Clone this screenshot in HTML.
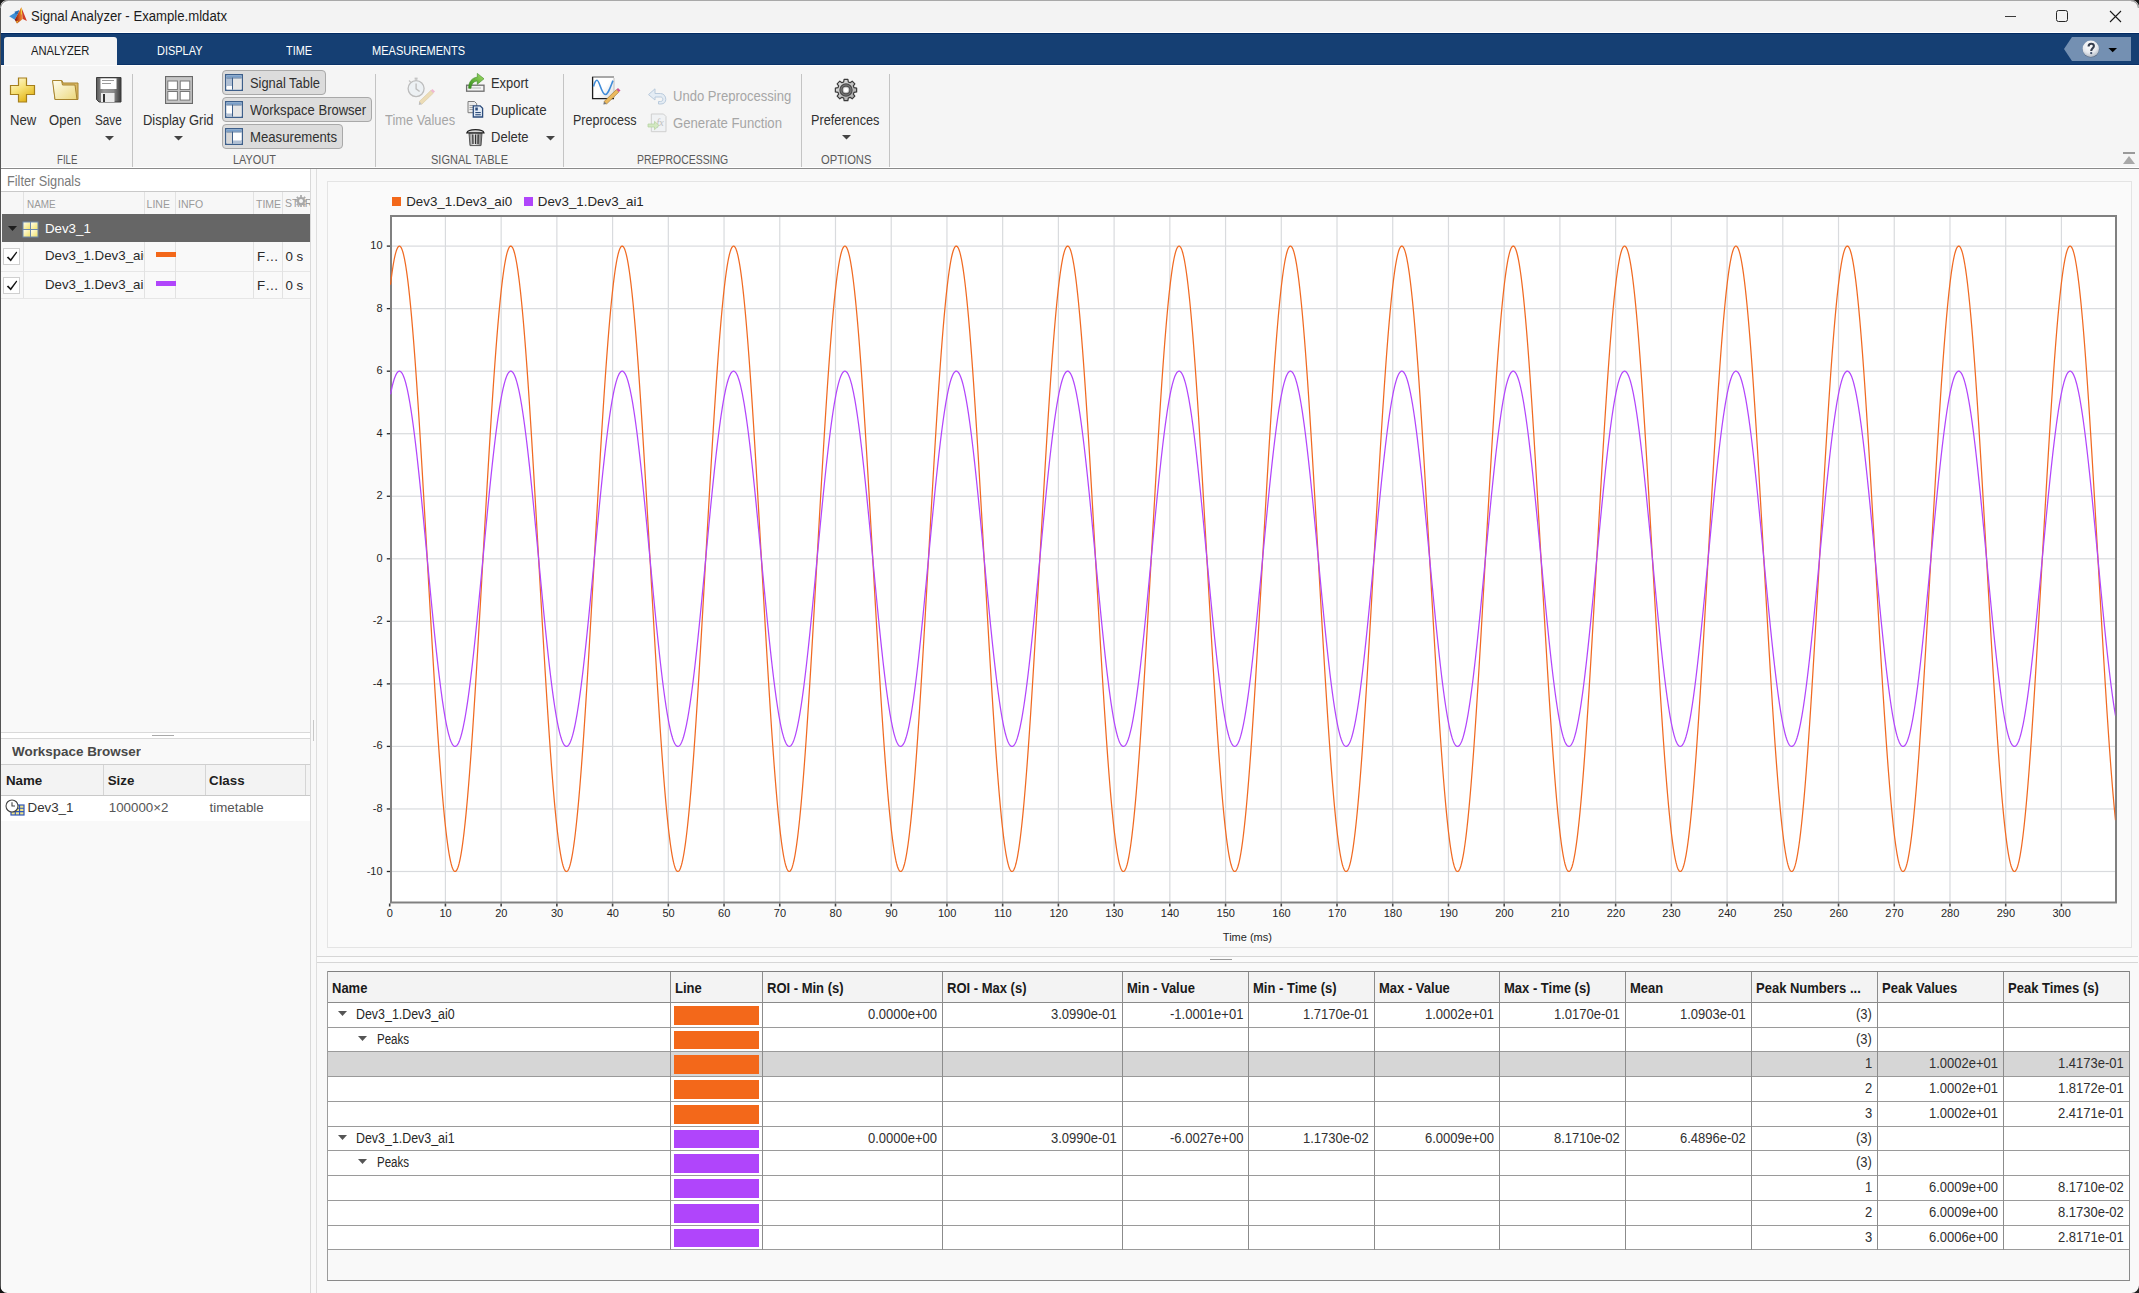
<!DOCTYPE html>
<html><head><meta charset="utf-8"><title>Signal Analyzer - Example.mldatx</title>
<style>
html,body{margin:0;padding:0;}
body{width:2139px;height:1293px;overflow:hidden;position:relative;background:#f5f5f5;font-family:"Liberation Sans",sans-serif;}
.t{position:absolute;white-space:pre;line-height:1;}
</style></head><body>
<div style="position:absolute;left:0px;top:0px;width:2139px;height:1293px;background:#202020"></div>
<div style="position:absolute;left:0px;top:0px;width:2139px;height:1293px;background:#f9f9f9"></div>
<div style="position:absolute;left:0px;top:0px;width:2139px;height:1px;background:#a8a8a8"></div>
<div style="position:absolute;left:0px;top:0px;width:1px;height:1293px;background:#555555"></div>
<div style="position:absolute;left:1px;top:1px;width:1px;height:1291px;background:#ffffff"></div>
<div style="position:absolute;left:1px;top:1px;width:2138px;height:32px;background:#f3f3f3;border-radius:8px 8px 0 0"></div>
<div style="position:absolute;left:1px;top:32px;width:2138px;height:1px;background:#ffffff"></div>
<svg style="position:absolute;left:8px;top:6px" width="21" height="20" viewBox="0 0 21 20">
<defs><linearGradient id="mll" x1="0" y1="0" x2="1" y2="0"><stop offset="0" stop-color="#7a0f0c"/><stop offset="0.55" stop-color="#d2561e"/><stop offset="1" stop-color="#f39a3a"/></linearGradient></defs>
<path d="M1.2,10.3 L11.2,4.2 L9.8,8 L6.8,13.7 Z" fill="#3d8fd6"/>
<path d="M6.5,5.8 L11.2,4.2 L9.8,8 L7.5,8.3 Z" fill="#2a6fb5"/>
<path d="M6.8,13.7 L13.3,1.2 L14.8,13.1 L9,17.6 Z" fill="url(#mll)"/>
<path d="M13.3,1.2 L18.9,15 L14.8,13.1 Z" fill="#cf3d28"/>
<path d="M12.9,2.3 L13.9,2.3 L14.2,8.5 L12.9,8.5 Z" fill="#f2d33a" opacity="0.9"/>
<path d="M8,15.5 L10.5,14.5 L9,17.6 Z" fill="#f3b62f"/>
</svg>
<div class="t" style="left:31.00px;top:9.10px;font-size:14px;color:#1b1b1b;transform:scaleX(0.9398);transform-origin:0 0;">Signal Analyzer - Example.mldatx</div>
<div style="position:absolute;left:2005px;top:16px;width:11px;height:1px;background:#3a3a3a"></div>
<div style="position:absolute;left:2056.4px;top:10.3px;width:11.4px;height:11.4px;border:1.5px solid #262626;border-radius:2.5px;box-sizing:border-box"></div>
<svg style="position:absolute;left:2109px;top:9.5px" width="13" height="13" viewBox="0 0 13 13"><path d="M1,1 L12,12 M12,1 L1,12" stroke="#1a1a1a" stroke-width="1.1"/></svg>
<div style="position:absolute;left:1px;top:33px;width:2138px;height:32px;background:#153f73"></div>
<div style="position:absolute;left:1px;top:33px;width:2138px;height:1px;background:#022a62"></div>
<div style="position:absolute;left:1px;top:64px;width:2138px;height:1px;background:#0a3268"></div>
<div style="position:absolute;left:4px;top:37px;width:113px;height:29px;background:#f5f5f5;border-radius:3px 3px 0 0"></div>
<div class="t" style="left:31.40px;top:44.02px;font-size:13.5px;color:#1a1a1a;transform:scaleX(0.8309);transform-origin:0 0;">ANALYZER</div>
<div class="t" style="left:157.00px;top:44.02px;font-size:13.5px;color:#ffffff;transform:scaleX(0.8120);transform-origin:0 0;">DISPLAY</div>
<div class="t" style="left:286.00px;top:44.02px;font-size:13.5px;color:#ffffff;transform:scaleX(0.8062);transform-origin:0 0;">TIME</div>
<div class="t" style="left:371.70px;top:44.02px;font-size:13.5px;color:#ffffff;transform:scaleX(0.8166);transform-origin:0 0;">MEASUREMENTS</div>
<svg style="position:absolute;left:2063px;top:36px" width="70" height="26" viewBox="0 0 70 26">
<path d="M1,13 L9,1 L68,1 L68,25 L9,25 Z" fill="#7490b2"/>
<defs><radialGradient id="hg" cx="0.45" cy="0.3" r="0.75"><stop offset="0" stop-color="#ffffff"/><stop offset="0.6" stop-color="#e6e9ee"/><stop offset="1" stop-color="#aab3bf"/></radialGradient></defs>
<circle cx="27.9" cy="13.2" r="8.4" fill="#4a5568" opacity="0.55"/>
<circle cx="27.8" cy="12.7" r="8.2" fill="url(#hg)"/>
<path d="M25.6,10.4 C25.6,8.5 26.8,7.7 28.2,7.7 C29.8,7.7 30.9,8.7 30.9,10.1 C30.9,12.2 28.2,12.5 28.2,14.9" stroke="#353d4d" stroke-width="2.1" fill="none"/>
<circle cx="28.2" cy="17.1" r="1.15" fill="#3a4a66"/>
<path d="M45.4,12 L54,12 L49.7,16.3 Z" fill="#000"/>
</svg>
<div style="position:absolute;left:1px;top:65px;width:2138px;height:103px;background:#f5f5f5"></div>
<div style="position:absolute;left:1px;top:65px;width:2138px;height:1px;background:#fdfdfd"></div>
<div style="position:absolute;left:1px;top:167px;width:2138px;height:1px;background:#ffffff"></div>
<div style="position:absolute;left:1px;top:168px;width:2138px;height:1px;background:#8a8a8a"></div>
<div style="position:absolute;left:132px;top:74px;width:1px;height:93px;background:#c4c4c4"></div>
<div style="position:absolute;left:375px;top:74px;width:1px;height:93px;background:#c4c4c4"></div>
<div style="position:absolute;left:563px;top:74px;width:1px;height:93px;background:#c4c4c4"></div>
<div style="position:absolute;left:801px;top:74px;width:1px;height:93px;background:#c4c4c4"></div>
<div style="position:absolute;left:889px;top:74px;width:1px;height:93px;background:#c4c4c4"></div>
<div class="t" style="left:56.60px;top:154.38px;font-size:12.5px;color:#5a5a5a;transform:scaleX(0.7725);transform-origin:0 0;">FILE</div>
<div class="t" style="left:232.70px;top:154.38px;font-size:12.5px;color:#5a5a5a;transform:scaleX(0.8738);transform-origin:0 0;">LAYOUT</div>
<div class="t" style="left:431.00px;top:154.38px;font-size:12.5px;color:#5a5a5a;transform:scaleX(0.8819);transform-origin:0 0;">SIGNAL TABLE</div>
<div class="t" style="left:636.80px;top:154.38px;font-size:12.5px;color:#5a5a5a;transform:scaleX(0.8362);transform-origin:0 0;">PREPROCESSING</div>
<div class="t" style="left:820.60px;top:154.38px;font-size:12.5px;color:#5a5a5a;transform:scaleX(0.8958);transform-origin:0 0;">OPTIONS</div>
<div class="t" style="left:9.80px;top:112.80px;font-size:14px;color:#303030;transform:scaleX(0.9352);transform-origin:0 0;">New</div>
<div class="t" style="left:49.40px;top:112.80px;font-size:14px;color:#303030;transform:scaleX(0.9314);transform-origin:0 0;">Open</div>
<div class="t" style="left:95.20px;top:112.80px;font-size:14px;color:#303030;transform:scaleX(0.8364);transform-origin:0 0;">Save</div>
<div class="t" style="left:142.50px;top:112.80px;font-size:14px;color:#303030;transform:scaleX(0.9246);transform-origin:0 0;">Display Grid</div>
<div class="t" style="left:385.30px;top:112.80px;font-size:14px;color:#a6a6a6;transform:scaleX(0.9193);transform-origin:0 0;">Time Values</div>
<div class="t" style="left:573.30px;top:112.60px;font-size:14px;color:#303030;transform:scaleX(0.8967);transform-origin:0 0;">Preprocess</div>
<div class="t" style="left:811.40px;top:112.60px;font-size:14px;color:#303030;transform:scaleX(0.9061);transform-origin:0 0;">Preferences</div>
<svg style="position:absolute;left:105px;top:136px" width="9" height="5" viewBox="0 0 9 5"><path d="M0,0 L9,0 L4.5,4.5 Z" fill="#444"/></svg>
<svg style="position:absolute;left:174px;top:136px" width="9" height="5" viewBox="0 0 9 5"><path d="M0,0 L9,0 L4.5,4.5 Z" fill="#444"/></svg>
<svg style="position:absolute;left:546px;top:136px" width="9" height="5" viewBox="0 0 9 5"><path d="M0,0 L9,0 L4.5,4.5 Z" fill="#444"/></svg>
<svg style="position:absolute;left:842px;top:134.5px" width="9" height="5" viewBox="0 0 9 5"><path d="M0,0 L9,0 L4.5,4.5 Z" fill="#444"/></svg>
<svg style="position:absolute;left:9px;top:77px" width="27" height="26" viewBox="0 0 27 26">
<defs><linearGradient id="pg" x1="0" y1="0" x2="0.6" y2="1"><stop offset="0" stop-color="#fffbe0"/><stop offset="0.5" stop-color="#f7e27a"/><stop offset="1" stop-color="#e3b518"/></linearGradient></defs>
<path d="M9.5,1 L17.5,1 L17.5,8.5 L25.5,8.5 L25.5,17.5 L17.5,17.5 L17.5,25 L9.5,25 L9.5,17.5 L1.5,17.5 L1.5,8.5 L9.5,8.5 Z" fill="url(#pg)" stroke="#a57f1c" stroke-width="1.2"/>
</svg>
<svg style="position:absolute;left:51px;top:79px" width="29" height="22" viewBox="0 0 29 22">
<defs><linearGradient id="fg" x1="0" y1="0" x2="1" y2="1"><stop offset="0" stop-color="#fffef2"/><stop offset="1" stop-color="#ecd77a"/></linearGradient></defs>
<path d="M2,1.5 L11,1.5 L12,4 L27,4 L27,20.5 L4,20.5 Z" fill="#d9b866" stroke="#a8842e" stroke-width="1"/>
<path d="M1.5,1.5 L10.5,1.5 L11.5,6 L24,6 L26,20.5 L4,20.5 Z" fill="url(#fg)" stroke="#a8842e" stroke-width="1"/>
</svg>
<svg style="position:absolute;left:96px;top:77px" width="26" height="26" viewBox="0 0 26 26">
<defs><linearGradient id="sg" x1="0" y1="0" x2="1" y2="0"><stop offset="0" stop-color="#5a5a5a"/><stop offset="0.3" stop-color="#9a9a9a"/><stop offset="0.7" stop-color="#8a8a8a"/><stop offset="1" stop-color="#3a3a3a"/></linearGradient></defs>
<path d="M0.5,0.5 L25,0.5 L25,25 L3,25 L0.5,22.5 Z" fill="url(#sg)" stroke="#3d3d3d" stroke-width="1"/>
<rect x="4.5" y="1.5" width="16" height="10.5" fill="#ffffff"/>
<rect x="6" y="3" width="12" height="1" fill="#9a9a9a"/><rect x="6" y="6" width="9" height="1" fill="#9a9a9a"/>
<rect x="5" y="16" width="13.5" height="9" fill="#ececec"/><rect x="7" y="17" width="2" height="8" fill="#333"/>
</svg>
<svg style="position:absolute;left:165px;top:76px" width="28" height="28" viewBox="0 0 28 28">
<rect x="0.5" y="0.5" width="27" height="27" fill="#c6c6c6" stroke="#6a6a6a" stroke-width="1.2"/>
<rect x="2.8" y="5" width="9.6" height="8.6" fill="#fff" stroke="#777" stroke-width="1"/>
<rect x="15.2" y="5" width="9.6" height="8.6" fill="#fff" stroke="#777" stroke-width="1"/>
<rect x="2.8" y="15.5" width="9.6" height="8.6" fill="#fff" stroke="#777" stroke-width="1"/>
<rect x="15.2" y="15.5" width="9.6" height="8.6" fill="#fff" stroke="#777" stroke-width="1"/>
</svg>
<div style="position:absolute;left:222px;top:70px;width:104px;height:25px;background:#dcdcdc;border:1px solid #a9a9a9;border-radius:4px;box-sizing:border-box"></div>
<svg style="position:absolute;left:225px;top:74px" width="18" height="17" viewBox="0 0 18 17"><rect x="0.7" y="0.7" width="16.6" height="15.6" fill="#fff" stroke="#3e5f8a" stroke-width="1.4"/><rect x="1.4" y="1.4" width="15.2" height="2.2" fill="#7aa0cb"/><rect x="8" y="4" width="8.5" height="11.3" fill="#e6e6e6"/><rect x="1.5" y="4" width="5.5" height="8" fill="#b1c0d4"/><rect x="1.5" y="12.5" width="5.5" height="2.8" fill="#fff"/><rect x="7" y="3.6" width="1" height="12" fill="#3e5f8a"/><rect x="1.4" y="3.6" width="15.2" height="0.8" fill="#3e5f8a"/></svg>
<div class="t" style="left:250.40px;top:75.80px;font-size:14px;color:#303030;transform:scaleX(0.9194);transform-origin:0 0;">Signal Table</div>
<div style="position:absolute;left:222px;top:97px;width:150px;height:25px;background:#dcdcdc;border:1px solid #a9a9a9;border-radius:4px;box-sizing:border-box"></div>
<svg style="position:absolute;left:225px;top:101px" width="18" height="17" viewBox="0 0 18 17"><rect x="0.7" y="0.7" width="16.6" height="15.6" fill="#fff" stroke="#3e5f8a" stroke-width="1.4"/><rect x="1.4" y="1.4" width="15.2" height="2.2" fill="#7aa0cb"/><rect x="8" y="4" width="8.5" height="11.3" fill="#e6e6e6"/><rect x="1.5" y="4" width="5.5" height="8" fill="#fff"/><rect x="1.5" y="12.5" width="5.5" height="2.8" fill="#b1c0d4"/><rect x="7" y="3.6" width="1" height="12" fill="#3e5f8a"/><rect x="1.4" y="3.6" width="15.2" height="0.8" fill="#3e5f8a"/></svg>
<div class="t" style="left:250.40px;top:102.80px;font-size:14px;color:#303030;transform:scaleX(0.9295);transform-origin:0 0;">Workspace Browser</div>
<div style="position:absolute;left:222px;top:124px;width:121px;height:25px;background:#dcdcdc;border:1px solid #a9a9a9;border-radius:4px;box-sizing:border-box"></div>
<svg style="position:absolute;left:225px;top:128px" width="18" height="17" viewBox="0 0 18 17"><rect x="0.7" y="0.7" width="16.6" height="15.6" fill="#fff" stroke="#3e5f8a" stroke-width="1.4"/><rect x="1.4" y="1.4" width="15.2" height="2.2" fill="#7aa0cb"/><rect x="1.5" y="4" width="5.5" height="11.3" fill="#d8d8d8"/><rect x="8" y="4" width="8.5" height="8" fill="#fff"/><rect x="8" y="12.5" width="8.5" height="2.8" fill="#b1c0d4"/><rect x="7" y="3.6" width="1" height="12" fill="#3e5f8a"/><rect x="1.4" y="3.6" width="15.2" height="0.8" fill="#3e5f8a"/></svg>
<div class="t" style="left:250.40px;top:129.80px;font-size:14px;color:#303030;transform:scaleX(0.9407);transform-origin:0 0;">Measurements</div>
<svg style="position:absolute;left:404px;top:75px" width="32" height="30" viewBox="0 0 32 30">
<circle cx="12.1" cy="13.6" r="8" fill="#edf1f4" stroke="#bdbdbd" stroke-width="1.3"/>
<rect x="10.6" y="2.6" width="3" height="2" fill="#c4c4c4"/><rect x="11.6" y="4" width="1" height="2" fill="#c4c4c4"/>
<path d="M5,5.5 L7,7.5" stroke="#c4c4c4" stroke-width="1.3"/>
<path d="M12.1,8.5 L12.1,13.8 L15.6,16.5" stroke="#bfbfbf" stroke-width="1.4" fill="none"/>
<path d="M15.2,26.6 L26.8,15.5 L29.4,18.1 L17.8,29.2 Z" fill="#ecdcb6" stroke="#d8c9a3" stroke-width="0.6"/>
<path d="M15.2,26.6 L17.8,29.2 L14.8,30 Z" fill="#bdbdbd"/>
<path d="M26.8,15.5 L28.4,13.9 L31,16.5 L29.4,18.1 Z" fill="#efb8d2"/>
</svg>
<svg style="position:absolute;left:465px;top:72px" width="21" height="21" viewBox="0 0 21 21">
<defs><linearGradient id="eg" x1="0" y1="1" x2="1" y2="0"><stop offset="0" stop-color="#2f8a18"/><stop offset="1" stop-color="#a6e06a"/></linearGradient></defs>
<rect x="1.6" y="13.2" width="17.4" height="6" fill="#f4f4f4" stroke="#6e6e6e" stroke-width="1.3"/>
<rect x="4" y="15.2" width="12" height="1.6" fill="#cfcfcf"/>
<path d="M3.6,16.3 C3.6,9.5 7.2,5.6 12.3,5.2 L12.3,1.4 L19,6.8 L12.3,12.3 L12.3,9 C8.8,9.2 6.6,11.5 6,16.3 Z" fill="url(#eg)" stroke="#3c8a22" stroke-width="0.6"/>
</svg>
<svg style="position:absolute;left:466px;top:100px" width="18" height="19" viewBox="0 0 18 19">
<path d="M2,1.5 L8.5,1.5 L10.7,3.7 L10.7,12.7 L2,12.7 Z" fill="#ebebeb" stroke="#7c7c7c" stroke-width="1"/>
<rect x="3.5" y="5" width="4" height="0.9" fill="#9a9a9a"/><rect x="3.5" y="7" width="5.5" height="0.9" fill="#9a9a9a"/><rect x="3.5" y="9" width="5.5" height="0.9" fill="#9a9a9a"/>
<path d="M7.3,5.9 L14.2,5.9 L16.6,8.3 L16.6,17 L7.3,17 Z" fill="#e3ebf5" stroke="#2c4c7c" stroke-width="1.3"/>
<rect x="9.3" y="7.5" width="2.5" height="3" fill="#2c4c7c"/>
<rect x="9.3" y="12" width="5.5" height="1.1" fill="#2c4c7c"/><rect x="9.3" y="14.2" width="5.5" height="1.1" fill="#2c4c7c"/>
</svg>
<svg style="position:absolute;left:466px;top:127px" width="19" height="20" viewBox="0 0 19 20">
<defs><linearGradient id="tg" x1="0" y1="0" x2="1" y2="0"><stop offset="0" stop-color="#8a8a8a"/><stop offset="0.4" stop-color="#f0f0f0"/><stop offset="1" stop-color="#707070"/></linearGradient></defs>
<path d="M3,6 L16,6 L15,18.6 L4,18.6 Z" fill="url(#tg)" stroke="#555" stroke-width="1"/>
<path d="M6.8,7.5 L7,17 M9.5,7.5 L9.5,17 M12.2,7.5 L12,17" stroke="#333" stroke-width="1.3"/>
<path d="M0.8,5.8 C2,1.5 17,1.5 18,5.8 Z" fill="#d8d8d8" stroke="#222" stroke-width="1.2"/>
</svg>
<div class="t" style="left:491.40px;top:75.90px;font-size:14px;color:#303030;transform:scaleX(0.9217);transform-origin:0 0;">Export</div>
<div class="t" style="left:491.40px;top:103.10px;font-size:14px;color:#303030;transform:scaleX(0.9525);transform-origin:0 0;">Duplicate</div>
<div class="t" style="left:491.40px;top:129.70px;font-size:14px;color:#303030;transform:scaleX(0.9291);transform-origin:0 0;">Delete</div>
<svg style="position:absolute;left:590px;top:74px" width="31" height="31" viewBox="0 0 31 31">
<defs><linearGradient id="ppg" x1="0" y1="0" x2="1" y2="1"><stop offset="0.5" stop-color="#ffffff"/><stop offset="1" stop-color="#d8d8d8"/></linearGradient></defs>
<rect x="2.5" y="2.8" width="21.5" height="22" fill="url(#ppg)"/>
<rect x="2" y="2" width="22" height="2" fill="#a8a8a8"/>
<path d="M2.6,3 L2.6,24.6 L24,24.6" stroke="#1e1e1e" stroke-width="1.3" fill="none"/>
<path d="M24,4 L24,24" stroke="#c0c0c0" stroke-width="1"/>
<path d="M3.5,12.5 C5,7 6,6.3 7,6.3 C9.5,6.3 11.5,20.5 15.3,20.5 C18,20.5 20,14 23,6.6" stroke="#3f8bd8" stroke-width="1.6" fill="none"/>
<path d="M14,27.6 L26.4,15.6 L28.9,18.1 L16.5,30.1 Z" fill="#ecb95e" stroke="#9a7430" stroke-width="0.6"/>
<path d="M14,27.6 L16.5,30.1 L13.3,30.6 Z" fill="#777"/>
<path d="M26.4,15.6 L28,14 L30.5,16.5 L28.9,18.1 Z" fill="#d2508c"/>
</svg>
<svg style="position:absolute;left:647px;top:87px" width="20" height="18" viewBox="0 0 20 18">
<path d="M8,1.8 L1.5,7.6 L8,13 L8,10 L13.5,10 C15.2,10 15.8,11.2 15.8,12.3 C15.8,13.6 15,14.5 13.5,14.5 L11.5,14.5 L11.5,17 L13.8,17 C17.2,17 18.8,15 18.8,12.3 C18.8,9.3 16.8,6.5 13.5,6.5 L8,6.5 Z" fill="#e4ecf4" stroke="#b9cadc" stroke-width="1"/>
</svg>
<svg style="position:absolute;left:647px;top:113px" width="20" height="20" viewBox="0 0 20 20">
<path d="M4.3,1 L16.5,1 L19,3.5 L19,18.7 L4.3,18.7 Z" fill="#f0f2f4" stroke="#cfcfcf" stroke-width="1"/>
<text x="9.5" y="13" font-family="Liberation Serif" font-style="italic" font-size="10" fill="#bdbdbd">fx</text>
<path d="M1,11 L7.5,11 L7.5,8.3 L12,12.5 L7.5,16.7 L7.5,14 L1,14 Z" fill="#d3e8c2" stroke="#b3d19d" stroke-width="0.7"/>
</svg>
<div class="t" style="left:673.30px;top:89.00px;font-size:14px;color:#a6a6a6;transform:scaleX(0.9325);transform-origin:0 0;">Undo Preprocessing</div>
<div class="t" style="left:673.30px;top:115.80px;font-size:14px;color:#a6a6a6;transform:scaleX(0.9399);transform-origin:0 0;">Generate Function</div>
<svg style="position:absolute;left:834px;top:78px" width="24" height="24" viewBox="0 0 24 24">
<defs><linearGradient id="gg" x1="0" y1="0" x2="1" y2="1"><stop offset="0" stop-color="#e8e8e8"/><stop offset="1" stop-color="#a2a2a2"/></linearGradient></defs>
<polygon points="9.68,3.93 10.12,1.36 13.88,1.36 14.32,3.93 16.07,4.65 18.19,3.15 20.85,5.81 19.35,7.93 20.07,9.68 22.64,10.12 22.64,13.88 20.07,14.32 19.35,16.07 20.85,18.19 18.19,20.85 16.07,19.35 14.32,20.07 13.88,22.64 10.12,22.64 9.68,20.07 7.93,19.35 5.81,20.85 3.15,18.19 4.65,16.07 3.93,14.32 1.36,13.88 1.36,10.12 3.93,9.68 4.65,7.93 3.15,5.81 5.81,3.15 7.93,4.65" fill="url(#gg)" stroke="#3a3a3a" stroke-width="1.2" stroke-linejoin="round"/>
<circle cx="12" cy="12" r="5" fill="none" stroke="#4d4d4d" stroke-width="3.4"/>
<circle cx="12" cy="12" r="5" fill="none" stroke="#8a8a8a" stroke-width="0.8"/>
<circle cx="12" cy="12" r="2.3" fill="#ffffff"/>
</svg>
<div style="position:absolute;left:2123px;top:152px;width:12px;height:2px;background:#9a9a9a"></div>
<svg style="position:absolute;left:2123px;top:155px" width="12" height="9" viewBox="0 0 12 9"><path d="M0,9 L6,1 L12,9 Z" fill="#a8a8a8"/></svg>
<div style="position:absolute;left:1px;top:169px;width:309px;height:1124px;background:#f9f9f9"></div>
<div style="position:absolute;left:310px;top:169px;width:1px;height:1124px;background:#d9d9d9"></div>
<div style="position:absolute;left:316px;top:169px;width:1px;height:1124px;background:#dedede"></div>
<div style="position:absolute;left:311px;top:169px;width:5px;height:1124px;background:#f9f9f9"></div>
<div style="position:absolute;left:313px;top:720px;width:1px;height:21px;background:#c8c8c8"></div>
<div style="position:absolute;left:1px;top:169px;width:309px;height:22px;background:#ffffff"></div>
<div style="position:absolute;left:1px;top:191px;width:309px;height:1px;background:#c9c9c9"></div>
<div class="t" style="left:6.60px;top:173.99px;font-size:14.6px;color:#7a7a7a;transform:scaleX(0.8713);transform-origin:0 0;">Filter Signals</div>
<div style="position:absolute;left:1px;top:192px;width:309px;height:22px;background:#f7f7f7"></div>
<div style="position:absolute;left:23px;top:192px;width:1px;height:22px;background:#e2e2e2"></div>
<div style="position:absolute;left:144px;top:192px;width:1px;height:22px;background:#e2e2e2"></div>
<div style="position:absolute;left:175px;top:192px;width:1px;height:22px;background:#e2e2e2"></div>
<div style="position:absolute;left:253px;top:192px;width:1px;height:22px;background:#e2e2e2"></div>
<div style="position:absolute;left:282px;top:192px;width:1px;height:22px;background:#e2e2e2"></div>
<div class="t" style="left:26.90px;top:198.88px;font-size:10.5px;color:#9a9a9a;transform:scaleX(0.9425);transform-origin:0 0;">NAME</div>
<div class="t" style="left:146.60px;top:198.88px;font-size:10.5px;color:#9a9a9a;">LINE</div>
<div class="t" style="left:178.00px;top:198.88px;font-size:10.5px;color:#9a9a9a;">INFO</div>
<div class="t" style="left:256.00px;top:198.88px;font-size:10.5px;color:#9a9a9a;">TIME</div>
<div style="position:absolute;left:284px;top:199px;width:26px;height:12px;overflow:hidden"><div class="t" style="left:1px;top:-0.9px;font-size:10.5px;color:#9a9a9a">START</div></div>
<svg style="position:absolute;left:295px;top:195px" width="12" height="12" viewBox="0 0 12 12"><polygon points="10.11,5.13 11.94,5.16 11.94,6.84 10.11,6.87 9.52,8.29 10.79,9.61 9.61,10.79 8.29,9.52 6.87,10.11 6.84,11.94 5.16,11.94 5.13,10.11 3.71,9.52 2.39,10.79 1.21,9.61 2.48,8.29 1.89,6.87 0.06,6.84 0.06,5.16 1.89,5.13 2.48,3.71 1.21,2.39 2.39,1.21 3.71,2.48 5.13,1.89 5.16,0.06 6.84,0.06 6.87,1.89 8.29,2.48 9.61,1.21 10.79,2.39 9.52,3.71" fill="#a9a9a9"/><circle cx="6" cy="6" r="2" fill="#f7f7f7"/></svg>
<div style="position:absolute;left:2px;top:214px;width:308px;height:28px;background:#666666"></div>
<svg style="position:absolute;left:8px;top:226px" width="9" height="6" viewBox="0 0 9 6"><path d="M0,0 L9,0 L4.5,5 Z" fill="#1e1e1e"/></svg>
<svg style="position:absolute;left:22px;top:221px" width="17" height="17" viewBox="0 0 17 17">
<defs><linearGradient id="yg" x1="0" y1="0" x2="1" y2="1"><stop offset="0" stop-color="#fffde8"/><stop offset="1" stop-color="#f3e36a"/></linearGradient></defs>
<rect x="0.5" y="0.5" width="16" height="16" fill="#6f8aab"/>
<rect x="1.5" y="1.5" width="6.5" height="6.5" fill="url(#yg)"/><rect x="9" y="1.5" width="6.5" height="6.5" fill="url(#yg)"/>
<rect x="1.5" y="9" width="6.5" height="6.5" fill="url(#yg)"/><rect x="9" y="9" width="6.5" height="6.5" fill="url(#yg)"/>
</svg>
<div class="t" style="left:44.90px;top:221.57px;font-size:13.33px;color:#ffffff;">Dev3_1</div>
<div style="position:absolute;left:1px;top:271px;width:309px;height:1px;background:#e6e6e6"></div>
<div style="position:absolute;left:23px;top:242px;width:1px;height:29px;background:#e2e2e2"></div>
<div style="position:absolute;left:144px;top:242px;width:1px;height:29px;background:#e2e2e2"></div>
<div style="position:absolute;left:175px;top:242px;width:1px;height:29px;background:#e2e2e2"></div>
<div style="position:absolute;left:253px;top:242px;width:1px;height:29px;background:#e2e2e2"></div>
<div style="position:absolute;left:282px;top:242px;width:1px;height:29px;background:#e2e2e2"></div>
<div style="position:absolute;left:3px;top:248px;width:17px;height:17px;background:#fff;border:1px solid #cfcfcf;box-sizing:border-box"></div>
<svg style="position:absolute;left:5px;top:250px" width="13" height="13" viewBox="0 0 13 13"><path d="M1.8,7.6 L3.2,6.4 L5.6,8.9 L11.4,1.6 L12.2,2.4 L5.8,11.6 Z" fill="#151515"/></svg>
<div style="position:absolute;left:24px;top:242px;width:120px;height:29px;overflow:hidden"><div class="t" style="left:20.9px;top:7.47px;font-size:13.33px;color:#2a2a2a">Dev3_1.Dev3_ai0</div></div>
<div style="position:absolute;left:156px;top:252px;width:20px;height:5px;background:#f3681a"></div>
<div class="t" style="left:257.00px;top:249.87px;font-size:13.33px;color:#2a2a2a;">F…</div>
<div class="t" style="left:285.50px;top:249.87px;font-size:13.33px;color:#2a2a2a;">0 s</div>
<div style="position:absolute;left:1px;top:298px;width:309px;height:1px;background:#e6e6e6"></div>
<div style="position:absolute;left:23px;top:271px;width:1px;height:27px;background:#e2e2e2"></div>
<div style="position:absolute;left:144px;top:271px;width:1px;height:27px;background:#e2e2e2"></div>
<div style="position:absolute;left:175px;top:271px;width:1px;height:27px;background:#e2e2e2"></div>
<div style="position:absolute;left:253px;top:271px;width:1px;height:27px;background:#e2e2e2"></div>
<div style="position:absolute;left:282px;top:271px;width:1px;height:27px;background:#e2e2e2"></div>
<div style="position:absolute;left:3px;top:277px;width:17px;height:17px;background:#fff;border:1px solid #cfcfcf;box-sizing:border-box"></div>
<svg style="position:absolute;left:5px;top:279px" width="13" height="13" viewBox="0 0 13 13"><path d="M1.8,7.6 L3.2,6.4 L5.6,8.9 L11.4,1.6 L12.2,2.4 L5.8,11.6 Z" fill="#151515"/></svg>
<div style="position:absolute;left:24px;top:271px;width:120px;height:27px;overflow:hidden"><div class="t" style="left:20.9px;top:7.47px;font-size:13.33px;color:#2a2a2a">Dev3_1.Dev3_ai1</div></div>
<div style="position:absolute;left:156px;top:281px;width:20px;height:5px;background:#b045fb"></div>
<div class="t" style="left:257.00px;top:278.87px;font-size:13.33px;color:#2a2a2a;">F…</div>
<div class="t" style="left:285.50px;top:278.87px;font-size:13.33px;color:#2a2a2a;">0 s</div>
<div style="position:absolute;left:1px;top:732px;width:309px;height:1px;background:#d9d9d9"></div>
<div style="position:absolute;left:1px;top:733px;width:309px;height:5px;background:#ffffff"></div>
<div style="position:absolute;left:1px;top:738px;width:309px;height:1px;background:#d9d9d9"></div>
<div style="position:absolute;left:152px;top:735px;width:22px;height:1px;background:#a9a9a9"></div>
<div class="t" style="left:12.30px;top:744.57px;font-size:13.33px;color:#484848;font-weight:bold;transform:scaleX(1.0078);transform-origin:0 0;">Workspace Browser</div>
<div style="position:absolute;left:1px;top:764px;width:309px;height:1px;background:#cfcfcf"></div>
<div style="position:absolute;left:1px;top:765px;width:309px;height:30px;background:#f3f3f3"></div>
<div style="position:absolute;left:1px;top:795px;width:309px;height:1px;background:#c9c9c9"></div>
<div style="position:absolute;left:103px;top:765px;width:1px;height:30px;background:#d5d5d5"></div>
<div style="position:absolute;left:205px;top:765px;width:1px;height:30px;background:#d5d5d5"></div>
<div style="position:absolute;left:305px;top:765px;width:1px;height:30px;background:#d5d5d5"></div>
<div class="t" style="left:5.90px;top:773.57px;font-size:13.33px;color:#1e1e1e;font-weight:bold;">Name</div>
<div class="t" style="left:107.70px;top:773.57px;font-size:13.33px;color:#1e1e1e;font-weight:bold;">Size</div>
<div class="t" style="left:209.00px;top:773.57px;font-size:13.33px;color:#1e1e1e;font-weight:bold;">Class</div>
<div style="position:absolute;left:1px;top:796px;width:309px;height:25px;background:#ffffff"></div>
<svg style="position:absolute;left:5px;top:799px" width="20" height="17" viewBox="0 0 20 17">
<rect x="6" y="6" width="13" height="10" fill="#f0e48a" stroke="#2f55b8" stroke-width="1.2"/>
<path d="M10.3,6 L10.3,16 M14.6,6 L14.6,16 M6,9.3 L19,9.3 M6,12.6 L19,12.6" stroke="#2f55b8" stroke-width="1.1"/>
<circle cx="7" cy="7" r="6" fill="#fff" stroke="#444" stroke-width="1.1"/>
<path d="M7,3.3 L7,7 L10,7" stroke="#444" stroke-width="1.1" fill="none"/>
</svg>
<div class="t" style="left:27.50px;top:800.57px;font-size:13.33px;color:#333333;">Dev3_1</div>
<div class="t" style="left:108.80px;top:800.57px;font-size:13.33px;color:#555555;">100000×2</div>
<div class="t" style="left:209.60px;top:800.57px;font-size:13.33px;color:#555555;">timetable</div>
<div style="position:absolute;left:317px;top:169px;width:1821px;height:787px;background:#f9f9f9"></div>
<div style="position:absolute;left:327px;top:181px;width:1805px;height:767px;background:#fafafa;border:1px solid #e4e4e4;box-sizing:border-box"></div>
<div style="position:absolute;left:392px;top:197px;width:9px;height:9px;background:#f3681a"></div>
<div class="t" style="left:406.20px;top:194.57px;font-size:13.33px;color:#262626;">Dev3_1.Dev3_ai0</div>
<div style="position:absolute;left:524px;top:197px;width:9px;height:9px;background:#b045fb"></div>
<div class="t" style="left:537.80px;top:194.57px;font-size:13.33px;color:#262626;">Dev3_1.Dev3_ai1</div>
<svg style="position:absolute;left:317px;top:169px" width="1821" height="787" viewBox="317 169 1821 787"><rect x="390" y="215" width="1727" height="689" fill="#ffffff"/><rect x="392" y="870.90" width="1723" height="1.2" fill="#d9dbde"/><rect x="392" y="808.36" width="1723" height="1.2" fill="#d9dbde"/><rect x="392" y="745.82" width="1723" height="1.2" fill="#d9dbde"/><rect x="392" y="683.28" width="1723" height="1.2" fill="#d9dbde"/><rect x="392" y="620.74" width="1723" height="1.2" fill="#d9dbde"/><rect x="392" y="558.20" width="1723" height="1.2" fill="#d9dbde"/><rect x="392" y="495.66" width="1723" height="1.2" fill="#d9dbde"/><rect x="392" y="433.12" width="1723" height="1.2" fill="#d9dbde"/><rect x="392" y="370.58" width="1723" height="1.2" fill="#d9dbde"/><rect x="392" y="308.04" width="1723" height="1.2" fill="#d9dbde"/><rect x="392" y="245.50" width="1723" height="1.2" fill="#d9dbde"/><rect x="444.82" y="217" width="1.2" height="685" fill="#d9dbde"/><rect x="500.55" y="217" width="1.2" height="685" fill="#d9dbde"/><rect x="556.27" y="217" width="1.2" height="685" fill="#d9dbde"/><rect x="612.00" y="217" width="1.2" height="685" fill="#d9dbde"/><rect x="667.72" y="217" width="1.2" height="685" fill="#d9dbde"/><rect x="723.44" y="217" width="1.2" height="685" fill="#d9dbde"/><rect x="779.17" y="217" width="1.2" height="685" fill="#d9dbde"/><rect x="834.89" y="217" width="1.2" height="685" fill="#d9dbde"/><rect x="890.62" y="217" width="1.2" height="685" fill="#d9dbde"/><rect x="946.34" y="217" width="1.2" height="685" fill="#d9dbde"/><rect x="1002.06" y="217" width="1.2" height="685" fill="#d9dbde"/><rect x="1057.79" y="217" width="1.2" height="685" fill="#d9dbde"/><rect x="1113.51" y="217" width="1.2" height="685" fill="#d9dbde"/><rect x="1169.24" y="217" width="1.2" height="685" fill="#d9dbde"/><rect x="1224.96" y="217" width="1.2" height="685" fill="#d9dbde"/><rect x="1280.68" y="217" width="1.2" height="685" fill="#d9dbde"/><rect x="1336.41" y="217" width="1.2" height="685" fill="#d9dbde"/><rect x="1392.13" y="217" width="1.2" height="685" fill="#d9dbde"/><rect x="1447.86" y="217" width="1.2" height="685" fill="#d9dbde"/><rect x="1503.58" y="217" width="1.2" height="685" fill="#d9dbde"/><rect x="1559.30" y="217" width="1.2" height="685" fill="#d9dbde"/><rect x="1615.03" y="217" width="1.2" height="685" fill="#d9dbde"/><rect x="1670.75" y="217" width="1.2" height="685" fill="#d9dbde"/><rect x="1726.48" y="217" width="1.2" height="685" fill="#d9dbde"/><rect x="1782.20" y="217" width="1.2" height="685" fill="#d9dbde"/><rect x="1837.92" y="217" width="1.2" height="685" fill="#d9dbde"/><rect x="1893.65" y="217" width="1.2" height="685" fill="#d9dbde"/><rect x="1949.37" y="217" width="1.2" height="685" fill="#d9dbde"/><rect x="2005.10" y="217" width="1.2" height="685" fill="#d9dbde"/><rect x="2060.82" y="217" width="1.2" height="685" fill="#d9dbde"/><rect x="391" y="216" width="1725" height="686.5" fill="none" stroke="#808080" stroke-width="2"/><clipPath id="axclip"><rect x="390" y="216" width="1725.5" height="686"/></clipPath><g clip-path="url(#axclip)"><polyline points="390.5,284.69 391.0,280.56 391.5,276.64 392.0,272.95 392.5,269.49 393.0,266.26 393.5,263.26 394.0,260.50 394.5,257.97 395.0,255.68 395.5,253.64 396.0,251.83 396.5,250.28 397.0,248.96 397.5,247.89 398.0,247.07 398.5,246.50 399.0,246.18 399.5,246.10 400.0,246.28 400.5,246.70 401.0,247.37 401.5,248.29 402.0,249.46 402.5,250.87 403.0,252.53 403.5,254.43 404.0,256.57 404.5,258.95 405.0,261.57 405.5,264.43 406.0,267.52 406.5,270.85 407.0,274.40 407.5,278.18 408.0,282.18 408.5,286.41 409.0,290.85 409.5,295.50 410.0,300.36 410.5,305.43 411.0,310.70 411.5,316.16 412.0,321.82 412.5,327.67 413.0,333.70 413.5,339.91 414.0,346.30 414.5,352.85 415.0,359.57 415.5,366.45 416.0,373.48 416.5,380.65 417.0,387.97 417.5,395.43 418.0,403.01 418.5,410.72 419.0,418.55 419.5,426.48 420.0,434.53 420.5,442.67 421.0,450.90 421.5,459.22 422.0,467.62 422.5,476.09 423.0,484.63 423.5,493.23 424.0,501.88 424.5,510.57 425.0,519.30 425.5,528.07 426.0,536.86 426.5,545.66 427.0,554.48 427.5,563.30 428.0,572.11 428.5,580.92 429.0,589.71 429.5,598.47 430.0,607.20 430.5,615.90 431.0,624.54 431.5,633.14 432.0,641.68 432.5,650.15 433.0,658.54 433.5,666.86 434.0,675.10 434.5,683.24 435.0,691.28 435.5,699.21 436.0,707.04 436.5,714.74 437.0,722.32 437.5,729.78 438.0,737.09 438.5,744.27 439.0,751.29 439.5,758.17 440.0,764.88 440.5,771.43 441.0,777.81 441.5,784.02 442.0,790.05 442.5,795.89 443.0,801.55 443.5,807.01 444.0,812.28 444.5,817.34 445.0,822.20 445.5,826.85 446.0,831.28 446.5,835.50 447.0,839.50 447.5,843.27 448.0,846.82 448.5,850.14 449.0,853.23 449.5,856.08 450.0,858.70 450.5,861.08 451.0,863.21 451.5,865.11 452.0,866.76 452.5,868.17 453.0,869.33 453.5,870.24 454.0,870.91 454.5,871.33 455.0,871.50 455.5,871.42 456.0,871.09 456.5,870.51 457.0,869.69 457.5,868.61 458.0,867.30 458.5,865.73 459.0,863.92 459.5,861.87 460.0,859.58 460.5,857.05 461.0,854.28 461.5,851.28 462.0,848.04 462.5,844.58 463.0,840.88 463.5,836.96 464.0,832.82 464.5,828.47 465.0,823.90 465.5,819.11 466.0,814.12 466.5,808.93 467.0,803.54 467.5,797.95 468.0,792.17 468.5,786.21 469.0,780.07 469.5,773.75 470.0,767.26 470.5,760.60 471.0,753.78 471.5,746.81 472.0,739.69 472.5,732.43 473.0,725.02 473.5,717.49 474.0,709.82 474.5,702.04 475.0,694.15 475.5,686.14 476.0,678.04 476.5,669.84 477.0,661.55 477.5,653.18 478.0,644.73 478.5,636.22 479.0,627.65 479.5,619.02 480.0,610.34 480.5,601.62 481.0,592.87 481.5,584.09 482.0,575.29 482.5,566.47 483.0,557.65 483.5,548.84 484.0,540.02 484.5,531.23 485.0,522.46 485.5,513.71 486.0,505.00 486.5,496.34 487.0,487.72 487.5,479.16 488.0,470.66 488.5,462.24 489.0,453.89 489.5,445.62 490.0,437.45 490.5,429.37 491.0,421.39 491.5,413.52 492.0,405.77 492.5,398.14 493.0,390.64 493.5,383.27 494.0,376.04 494.5,368.96 495.0,362.03 495.5,355.25 496.0,348.64 496.5,342.19 497.0,335.92 497.5,329.82 498.0,323.91 498.5,318.18 499.0,312.64 499.5,307.30 500.0,302.16 500.5,297.22 501.0,292.50 501.5,287.98 502.0,283.68 502.5,279.60 503.0,275.74 503.5,272.10 504.0,268.69 504.5,265.52 505.0,262.58 505.5,259.87 506.0,257.40 506.5,255.17 507.0,253.18 507.5,251.44 508.0,249.94 508.5,248.68 509.0,247.68 509.5,246.91 510.0,246.40 510.5,246.14 511.0,246.12 511.5,246.36 512.0,246.84 512.5,247.57 513.0,248.55 513.5,249.77 514.0,251.24 514.5,252.96 515.0,254.92 515.5,257.12 516.0,259.56 516.5,262.24 517.0,265.15 517.5,268.30 518.0,271.68 518.5,275.29 519.0,279.12 519.5,283.18 520.0,287.45 520.5,291.94 521.0,296.65 521.5,301.56 522.0,306.67 522.5,311.99 523.0,317.50 523.5,323.21 524.0,329.10 524.5,335.18 525.0,341.43 525.5,347.86 526.0,354.45 526.5,361.21 527.0,368.12 527.5,375.19 528.0,382.40 528.5,389.75 529.0,397.23 529.5,404.85 530.0,412.59 530.5,420.44 531.0,428.40 531.5,436.47 532.0,444.64 532.5,452.89 533.0,461.23 533.5,469.65 534.0,478.14 534.5,486.69 535.0,495.30 535.5,503.96 536.0,512.66 536.5,521.40 537.0,530.18 537.5,538.97 538.0,547.78 538.5,556.60 539.0,565.41 539.5,574.23 540.0,583.03 540.5,591.81 541.0,600.57 541.5,609.29 542.0,617.98 542.5,626.61 543.0,635.19 543.5,643.72 544.0,652.17 544.5,660.55 545.0,668.85 545.5,677.06 546.0,685.17 546.5,693.19 547.0,701.10 547.5,708.90 548.0,716.57 548.5,724.12 549.0,731.54 549.5,738.83 550.0,745.97 550.5,752.96 551.0,759.79 551.5,766.47 552.0,772.98 552.5,779.32 553.0,785.48 553.5,791.47 554.0,797.27 554.5,802.88 555.0,808.29 555.5,813.51 556.0,818.52 556.5,823.33 557.0,827.93 557.5,832.31 558.0,836.48 558.5,840.42 559.0,844.14 559.5,847.64 560.0,850.90 560.5,853.93 561.0,856.73 561.5,859.29 562.0,861.61 562.5,863.69 563.0,865.53 563.5,867.12 564.0,868.47 564.5,869.57 565.0,870.43 565.5,871.03 566.0,871.39 566.5,871.50 567.0,871.36 567.5,870.97 568.0,870.34 568.5,869.45 569.0,868.32 569.5,866.94 570.0,865.32 570.5,863.45 571.0,861.35 571.5,859.00 572.0,856.41 572.5,853.58 573.0,850.52 573.5,847.23 574.0,843.71 574.5,839.96 575.0,835.99 575.5,831.80 576.0,827.39 576.5,822.77 577.0,817.93 577.5,812.89 578.0,807.65 578.5,802.21 579.0,796.58 579.5,790.76 580.0,784.75 580.5,778.57 581.0,772.21 581.5,765.68 582.0,758.98 582.5,752.13 583.0,745.12 583.5,737.96 584.0,730.66 584.5,723.23 585.0,715.66 585.5,707.97 586.0,700.16 586.5,692.23 587.0,684.21 587.5,676.08 588.0,667.86 588.5,659.55 589.0,651.16 589.5,642.70 590.0,634.17 590.5,625.58 591.0,616.94 591.5,608.25 592.0,599.52 592.5,590.76 593.0,581.98 593.5,573.17 594.0,564.36 594.5,555.54 595.0,546.72 595.5,537.91 596.0,529.12 596.5,520.35 597.0,511.62 597.5,502.92 598.0,494.26 598.5,485.66 599.0,477.11 599.5,468.63 600.0,460.23 600.5,451.90 601.0,443.65 601.5,435.50 602.0,427.44 602.5,419.49 603.0,411.65 603.5,403.93 604.0,396.33 604.5,388.86 605.0,381.52 605.5,374.33 606.0,367.28 606.5,360.39 607.0,353.65 607.5,347.08 608.0,340.67 608.5,334.44 609.0,328.38 609.5,322.51 610.0,316.83 610.5,311.34 611.0,306.05 611.5,300.96 612.0,296.07 612.5,291.39 613.0,286.93 613.5,282.68 614.0,278.65 614.5,274.84 615.0,271.26 615.5,267.91 616.0,264.79 616.5,261.90 617.0,259.25 617.5,256.84 618.0,254.67 618.5,252.74 619.0,251.06 619.5,249.61 620.0,248.42 620.5,247.47 621.0,246.77 621.5,246.32 622.0,246.11 622.5,246.16 623.0,246.45 623.5,246.99 624.0,247.78 624.5,248.82 625.0,250.10 625.5,251.63 626.0,253.41 626.5,255.43 627.0,257.68 627.5,260.18 628.0,262.92 628.5,265.89 629.0,269.09 629.5,272.53 630.0,276.19 630.5,280.07 631.0,284.18 631.5,288.51 632.0,293.05 632.5,297.81 633.0,302.77 633.5,307.93 634.0,313.30 634.5,318.86 635.0,324.61 635.5,330.54 636.0,336.66 636.5,342.96 637.0,349.42 637.5,356.06 638.0,362.85 638.5,369.80 639.0,376.90 639.5,384.15 640.0,391.53 640.5,399.05 641.0,406.70 641.5,414.46 642.0,422.34 642.5,430.33 643.0,438.42 643.5,446.61 644.0,454.89 644.5,463.24 645.0,471.68 645.5,480.18 646.0,488.75 646.5,497.37 647.0,506.05 647.5,514.76 648.0,523.51 648.5,532.28 649.0,541.08 649.5,549.89 650.0,558.71 650.5,567.53 651.0,576.34 651.5,585.14 652.0,593.92 652.5,602.67 653.0,611.38 653.5,620.05 654.0,628.68 654.5,637.25 655.0,645.75 655.5,654.19 656.0,662.55 656.5,670.83 657.0,679.01 657.5,687.11 658.0,695.10 658.5,702.98 659.0,710.75 659.5,718.40 660.0,725.92 660.5,733.31 661.0,740.55 661.5,747.66 662.0,754.61 662.5,761.41 663.0,768.05 663.5,774.52 664.0,780.81 664.5,786.94 665.0,792.88 665.5,798.63 666.0,804.20 666.5,809.56 667.0,814.73 667.5,819.70 668.0,824.46 668.5,829.00 669.0,833.33 669.5,837.45 670.0,841.34 670.5,845.00 671.0,848.44 671.5,851.65 672.0,854.63 672.5,857.37 673.0,859.87 673.5,862.13 674.0,864.15 674.5,865.93 675.0,867.47 675.5,868.76 676.0,869.80 676.5,870.59 677.0,871.14 677.5,871.44 678.0,871.49 678.5,871.29 679.0,870.84 679.5,870.15 680.0,869.20 680.5,868.01 681.0,866.58 681.5,864.89 682.0,862.97 682.5,860.80 683.0,858.40 683.5,855.75 684.0,852.87 684.5,849.75 685.0,846.41 685.5,842.83 686.0,839.03 686.5,835.00 687.0,830.76 687.5,826.30 688.0,821.63 688.5,816.74 689.0,811.66 689.5,806.37 690.0,800.88 690.5,795.20 691.0,789.34 691.5,783.29 692.0,777.06 692.5,770.65 693.0,764.08 693.5,757.35 694.0,750.46 694.5,743.41 695.0,736.22 695.5,728.89 696.0,721.42 696.5,713.82 697.0,706.10 697.5,698.27 698.0,690.32 698.5,682.26 699.0,674.11 699.5,665.87 700.0,657.54 700.5,649.13 701.0,640.66 701.5,632.11 702.0,623.51 702.5,614.86 703.0,606.16 703.5,597.42 704.0,588.65 704.5,579.86 705.0,571.06 705.5,562.24 706.0,553.42 706.5,544.60 707.0,535.80 707.5,527.01 708.0,518.25 708.5,509.53 709.0,500.84 709.5,492.19 710.0,483.60 710.5,475.07 711.0,466.61 711.5,458.22 712.0,449.91 712.5,441.69 713.0,433.56 713.5,425.52 714.0,417.60 714.5,409.79 715.0,402.09 715.5,394.52 716.0,387.09 716.5,379.78 717.0,372.62 717.5,365.61 718.0,358.76 718.5,352.06 719.0,345.52 719.5,339.16 720.0,332.97 720.5,326.96 721.0,321.13 721.5,315.50 722.0,310.05 722.5,304.81 723.0,299.77 723.5,294.93 724.0,290.30 724.5,285.89 725.0,281.69 725.5,277.72 726.0,273.96 726.5,270.44 727.0,267.14 727.5,264.08 728.0,261.25 728.5,258.65 729.0,256.30 729.5,254.19 730.0,252.31 730.5,250.69 731.0,249.30 731.5,248.17 732.0,247.28 732.5,246.64 733.0,246.25 733.5,246.10 734.0,246.21 734.5,246.56 735.0,247.16 735.5,248.01 736.0,249.11 736.5,250.45 737.0,252.04 737.5,253.87 738.0,255.95 738.5,258.26 739.0,260.82 739.5,263.61 740.0,266.64 740.5,269.89 741.0,273.38 741.5,277.10 742.0,281.04 742.5,285.20 743.0,289.58 743.5,294.17 744.0,298.98 744.5,303.99 745.0,309.20 745.5,314.61 746.0,320.22 746.5,326.01 747.0,331.99 747.5,338.16 748.0,344.49 748.5,351.00 749.0,357.67 749.5,364.51 750.0,371.49 750.5,378.63 751.0,385.91 751.5,393.33 752.0,400.87 752.5,408.55 753.0,416.34 753.5,424.25 754.0,432.26 754.5,440.38 755.0,448.59 755.5,456.88 756.0,465.26 756.5,473.71 757.0,482.23 757.5,490.82 758.0,499.45 758.5,508.13 759.0,516.86 759.5,525.61 760.0,534.39 760.5,543.20 761.0,552.01 761.5,560.83 762.0,569.65 762.5,578.46 763.0,587.25 763.5,596.02 764.0,604.76 764.5,613.47 765.0,622.13 765.5,630.74 766.0,639.29 766.5,647.78 767.0,656.20 767.5,664.54 768.0,672.80 768.5,680.97 769.0,689.04 769.5,697.00 770.0,704.86 770.5,712.60 771.0,720.21 771.5,727.70 772.0,735.06 772.5,742.27 773.0,749.34 773.5,756.26 774.0,763.02 774.5,769.61 775.0,776.04 775.5,782.30 776.0,788.38 776.5,794.28 777.0,799.98 777.5,805.50 778.0,810.82 778.5,815.94 779.0,820.86 779.5,825.57 780.0,830.06 780.5,834.34 781.0,838.40 781.5,842.24 782.0,845.85 782.5,849.23 783.0,852.39 783.5,855.31 784.0,857.99 784.5,860.43 785.0,862.64 785.5,864.60 786.0,866.32 786.5,867.80 787.0,869.03 787.5,870.01 788.0,870.75 788.5,871.23 789.0,871.47 789.5,871.46 790.0,871.21 790.5,870.70 791.0,869.94 791.5,868.94 792.0,867.69 792.5,866.19 793.0,864.45 793.5,862.47 794.0,860.25 794.5,857.78 795.0,855.08 795.5,852.14 796.0,848.97 796.5,845.57 797.0,841.94 797.5,838.08 798.0,834.01 798.5,829.71 799.0,825.20 799.5,820.47 800.0,815.54 800.5,810.40 801.0,805.07 801.5,799.53 802.0,793.81 802.5,787.90 803.0,781.81 803.5,775.54 804.0,769.09 804.5,762.48 805.0,755.71 805.5,748.78 806.0,741.70 806.5,734.47 807.0,727.11 807.5,719.61 808.0,711.98 808.5,704.23 809.0,696.37 809.5,688.39 810.0,680.32 810.5,672.14 811.0,663.88 811.5,655.53 812.0,647.11 812.5,638.61 813.0,630.05 813.5,621.44 814.0,612.77 814.5,604.06 815.0,595.32 815.5,586.55 816.0,577.75 816.5,568.94 817.0,560.12 817.5,551.30 818.0,542.49 818.5,533.69 819.0,524.91 819.5,516.16 820.0,507.44 820.5,498.76 821.0,490.13 821.5,481.55 822.0,473.04 822.5,464.59 823.0,456.22 823.5,447.93 824.0,439.73 824.5,431.62 825.0,423.61 825.5,415.71 826.0,407.93 826.5,400.27 827.0,392.73 827.5,385.32 828.0,378.05 828.5,370.93 829.0,363.95 829.5,357.13 830.0,350.47 830.5,343.98 831.0,337.66 831.5,331.51 832.0,325.54 832.5,319.76 833.0,314.17 833.5,308.78 834.0,303.58 834.5,298.59 835.0,293.80 835.5,289.22 836.0,284.86 836.5,280.72 837.0,276.79 837.5,273.10 838.0,269.63 838.5,266.38 839.0,263.38 839.5,260.60 840.0,258.07 840.5,255.77 841.0,253.71 841.5,251.90 842.0,250.33 842.5,249.01 843.0,247.93 843.5,247.10 844.0,246.52 844.5,246.19 845.0,246.10 845.5,246.27 846.0,246.68 846.5,247.34 847.0,248.25 847.5,249.41 848.0,250.81 848.5,252.46 849.0,254.35 849.5,256.48 850.0,258.85 850.5,261.46 851.0,264.31 851.5,267.40 852.0,270.71 852.5,274.25 853.0,278.03 853.5,282.02 854.0,286.23 854.5,290.66 855.0,295.31 855.5,300.16 856.0,305.22 856.5,310.48 857.0,315.94 857.5,321.59 858.0,327.43 858.5,333.46 859.0,339.66 859.5,346.04 860.0,352.59 860.5,359.30 861.0,366.17 861.5,373.19 862.0,380.36 862.5,387.68 863.0,395.13 863.5,402.70 864.0,410.41 864.5,418.23 865.0,426.16 865.5,434.20 866.0,442.34 866.5,450.57 867.0,458.89 867.5,467.28 868.0,475.75 868.5,484.29 869.0,492.88 869.5,501.53 870.0,510.22 870.5,518.95 871.0,527.72 871.5,536.50 872.0,545.31 872.5,554.13 873.0,562.95 873.5,571.76 874.0,580.57 874.5,589.36 875.0,598.12 875.5,606.85 876.0,615.55 876.5,624.20 877.0,632.80 877.5,641.34 878.0,649.81 878.5,658.21 879.0,666.53 879.5,674.77 880.0,682.91 880.5,690.96 881.0,698.90 881.5,706.73 882.0,714.44 882.5,722.02 883.0,729.48 883.5,736.80 884.0,743.98 884.5,751.01 885.0,757.89 885.5,764.62 886.0,771.17 886.5,777.56 887.0,783.78 887.5,789.81 888.0,795.66 888.5,801.33 889.0,806.80 889.5,812.07 890.0,817.14 890.5,822.01 891.0,826.66 891.5,831.11 892.0,835.33 892.5,839.34 893.0,843.13 893.5,846.68 894.0,850.01 894.5,853.11 895.0,855.97 895.5,858.60 896.0,860.99 896.5,863.13 897.0,865.04 897.5,866.70 898.0,868.12 898.5,869.29 899.0,870.21 899.5,870.89 900.0,871.31 900.5,871.49 901.0,871.42 901.5,871.11 902.0,870.54 902.5,869.72 903.0,868.66 903.5,867.35 904.0,865.80 904.5,864.00 905.0,861.96 905.5,859.68 906.0,857.16 906.5,854.40 907.0,851.40 907.5,848.18 908.0,844.72 908.5,841.03 909.0,837.12 909.5,832.99 910.0,828.65 910.5,824.08 911.0,819.31 911.5,814.33 912.0,809.14 912.5,803.76 913.0,798.18 913.5,792.41 914.0,786.45 914.5,780.32 915.0,774.00 915.5,767.52 916.0,760.87 916.5,754.06 917.0,747.09 917.5,739.98 918.0,732.72 918.5,725.32 919.0,717.79 919.5,710.13 920.0,702.36 920.5,694.46 921.0,686.46 921.5,678.36 922.0,670.17 922.5,661.88 923.0,653.52 923.5,645.07 924.0,636.56 924.5,627.99 925.0,619.36 925.5,610.69 926.0,601.97 926.5,593.22 927.0,584.44 927.5,575.64 928.0,566.83 928.5,558.01 929.0,549.19 929.5,540.38 930.0,531.58 930.5,522.81 931.0,514.06 931.5,505.35 932.0,496.68 932.5,488.06 933.0,479.50 933.5,471.00 934.0,462.57 934.5,454.22 935.0,445.95 935.5,437.77 936.0,429.69 936.5,421.71 937.0,413.84 937.5,406.08 938.0,398.44 938.5,390.94 939.0,383.56 939.5,376.33 940.0,369.24 940.5,362.30 941.0,355.52 941.5,348.90 942.0,342.45 942.5,336.17 943.0,330.06 943.5,324.14 944.0,318.40 944.5,312.86 945.0,307.51 945.5,302.36 946.0,297.42 946.5,292.68 947.0,288.16 947.5,283.85 948.0,279.76 948.5,275.89 949.0,272.24 949.5,268.83 950.0,265.64 950.5,262.69 951.0,259.97 951.5,257.49 952.0,255.25 952.5,253.26 953.0,251.50 953.5,249.99 954.0,248.73 954.5,247.71 955.0,246.94 955.5,246.42 956.0,246.14 956.5,246.12 957.0,246.34 957.5,246.82 958.0,247.54 958.5,248.51 959.0,249.72 959.5,251.18 960.0,252.89 960.5,254.84 961.0,257.03 961.5,259.46 962.0,262.13 962.5,265.03 963.0,268.17 963.5,271.54 964.0,275.14 964.5,278.96 965.0,283.01 965.5,287.28 966.0,291.76 966.5,296.45 967.0,301.36 967.5,306.46 968.0,311.77 968.5,317.28 969.0,322.98 969.5,328.86 970.0,334.93 970.5,341.18 971.0,347.60 971.5,354.18 972.0,360.93 972.5,367.84 973.0,374.90 973.5,382.11 974.0,389.45 974.5,396.93 975.0,404.54 975.5,412.27 976.0,420.12 976.5,428.08 977.0,436.15 977.5,444.31 978.0,452.56 978.5,460.90 979.0,469.31 979.5,477.80 980.0,486.35 980.5,494.95 981.0,503.61 981.5,512.31 982.0,521.05 982.5,529.82 983.0,538.62 983.5,547.42 984.0,556.24 984.5,565.06 985.0,573.88 985.5,582.68 986.0,591.46 986.5,600.22 987.0,608.94 987.5,617.63 988.0,626.27 988.5,634.85 989.0,643.38 989.5,651.83 990.0,660.21 990.5,668.52 991.0,676.73 991.5,684.85 992.0,692.87 992.5,700.79 993.0,708.59 993.5,716.27 994.0,723.83 994.5,731.25 995.0,738.54 995.5,745.68 996.0,752.68 996.5,759.52 997.0,766.20 997.5,772.72 998.0,779.07 998.5,785.24 999.0,791.23 999.5,797.04 1000.0,802.66 1000.5,808.08 1001.0,813.31 1001.5,818.33 1002.0,823.14 1002.5,827.75 1003.0,832.14 1003.5,836.32 1004.0,840.27 1004.5,844.00 1005.0,847.50 1005.5,850.78 1006.0,853.82 1006.5,856.62 1007.0,859.19 1007.5,861.52 1008.0,863.61 1008.5,865.46 1009.0,867.06 1009.5,868.42 1010.0,869.53 1010.5,870.40 1011.0,871.01 1011.5,871.38 1012.0,871.50 1012.5,871.37 1013.0,870.99 1013.5,870.37 1014.0,869.49 1014.5,868.37 1015.0,867.00 1015.5,865.39 1016.0,863.53 1016.5,861.43 1017.0,859.09 1017.5,856.52 1018.0,853.70 1018.5,850.65 1019.0,847.37 1019.5,843.85 1020.0,840.12 1020.5,836.15 1021.0,831.97 1021.5,827.57 1022.0,822.96 1022.5,818.13 1023.0,813.10 1023.5,807.87 1024.0,802.44 1024.5,796.81 1025.0,791.00 1025.5,785.00 1026.0,778.82 1026.5,772.46 1027.0,765.94 1027.5,759.25 1028.0,752.40 1028.5,745.40 1029.0,738.25 1029.5,730.96 1030.0,723.53 1030.5,715.96 1031.0,708.28 1031.5,700.47 1032.0,692.55 1032.5,684.53 1033.0,676.40 1033.5,668.19 1034.0,659.88 1034.5,651.50 1035.0,643.04 1035.5,634.51 1036.0,625.92 1036.5,617.28 1037.0,608.60 1037.5,599.87 1038.0,591.11 1038.5,582.33 1039.0,573.52 1039.5,564.71 1040.0,555.89 1040.5,547.07 1041.0,538.26 1041.5,529.47 1042.0,520.70 1042.5,511.97 1043.0,503.27 1043.5,494.61 1044.0,486.00 1044.5,477.46 1045.0,468.97 1045.5,460.56 1046.0,452.23 1046.5,443.98 1047.0,435.82 1047.5,427.76 1048.0,419.81 1048.5,411.96 1049.0,404.24 1049.5,396.63 1050.0,389.16 1050.5,381.81 1051.0,374.61 1051.5,367.56 1052.0,360.66 1052.5,353.92 1053.0,347.34 1053.5,340.92 1054.0,334.68 1054.5,328.62 1055.0,322.75 1055.5,317.06 1056.0,311.56 1056.5,306.26 1057.0,301.16 1057.5,296.26 1058.0,291.58 1058.5,287.10 1059.0,282.84 1059.5,278.81 1060.0,274.99 1060.5,271.40 1061.0,268.04 1061.5,264.91 1062.0,262.02 1062.5,259.36 1063.0,256.93 1063.5,254.75 1064.0,252.81 1064.5,251.12 1065.0,249.67 1065.5,248.46 1066.0,247.50 1066.5,246.79 1067.0,246.33 1067.5,246.12 1068.0,246.15 1068.5,246.43 1069.0,246.97 1069.5,247.75 1070.0,248.77 1070.5,250.05 1071.0,251.57 1071.5,253.33 1072.0,255.34 1072.5,257.59 1073.0,260.08 1073.5,262.80 1074.0,265.76 1074.5,268.96 1075.0,272.38 1075.5,276.04 1076.0,279.91 1076.5,284.01 1077.0,288.33 1077.5,292.87 1078.0,297.61 1078.5,302.56 1079.0,307.72 1079.5,313.08 1080.0,318.63 1080.5,324.37 1081.0,330.30 1081.5,336.41 1082.0,342.70 1082.5,349.16 1083.0,355.79 1083.5,362.58 1084.0,369.52 1084.5,376.62 1085.0,383.86 1085.5,391.24 1086.0,398.75 1086.5,406.39 1087.0,414.15 1087.5,422.02 1088.0,430.01 1088.5,438.10 1089.0,446.28 1089.5,454.55 1090.0,462.91 1090.5,471.34 1091.0,479.84 1091.5,488.41 1092.0,497.03 1092.5,505.70 1093.0,514.41 1093.5,523.16 1094.0,531.93 1094.5,540.73 1095.0,549.54 1095.5,558.36 1096.0,567.18 1096.5,575.99 1097.0,584.79 1097.5,593.57 1098.0,602.32 1098.5,611.03 1099.0,619.71 1099.5,628.33 1100.0,636.90 1100.5,645.41 1101.0,653.85 1101.5,662.22 1102.0,670.50 1102.5,678.69 1103.0,686.79 1103.5,694.78 1104.0,702.67 1104.5,710.44 1105.0,718.09 1105.5,725.62 1106.0,733.01 1106.5,740.27 1107.0,747.38 1107.5,754.34 1108.0,761.14 1108.5,767.78 1109.0,774.26 1109.5,780.57 1110.0,786.70 1110.5,792.64 1111.0,798.41 1111.5,803.98 1112.0,809.35 1112.5,814.53 1113.0,819.50 1113.5,824.27 1114.0,828.82 1114.5,833.16 1115.0,837.29 1115.5,841.19 1116.0,844.86 1116.5,848.31 1117.0,851.53 1117.5,854.51 1118.0,857.26 1118.5,859.77 1119.0,862.05 1119.5,864.08 1120.0,865.87 1120.5,867.41 1121.0,868.71 1121.5,869.76 1122.0,870.57 1122.5,871.12 1123.0,871.43 1123.5,871.49 1124.0,871.30 1124.5,870.86 1125.0,870.18 1125.5,869.25 1126.0,868.06 1126.5,866.64 1127.0,864.97 1127.5,863.05 1128.0,860.89 1128.5,858.50 1129.0,855.86 1129.5,852.99 1130.0,849.88 1130.5,846.54 1131.0,842.98 1131.5,839.19 1132.0,835.17 1132.5,830.93 1133.0,826.48 1133.5,821.82 1134.0,816.94 1134.5,811.86 1135.0,806.58 1135.5,801.10 1136.0,795.43 1136.5,789.57 1137.0,783.53 1137.5,777.31 1138.0,770.91 1138.5,764.35 1139.0,757.62 1139.5,750.74 1140.0,743.70 1140.5,736.51 1141.0,729.19 1141.5,721.72 1142.0,714.13 1142.5,706.41 1143.0,698.58 1143.5,690.64 1144.0,682.59 1144.5,674.44 1145.0,666.20 1145.5,657.88 1146.0,649.47 1146.5,641.00 1147.0,632.45 1147.5,623.85 1148.0,615.20 1148.5,606.51 1149.0,597.77 1149.5,589.01 1150.0,580.22 1150.5,571.41 1151.0,562.59 1151.5,553.77 1152.0,544.96 1152.5,536.15 1153.0,527.37 1153.5,518.60 1154.0,509.87 1154.5,501.18 1155.0,492.54 1155.5,483.95 1156.0,475.41 1156.5,466.95 1157.0,458.55 1157.5,450.24 1158.0,442.01 1158.5,433.88 1159.0,425.84 1159.5,417.91 1160.0,410.10 1160.5,402.40 1161.0,394.82 1161.5,387.38 1162.0,380.07 1162.5,372.91 1163.0,365.89 1163.5,359.03 1164.0,352.32 1164.5,345.78 1165.0,339.41 1165.5,333.21 1166.0,327.20 1166.5,321.36 1167.0,315.72 1167.5,310.27 1168.0,305.01 1168.5,299.96 1169.0,295.12 1169.5,290.48 1170.0,286.06 1170.5,281.85 1171.0,277.87 1171.5,274.11 1172.0,270.57 1172.5,267.27 1173.0,264.19 1173.5,261.36 1174.0,258.75 1174.5,256.39 1175.0,254.27 1175.5,252.38 1176.0,250.75 1176.5,249.36 1177.0,248.21 1177.5,247.31 1178.0,246.66 1178.5,246.26 1179.0,246.10 1179.5,246.20 1180.0,246.54 1180.5,247.13 1181.0,247.97 1181.5,249.06 1182.0,250.39 1182.5,251.97 1183.0,253.79 1183.5,255.86 1184.0,258.16 1184.5,260.71 1185.0,263.49 1185.5,266.51 1186.0,269.76 1186.5,273.24 1187.0,276.95 1187.5,280.88 1188.0,285.03 1188.5,289.40 1189.0,293.99 1189.5,298.78 1190.0,303.78 1190.5,308.99 1191.0,314.39 1191.5,319.99 1192.0,325.78 1192.5,331.75 1193.0,337.91 1193.5,344.24 1194.0,350.74 1194.5,357.40 1195.0,364.23 1195.5,371.21 1196.0,378.34 1196.5,385.61 1197.0,393.03 1197.5,400.57 1198.0,408.24 1198.5,416.03 1199.0,423.93 1199.5,431.94 1200.0,440.05 1200.5,448.26 1201.0,456.55 1201.5,464.93 1202.0,473.38 1202.5,481.89 1203.0,490.47 1203.5,499.10 1204.0,507.78 1204.5,516.51 1205.0,525.26 1205.5,534.04 1206.0,542.84 1206.5,551.66 1207.0,560.48 1207.5,569.29 1208.0,578.10 1208.5,586.90 1209.0,595.67 1209.5,604.41 1210.0,613.12 1210.5,621.78 1211.0,630.40 1211.5,638.95 1212.0,647.44 1212.5,655.87 1213.0,664.21 1213.5,672.47 1214.0,680.64 1214.5,688.71 1215.0,696.68 1215.5,704.55 1216.0,712.29 1216.5,719.91 1217.0,727.41 1217.5,734.77 1218.0,741.99 1218.5,749.06 1219.0,755.98 1219.5,762.75 1220.0,769.35 1220.5,775.79 1221.0,782.05 1221.5,788.14 1222.0,794.04 1222.5,799.76 1223.0,805.28 1223.5,810.61 1224.0,815.74 1224.5,820.67 1225.0,825.38 1225.5,829.89 1226.0,834.17 1226.5,838.24 1227.0,842.09 1227.5,845.71 1228.0,849.10 1228.5,852.26 1229.0,855.19 1229.5,857.89 1230.0,860.34 1230.5,862.56 1231.0,864.53 1231.5,866.26 1232.0,867.74 1232.5,868.98 1233.0,869.98 1233.5,870.72 1234.0,871.22 1234.5,871.47 1235.0,871.47 1235.5,871.22 1236.0,870.72 1236.5,869.98 1237.0,868.98 1237.5,867.74 1238.0,866.26 1238.5,864.53 1239.0,862.56 1239.5,860.34 1240.0,857.89 1240.5,855.19 1241.0,852.26 1241.5,849.10 1242.0,845.71 1242.5,842.09 1243.0,838.24 1243.5,834.17 1244.0,829.89 1244.5,825.38 1245.0,820.67 1245.5,815.74 1246.0,810.61 1246.5,805.28 1247.0,799.76 1247.5,794.04 1248.0,788.14 1248.5,782.05 1249.0,775.79 1249.5,769.35 1250.0,762.75 1250.5,755.98 1251.0,749.06 1251.5,741.99 1252.0,734.77 1252.5,727.41 1253.0,719.91 1253.5,712.29 1254.0,704.55 1254.5,696.68 1255.0,688.71 1255.5,680.64 1256.0,672.47 1256.5,664.21 1257.0,655.87 1257.5,647.44 1258.0,638.95 1258.5,630.40 1259.0,621.78 1259.5,613.12 1260.0,604.41 1260.5,595.67 1261.0,586.90 1261.5,578.10 1262.0,569.29 1262.5,560.48 1263.0,551.66 1263.5,542.84 1264.0,534.04 1264.5,525.26 1265.0,516.51 1265.5,507.78 1266.0,499.10 1266.5,490.47 1267.0,481.89 1267.5,473.38 1268.0,464.93 1268.5,456.55 1269.0,448.26 1269.5,440.05 1270.0,431.94 1270.5,423.93 1271.0,416.03 1271.5,408.24 1272.0,400.57 1272.5,393.03 1273.0,385.61 1273.5,378.34 1274.0,371.21 1274.5,364.23 1275.0,357.40 1275.5,350.74 1276.0,344.24 1276.5,337.91 1277.0,331.75 1277.5,325.78 1278.0,319.99 1278.5,314.39 1279.0,308.99 1279.5,303.78 1280.0,298.78 1280.5,293.99 1281.0,289.40 1281.5,285.03 1282.0,280.88 1282.5,276.95 1283.0,273.24 1283.5,269.76 1284.0,266.51 1284.5,263.49 1285.0,260.71 1285.5,258.16 1286.0,255.86 1286.5,253.79 1287.0,251.97 1287.5,250.39 1288.0,249.06 1288.5,247.97 1289.0,247.13 1289.5,246.54 1290.0,246.20 1290.5,246.10 1291.0,246.26 1291.5,246.66 1292.0,247.31 1292.5,248.21 1293.0,249.36 1293.5,250.75 1294.0,252.38 1294.5,254.27 1295.0,256.39 1295.5,258.75 1296.0,261.36 1296.5,264.19 1297.0,267.27 1297.5,270.57 1298.0,274.11 1298.5,277.87 1299.0,281.85 1299.5,286.06 1300.0,290.48 1300.5,295.12 1301.0,299.96 1301.5,305.01 1302.0,310.27 1302.5,315.72 1303.0,321.36 1303.5,327.20 1304.0,333.21 1304.5,339.41 1305.0,345.78 1305.5,352.32 1306.0,359.03 1306.5,365.89 1307.0,372.91 1307.5,380.07 1308.0,387.38 1308.5,394.82 1309.0,402.40 1309.5,410.10 1310.0,417.91 1310.5,425.84 1311.0,433.88 1311.5,442.01 1312.0,450.24 1312.5,458.55 1313.0,466.95 1313.5,475.41 1314.0,483.95 1314.5,492.54 1315.0,501.18 1315.5,509.87 1316.0,518.60 1316.5,527.37 1317.0,536.15 1317.5,544.96 1318.0,553.77 1318.5,562.59 1319.0,571.41 1319.5,580.22 1320.0,589.01 1320.5,597.77 1321.0,606.51 1321.5,615.20 1322.0,623.85 1322.5,632.45 1323.0,641.00 1323.5,649.47 1324.0,657.88 1324.5,666.20 1325.0,674.44 1325.5,682.59 1326.0,690.64 1326.5,698.58 1327.0,706.41 1327.5,714.13 1328.0,721.72 1328.5,729.19 1329.0,736.51 1329.5,743.70 1330.0,750.74 1330.5,757.62 1331.0,764.35 1331.5,770.91 1332.0,777.31 1332.5,783.53 1333.0,789.57 1333.5,795.43 1334.0,801.10 1334.5,806.58 1335.0,811.86 1335.5,816.94 1336.0,821.82 1336.5,826.48 1337.0,830.93 1337.5,835.17 1338.0,839.19 1338.5,842.98 1339.0,846.54 1339.5,849.88 1340.0,852.99 1340.5,855.86 1341.0,858.50 1341.5,860.89 1342.0,863.05 1342.5,864.97 1343.0,866.64 1343.5,868.06 1344.0,869.25 1344.5,870.18 1345.0,870.86 1345.5,871.30 1346.0,871.49 1346.5,871.43 1347.0,871.12 1347.5,870.57 1348.0,869.76 1348.5,868.71 1349.0,867.41 1349.5,865.87 1350.0,864.08 1350.5,862.05 1351.0,859.77 1351.5,857.26 1352.0,854.51 1352.5,851.53 1353.0,848.31 1353.5,844.86 1354.0,841.19 1354.5,837.29 1355.0,833.16 1355.5,828.82 1356.0,824.27 1356.5,819.50 1357.0,814.53 1357.5,809.35 1358.0,803.98 1358.5,798.41 1359.0,792.64 1359.5,786.70 1360.0,780.57 1360.5,774.26 1361.0,767.78 1361.5,761.14 1362.0,754.34 1362.5,747.38 1363.0,740.27 1363.5,733.01 1364.0,725.62 1364.5,718.09 1365.0,710.44 1365.5,702.67 1366.0,694.78 1366.5,686.79 1367.0,678.69 1367.5,670.50 1368.0,662.22 1368.5,653.85 1369.0,645.41 1369.5,636.90 1370.0,628.33 1370.5,619.71 1371.0,611.03 1371.5,602.32 1372.0,593.57 1372.5,584.79 1373.0,575.99 1373.5,567.18 1374.0,558.36 1374.5,549.54 1375.0,540.73 1375.5,531.93 1376.0,523.16 1376.5,514.41 1377.0,505.70 1377.5,497.03 1378.0,488.41 1378.5,479.84 1379.0,471.34 1379.5,462.91 1380.0,454.55 1380.5,446.28 1381.0,438.10 1381.5,430.01 1382.0,422.02 1382.5,414.15 1383.0,406.39 1383.5,398.75 1384.0,391.24 1384.5,383.86 1385.0,376.62 1385.5,369.52 1386.0,362.58 1386.5,355.79 1387.0,349.16 1387.5,342.70 1388.0,336.41 1388.5,330.30 1389.0,324.37 1389.5,318.63 1390.0,313.08 1390.5,307.72 1391.0,302.56 1391.5,297.61 1392.0,292.87 1392.5,288.33 1393.0,284.01 1393.5,279.91 1394.0,276.04 1394.5,272.38 1395.0,268.96 1395.5,265.76 1396.0,262.80 1396.5,260.08 1397.0,257.59 1397.5,255.34 1398.0,253.33 1398.5,251.57 1399.0,250.05 1399.5,248.77 1400.0,247.75 1400.5,246.97 1401.0,246.43 1401.5,246.15 1402.0,246.12 1402.5,246.33 1403.0,246.79 1403.5,247.50 1404.0,248.46 1404.5,249.67 1405.0,251.12 1405.5,252.81 1406.0,254.75 1406.5,256.93 1407.0,259.36 1407.5,262.02 1408.0,264.91 1408.5,268.04 1409.0,271.40 1409.5,274.99 1410.0,278.81 1410.5,282.84 1411.0,287.10 1411.5,291.58 1412.0,296.26 1412.5,301.16 1413.0,306.26 1413.5,311.56 1414.0,317.06 1414.5,322.75 1415.0,328.62 1415.5,334.68 1416.0,340.92 1416.5,347.34 1417.0,353.92 1417.5,360.66 1418.0,367.56 1418.5,374.61 1419.0,381.81 1419.5,389.16 1420.0,396.63 1420.5,404.24 1421.0,411.96 1421.5,419.81 1422.0,427.76 1422.5,435.82 1423.0,443.98 1423.5,452.23 1424.0,460.56 1424.5,468.97 1425.0,477.46 1425.5,486.00 1426.0,494.61 1426.5,503.27 1427.0,511.97 1427.5,520.70 1428.0,529.47 1428.5,538.26 1429.0,547.07 1429.5,555.89 1430.0,564.71 1430.5,573.52 1431.0,582.33 1431.5,591.11 1432.0,599.87 1432.5,608.60 1433.0,617.28 1433.5,625.92 1434.0,634.51 1434.5,643.04 1435.0,651.50 1435.5,659.88 1436.0,668.19 1436.5,676.40 1437.0,684.53 1437.5,692.55 1438.0,700.47 1438.5,708.28 1439.0,715.96 1439.5,723.53 1440.0,730.96 1440.5,738.25 1441.0,745.40 1441.5,752.40 1442.0,759.25 1442.5,765.94 1443.0,772.46 1443.5,778.82 1444.0,785.00 1444.5,791.00 1445.0,796.81 1445.5,802.44 1446.0,807.87 1446.5,813.10 1447.0,818.13 1447.5,822.96 1448.0,827.57 1448.5,831.97 1449.0,836.15 1449.5,840.12 1450.0,843.85 1450.5,847.37 1451.0,850.65 1451.5,853.70 1452.0,856.52 1452.5,859.09 1453.0,861.43 1453.5,863.53 1454.0,865.39 1454.5,867.00 1455.0,868.37 1455.5,869.49 1456.0,870.37 1456.5,870.99 1457.0,871.37 1457.5,871.50 1458.0,871.38 1458.5,871.01 1459.0,870.40 1459.5,869.53 1460.0,868.42 1460.5,867.06 1461.0,865.46 1461.5,863.61 1462.0,861.52 1462.5,859.19 1463.0,856.62 1463.5,853.82 1464.0,850.78 1464.5,847.50 1465.0,844.00 1465.5,840.27 1466.0,836.32 1466.5,832.14 1467.0,827.75 1467.5,823.14 1468.0,818.33 1468.5,813.31 1469.0,808.08 1469.5,802.66 1470.0,797.04 1470.5,791.23 1471.0,785.24 1471.5,779.07 1472.0,772.72 1472.5,766.20 1473.0,759.52 1473.5,752.68 1474.0,745.68 1474.5,738.54 1475.0,731.25 1475.5,723.83 1476.0,716.27 1476.5,708.59 1477.0,700.79 1477.5,692.87 1478.0,684.85 1478.5,676.73 1479.0,668.52 1479.5,660.21 1480.0,651.83 1480.5,643.38 1481.0,634.85 1481.5,626.27 1482.0,617.63 1482.5,608.94 1483.0,600.22 1483.5,591.46 1484.0,582.68 1484.5,573.88 1485.0,565.06 1485.5,556.24 1486.0,547.42 1486.5,538.62 1487.0,529.82 1487.5,521.05 1488.0,512.31 1488.5,503.61 1489.0,494.95 1489.5,486.35 1490.0,477.80 1490.5,469.31 1491.0,460.90 1491.5,452.56 1492.0,444.31 1492.5,436.15 1493.0,428.08 1493.5,420.12 1494.0,412.27 1494.5,404.54 1495.0,396.93 1495.5,389.45 1496.0,382.11 1496.5,374.90 1497.0,367.84 1497.5,360.93 1498.0,354.18 1498.5,347.60 1499.0,341.18 1499.5,334.93 1500.0,328.86 1500.5,322.98 1501.0,317.28 1501.5,311.77 1502.0,306.46 1502.5,301.36 1503.0,296.45 1503.5,291.76 1504.0,287.28 1504.5,283.01 1505.0,278.96 1505.5,275.14 1506.0,271.54 1506.5,268.17 1507.0,265.03 1507.5,262.13 1508.0,259.46 1508.5,257.03 1509.0,254.84 1509.5,252.89 1510.0,251.18 1510.5,249.72 1511.0,248.51 1511.5,247.54 1512.0,246.82 1512.5,246.34 1513.0,246.12 1513.5,246.14 1514.0,246.42 1514.5,246.94 1515.0,247.71 1515.5,248.73 1516.0,249.99 1516.5,251.50 1517.0,253.26 1517.5,255.25 1518.0,257.49 1518.5,259.97 1519.0,262.69 1519.5,265.64 1520.0,268.83 1520.5,272.24 1521.0,275.89 1521.5,279.76 1522.0,283.85 1522.5,288.16 1523.0,292.68 1523.5,297.42 1524.0,302.36 1524.5,307.51 1525.0,312.86 1525.5,318.40 1526.0,324.14 1526.5,330.06 1527.0,336.17 1527.5,342.45 1528.0,348.90 1528.5,355.52 1529.0,362.30 1529.5,369.24 1530.0,376.33 1530.5,383.56 1531.0,390.94 1531.5,398.44 1532.0,406.08 1532.5,413.84 1533.0,421.71 1533.5,429.69 1534.0,437.77 1534.5,445.95 1535.0,454.22 1535.5,462.57 1536.0,471.00 1536.5,479.50 1537.0,488.06 1537.5,496.68 1538.0,505.35 1538.5,514.06 1539.0,522.81 1539.5,531.58 1540.0,540.38 1540.5,549.19 1541.0,558.01 1541.5,566.83 1542.0,575.64 1542.5,584.44 1543.0,593.22 1543.5,601.97 1544.0,610.69 1544.5,619.36 1545.0,627.99 1545.5,636.56 1546.0,645.07 1546.5,653.52 1547.0,661.88 1547.5,670.17 1548.0,678.36 1548.5,686.46 1549.0,694.46 1549.5,702.36 1550.0,710.13 1550.5,717.79 1551.0,725.32 1551.5,732.72 1552.0,739.98 1552.5,747.09 1553.0,754.06 1553.5,760.87 1554.0,767.52 1554.5,774.00 1555.0,780.32 1555.5,786.45 1556.0,792.41 1556.5,798.18 1557.0,803.76 1557.5,809.14 1558.0,814.33 1558.5,819.31 1559.0,824.08 1559.5,828.65 1560.0,832.99 1560.5,837.12 1561.0,841.03 1561.5,844.72 1562.0,848.18 1562.5,851.40 1563.0,854.40 1563.5,857.16 1564.0,859.68 1564.5,861.96 1565.0,864.00 1565.5,865.80 1566.0,867.35 1566.5,868.66 1567.0,869.72 1567.5,870.54 1568.0,871.11 1568.5,871.42 1569.0,871.49 1569.5,871.31 1570.0,870.89 1570.5,870.21 1571.0,869.29 1571.5,868.12 1572.0,866.70 1572.5,865.04 1573.0,863.13 1573.5,860.99 1574.0,858.60 1574.5,855.97 1575.0,853.11 1575.5,850.01 1576.0,846.68 1576.5,843.13 1577.0,839.34 1577.5,835.33 1578.0,831.11 1578.5,826.66 1579.0,822.01 1579.5,817.14 1580.0,812.07 1580.5,806.80 1581.0,801.33 1581.5,795.66 1582.0,789.81 1582.5,783.78 1583.0,777.56 1583.5,771.17 1584.0,764.62 1584.5,757.89 1585.0,751.01 1585.5,743.98 1586.0,736.80 1586.5,729.48 1587.0,722.02 1587.5,714.44 1588.0,706.73 1588.5,698.90 1589.0,690.96 1589.5,682.91 1590.0,674.77 1590.5,666.53 1591.0,658.21 1591.5,649.81 1592.0,641.34 1592.5,632.80 1593.0,624.20 1593.5,615.55 1594.0,606.85 1594.5,598.12 1595.0,589.36 1595.5,580.57 1596.0,571.76 1596.5,562.95 1597.0,554.13 1597.5,545.31 1598.0,536.50 1598.5,527.72 1599.0,518.95 1599.5,510.22 1600.0,501.53 1600.5,492.88 1601.0,484.29 1601.5,475.75 1602.0,467.28 1602.5,458.89 1603.0,450.57 1603.5,442.34 1604.0,434.20 1604.5,426.16 1605.0,418.23 1605.5,410.41 1606.0,402.70 1606.5,395.13 1607.0,387.68 1607.5,380.36 1608.0,373.19 1608.5,366.17 1609.0,359.30 1609.5,352.59 1610.0,346.04 1610.5,339.66 1611.0,333.46 1611.5,327.43 1612.0,321.59 1612.5,315.94 1613.0,310.48 1613.5,305.22 1614.0,300.16 1614.5,295.31 1615.0,290.66 1615.5,286.23 1616.0,282.02 1616.5,278.03 1617.0,274.25 1617.5,270.71 1618.0,267.40 1618.5,264.31 1619.0,261.46 1619.5,258.85 1620.0,256.48 1620.5,254.35 1621.0,252.46 1621.5,250.81 1622.0,249.41 1622.5,248.25 1623.0,247.34 1623.5,246.68 1624.0,246.27 1624.5,246.10 1625.0,246.19 1625.5,246.52 1626.0,247.10 1626.5,247.93 1627.0,249.01 1627.5,250.33 1628.0,251.90 1628.5,253.71 1629.0,255.77 1629.5,258.07 1630.0,260.60 1630.5,263.38 1631.0,266.38 1631.5,269.63 1632.0,273.10 1632.5,276.79 1633.0,280.72 1633.5,284.86 1634.0,289.22 1634.5,293.80 1635.0,298.59 1635.5,303.58 1636.0,308.78 1636.5,314.17 1637.0,319.76 1637.5,325.54 1638.0,331.51 1638.5,337.66 1639.0,343.98 1639.5,350.47 1640.0,357.13 1640.5,363.95 1641.0,370.93 1641.5,378.05 1642.0,385.32 1642.5,392.73 1643.0,400.27 1643.5,407.93 1644.0,415.71 1644.5,423.61 1645.0,431.62 1645.5,439.73 1646.0,447.93 1646.5,456.22 1647.0,464.59 1647.5,473.04 1648.0,481.55 1648.5,490.13 1649.0,498.76 1649.5,507.44 1650.0,516.16 1650.5,524.91 1651.0,533.69 1651.5,542.49 1652.0,551.30 1652.5,560.12 1653.0,568.94 1653.5,577.75 1654.0,586.55 1654.5,595.32 1655.0,604.06 1655.5,612.77 1656.0,621.44 1656.5,630.05 1657.0,638.61 1657.5,647.11 1658.0,655.53 1658.5,663.88 1659.0,672.14 1659.5,680.32 1660.0,688.39 1660.5,696.37 1661.0,704.23 1661.5,711.98 1662.0,719.61 1662.5,727.11 1663.0,734.47 1663.5,741.70 1664.0,748.78 1664.5,755.71 1665.0,762.48 1665.5,769.09 1666.0,775.54 1666.5,781.81 1667.0,787.90 1667.5,793.81 1668.0,799.53 1668.5,805.07 1669.0,810.40 1669.5,815.54 1670.0,820.47 1670.5,825.20 1671.0,829.71 1671.5,834.01 1672.0,838.08 1672.5,841.94 1673.0,845.57 1673.5,848.97 1674.0,852.14 1674.5,855.08 1675.0,857.78 1675.5,860.25 1676.0,862.47 1676.5,864.45 1677.0,866.19 1677.5,867.69 1678.0,868.94 1678.5,869.94 1679.0,870.70 1679.5,871.21 1680.0,871.46 1680.5,871.47 1681.0,871.23 1681.5,870.75 1682.0,870.01 1682.5,869.03 1683.0,867.80 1683.5,866.32 1684.0,864.60 1684.5,862.64 1685.0,860.43 1685.5,857.99 1686.0,855.31 1686.5,852.39 1687.0,849.23 1687.5,845.85 1688.0,842.24 1688.5,838.40 1689.0,834.34 1689.5,830.06 1690.0,825.57 1690.5,820.86 1691.0,815.94 1691.5,810.82 1692.0,805.50 1692.5,799.98 1693.0,794.28 1693.5,788.38 1694.0,782.30 1694.5,776.04 1695.0,769.61 1695.5,763.02 1696.0,756.26 1696.5,749.34 1697.0,742.27 1697.5,735.06 1698.0,727.70 1698.5,720.21 1699.0,712.60 1699.5,704.86 1700.0,697.00 1700.5,689.04 1701.0,680.97 1701.5,672.80 1702.0,664.54 1702.5,656.20 1703.0,647.78 1703.5,639.29 1704.0,630.74 1704.5,622.13 1705.0,613.47 1705.5,604.76 1706.0,596.02 1706.5,587.25 1707.0,578.46 1707.5,569.65 1708.0,560.83 1708.5,552.01 1709.0,543.20 1709.5,534.39 1710.0,525.61 1710.5,516.86 1711.0,508.13 1711.5,499.45 1712.0,490.82 1712.5,482.23 1713.0,473.71 1713.5,465.26 1714.0,456.88 1714.5,448.59 1715.0,440.38 1715.5,432.26 1716.0,424.25 1716.5,416.34 1717.0,408.55 1717.5,400.87 1718.0,393.33 1718.5,385.91 1719.0,378.63 1719.5,371.49 1720.0,364.51 1720.5,357.67 1721.0,351.00 1721.5,344.49 1722.0,338.16 1722.5,331.99 1723.0,326.01 1723.5,320.22 1724.0,314.61 1724.5,309.20 1725.0,303.99 1725.5,298.98 1726.0,294.17 1726.5,289.58 1727.0,285.20 1727.5,281.04 1728.0,277.10 1728.5,273.38 1729.0,269.89 1729.5,266.64 1730.0,263.61 1730.5,260.82 1731.0,258.26 1731.5,255.95 1732.0,253.87 1732.5,252.04 1733.0,250.45 1733.5,249.11 1734.0,248.01 1734.5,247.16 1735.0,246.56 1735.5,246.21 1736.0,246.10 1736.5,246.25 1737.0,246.64 1737.5,247.28 1738.0,248.17 1738.5,249.30 1739.0,250.69 1739.5,252.31 1740.0,254.19 1740.5,256.30 1741.0,258.65 1741.5,261.25 1742.0,264.08 1742.5,267.14 1743.0,270.44 1743.5,273.96 1744.0,277.72 1744.5,281.69 1745.0,285.89 1745.5,290.30 1746.0,294.93 1746.5,299.77 1747.0,304.81 1747.5,310.05 1748.0,315.50 1748.5,321.13 1749.0,326.96 1749.5,332.97 1750.0,339.16 1750.5,345.52 1751.0,352.06 1751.5,358.76 1752.0,365.61 1752.5,372.62 1753.0,379.78 1753.5,387.09 1754.0,394.52 1754.5,402.09 1755.0,409.79 1755.5,417.60 1756.0,425.52 1756.5,433.56 1757.0,441.69 1757.5,449.91 1758.0,458.22 1758.5,466.61 1759.0,475.07 1759.5,483.60 1760.0,492.19 1760.5,500.84 1761.0,509.53 1761.5,518.25 1762.0,527.01 1762.5,535.80 1763.0,544.60 1763.5,553.42 1764.0,562.24 1764.5,571.06 1765.0,579.86 1765.5,588.65 1766.0,597.42 1766.5,606.16 1767.0,614.86 1767.5,623.51 1768.0,632.11 1768.5,640.66 1769.0,649.13 1769.5,657.54 1770.0,665.87 1770.5,674.11 1771.0,682.26 1771.5,690.32 1772.0,698.27 1772.5,706.10 1773.0,713.82 1773.5,721.42 1774.0,728.89 1774.5,736.22 1775.0,743.41 1775.5,750.46 1776.0,757.35 1776.5,764.08 1777.0,770.65 1777.5,777.06 1778.0,783.29 1778.5,789.34 1779.0,795.20 1779.5,800.88 1780.0,806.37 1780.5,811.66 1781.0,816.74 1781.5,821.63 1782.0,826.30 1782.5,830.76 1783.0,835.00 1783.5,839.03 1784.0,842.83 1784.5,846.41 1785.0,849.75 1785.5,852.87 1786.0,855.75 1786.5,858.40 1787.0,860.80 1787.5,862.97 1788.0,864.89 1788.5,866.58 1789.0,868.01 1789.5,869.20 1790.0,870.15 1790.5,870.84 1791.0,871.29 1791.5,871.49 1792.0,871.44 1792.5,871.14 1793.0,870.59 1793.5,869.80 1794.0,868.76 1794.5,867.47 1795.0,865.93 1795.5,864.15 1796.0,862.13 1796.5,859.87 1797.0,857.37 1797.5,854.63 1798.0,851.65 1798.5,848.44 1799.0,845.00 1799.5,841.34 1800.0,837.45 1800.5,833.33 1801.0,829.00 1801.5,824.46 1802.0,819.70 1802.5,814.73 1803.0,809.56 1803.5,804.20 1804.0,798.63 1804.5,792.88 1805.0,786.94 1805.5,780.81 1806.0,774.52 1806.5,768.05 1807.0,761.41 1807.5,754.61 1808.0,747.66 1808.5,740.55 1809.0,733.31 1809.5,725.92 1810.0,718.40 1810.5,710.75 1811.0,702.98 1811.5,695.10 1812.0,687.11 1812.5,679.01 1813.0,670.83 1813.5,662.55 1814.0,654.19 1814.5,645.75 1815.0,637.25 1815.5,628.68 1816.0,620.05 1816.5,611.38 1817.0,602.67 1817.5,593.92 1818.0,585.14 1818.5,576.34 1819.0,567.53 1819.5,558.71 1820.0,549.89 1820.5,541.08 1821.0,532.28 1821.5,523.51 1822.0,514.76 1822.5,506.05 1823.0,497.37 1823.5,488.75 1824.0,480.18 1824.5,471.68 1825.0,463.24 1825.5,454.89 1826.0,446.61 1826.5,438.42 1827.0,430.33 1827.5,422.34 1828.0,414.46 1828.5,406.70 1829.0,399.05 1829.5,391.53 1830.0,384.15 1830.5,376.90 1831.0,369.80 1831.5,362.85 1832.0,356.06 1832.5,349.42 1833.0,342.96 1833.5,336.66 1834.0,330.54 1834.5,324.61 1835.0,318.86 1835.5,313.30 1836.0,307.93 1836.5,302.77 1837.0,297.81 1837.5,293.05 1838.0,288.51 1838.5,284.18 1839.0,280.07 1839.5,276.19 1840.0,272.53 1840.5,269.09 1841.0,265.89 1841.5,262.92 1842.0,260.18 1842.5,257.68 1843.0,255.43 1843.5,253.41 1844.0,251.63 1844.5,250.10 1845.0,248.82 1845.5,247.78 1846.0,246.99 1846.5,246.45 1847.0,246.16 1847.5,246.11 1848.0,246.32 1848.5,246.77 1849.0,247.47 1849.5,248.42 1850.0,249.61 1850.5,251.06 1851.0,252.74 1851.5,254.67 1852.0,256.84 1852.5,259.25 1853.0,261.90 1853.5,264.79 1854.0,267.91 1854.5,271.26 1855.0,274.84 1855.5,278.65 1856.0,282.68 1856.5,286.93 1857.0,291.39 1857.5,296.07 1858.0,300.96 1858.5,306.05 1859.0,311.34 1859.5,316.83 1860.0,322.51 1860.5,328.38 1861.0,334.44 1861.5,340.67 1862.0,347.08 1862.5,353.65 1863.0,360.39 1863.5,367.28 1864.0,374.33 1864.5,381.52 1865.0,388.86 1865.5,396.33 1866.0,403.93 1866.5,411.65 1867.0,419.49 1867.5,427.44 1868.0,435.50 1868.5,443.65 1869.0,451.90 1869.5,460.23 1870.0,468.63 1870.5,477.11 1871.0,485.66 1871.5,494.26 1872.0,502.92 1872.5,511.62 1873.0,520.35 1873.5,529.12 1874.0,537.91 1874.5,546.72 1875.0,555.54 1875.5,564.36 1876.0,573.17 1876.5,581.98 1877.0,590.76 1877.5,599.52 1878.0,608.25 1878.5,616.94 1879.0,625.58 1879.5,634.17 1880.0,642.70 1880.5,651.16 1881.0,659.55 1881.5,667.86 1882.0,676.08 1882.5,684.21 1883.0,692.23 1883.5,700.16 1884.0,707.97 1884.5,715.66 1885.0,723.23 1885.5,730.66 1886.0,737.96 1886.5,745.12 1887.0,752.13 1887.5,758.98 1888.0,765.68 1888.5,772.21 1889.0,778.57 1889.5,784.75 1890.0,790.76 1890.5,796.58 1891.0,802.21 1891.5,807.65 1892.0,812.89 1892.5,817.93 1893.0,822.77 1893.5,827.39 1894.0,831.80 1894.5,835.99 1895.0,839.96 1895.5,843.71 1896.0,847.23 1896.5,850.52 1897.0,853.58 1897.5,856.41 1898.0,859.00 1898.5,861.35 1899.0,863.45 1899.5,865.32 1900.0,866.94 1900.5,868.32 1901.0,869.45 1901.5,870.34 1902.0,870.97 1902.5,871.36 1903.0,871.50 1903.5,871.39 1904.0,871.03 1904.5,870.43 1905.0,869.57 1905.5,868.47 1906.0,867.12 1906.5,865.53 1907.0,863.69 1907.5,861.61 1908.0,859.29 1908.5,856.73 1909.0,853.93 1909.5,850.90 1910.0,847.64 1910.5,844.14 1911.0,840.42 1911.5,836.48 1912.0,832.31 1912.5,827.93 1913.0,823.33 1913.5,818.52 1914.0,813.51 1914.5,808.29 1915.0,802.88 1915.5,797.27 1916.0,791.47 1916.5,785.48 1917.0,779.32 1917.5,772.98 1918.0,766.47 1918.5,759.79 1919.0,752.96 1919.5,745.97 1920.0,738.83 1920.5,731.54 1921.0,724.12 1921.5,716.57 1922.0,708.90 1922.5,701.10 1923.0,693.19 1923.5,685.17 1924.0,677.06 1924.5,668.85 1925.0,660.55 1925.5,652.17 1926.0,643.72 1926.5,635.19 1927.0,626.61 1927.5,617.98 1928.0,609.29 1928.5,600.57 1929.0,591.81 1929.5,583.03 1930.0,574.23 1930.5,565.41 1931.0,556.60 1931.5,547.78 1932.0,538.97 1932.5,530.18 1933.0,521.40 1933.5,512.66 1934.0,503.96 1934.5,495.30 1935.0,486.69 1935.5,478.14 1936.0,469.65 1936.5,461.23 1937.0,452.89 1937.5,444.64 1938.0,436.47 1938.5,428.40 1939.0,420.44 1939.5,412.59 1940.0,404.85 1940.5,397.23 1941.0,389.75 1941.5,382.40 1942.0,375.19 1942.5,368.12 1943.0,361.21 1943.5,354.45 1944.0,347.86 1944.5,341.43 1945.0,335.18 1945.5,329.10 1946.0,323.21 1946.5,317.50 1947.0,311.99 1947.5,306.67 1948.0,301.56 1948.5,296.65 1949.0,291.94 1949.5,287.45 1950.0,283.18 1950.5,279.12 1951.0,275.29 1951.5,271.68 1952.0,268.30 1952.5,265.15 1953.0,262.24 1953.5,259.56 1954.0,257.12 1954.5,254.92 1955.0,252.96 1955.5,251.24 1956.0,249.77 1956.5,248.55 1957.0,247.57 1957.5,246.84 1958.0,246.36 1958.5,246.12 1959.0,246.14 1959.5,246.40 1960.0,246.91 1960.5,247.68 1961.0,248.68 1961.5,249.94 1962.0,251.44 1962.5,253.18 1963.0,255.17 1963.5,257.40 1964.0,259.87 1964.5,262.58 1965.0,265.52 1965.5,268.69 1966.0,272.10 1966.5,275.74 1967.0,279.60 1967.5,283.68 1968.0,287.98 1968.5,292.50 1969.0,297.22 1969.5,302.16 1970.0,307.30 1970.5,312.64 1971.0,318.18 1971.5,323.91 1972.0,329.82 1972.5,335.92 1973.0,342.19 1973.5,348.64 1974.0,355.25 1974.5,362.03 1975.0,368.96 1975.5,376.04 1976.0,383.27 1976.5,390.64 1977.0,398.14 1977.5,405.77 1978.0,413.52 1978.5,421.39 1979.0,429.37 1979.5,437.45 1980.0,445.62 1980.5,453.89 1981.0,462.24 1981.5,470.66 1982.0,479.16 1982.5,487.72 1983.0,496.34 1983.5,505.00 1984.0,513.71 1984.5,522.46 1985.0,531.23 1985.5,540.02 1986.0,548.84 1986.5,557.65 1987.0,566.47 1987.5,575.29 1988.0,584.09 1988.5,592.87 1989.0,601.62 1989.5,610.34 1990.0,619.02 1990.5,627.65 1991.0,636.22 1991.5,644.73 1992.0,653.18 1992.5,661.55 1993.0,669.84 1993.5,678.04 1994.0,686.14 1994.5,694.15 1995.0,702.04 1995.5,709.82 1996.0,717.49 1996.5,725.02 1997.0,732.43 1997.5,739.69 1998.0,746.81 1998.5,753.78 1999.0,760.60 1999.5,767.26 2000.0,773.75 2000.5,780.07 2001.0,786.21 2001.5,792.17 2002.0,797.95 2002.5,803.54 2003.0,808.93 2003.5,814.12 2004.0,819.11 2004.5,823.90 2005.0,828.47 2005.5,832.82 2006.0,836.96 2006.5,840.88 2007.0,844.58 2007.5,848.04 2008.0,851.28 2008.5,854.28 2009.0,857.05 2009.5,859.58 2010.0,861.87 2010.5,863.92 2011.0,865.73 2011.5,867.30 2012.0,868.61 2012.5,869.69 2013.0,870.51 2013.5,871.09 2014.0,871.42 2014.5,871.50 2015.0,871.33 2015.5,870.91 2016.0,870.24 2016.5,869.33 2017.0,868.17 2017.5,866.76 2018.0,865.11 2018.5,863.21 2019.0,861.08 2019.5,858.70 2020.0,856.08 2020.5,853.23 2021.0,850.14 2021.5,846.82 2022.0,843.27 2022.5,839.50 2023.0,835.50 2023.5,831.28 2024.0,826.85 2024.5,822.20 2025.0,817.34 2025.5,812.28 2026.0,807.01 2026.5,801.55 2027.0,795.89 2027.5,790.05 2028.0,784.02 2028.5,777.81 2029.0,771.43 2029.5,764.88 2030.0,758.17 2030.5,751.29 2031.0,744.27 2031.5,737.09 2032.0,729.78 2032.5,722.32 2033.0,714.74 2033.5,707.04 2034.0,699.21 2034.5,691.28 2035.0,683.24 2035.5,675.10 2036.0,666.86 2036.5,658.54 2037.0,650.15 2037.5,641.68 2038.0,633.14 2038.5,624.54 2039.0,615.90 2039.5,607.20 2040.0,598.47 2040.5,589.71 2041.0,580.92 2041.5,572.11 2042.0,563.30 2042.5,554.48 2043.0,545.66 2043.5,536.86 2044.0,528.07 2044.5,519.30 2045.0,510.57 2045.5,501.88 2046.0,493.23 2046.5,484.63 2047.0,476.09 2047.5,467.62 2048.0,459.22 2048.5,450.90 2049.0,442.67 2049.5,434.53 2050.0,426.48 2050.5,418.55 2051.0,410.72 2051.5,403.01 2052.0,395.43 2052.5,387.97 2053.0,380.65 2053.5,373.48 2054.0,366.45 2054.5,359.57 2055.0,352.85 2055.5,346.30 2056.0,339.91 2056.5,333.70 2057.0,327.67 2057.5,321.82 2058.0,316.16 2058.5,310.70 2059.0,305.43 2059.5,300.36 2060.0,295.50 2060.5,290.85 2061.0,286.41 2061.5,282.18 2062.0,278.18 2062.5,274.40 2063.0,270.85 2063.5,267.52 2064.0,264.43 2064.5,261.57 2065.0,258.95 2065.5,256.57 2066.0,254.43 2066.5,252.53 2067.0,250.87 2067.5,249.46 2068.0,248.29 2068.5,247.37 2069.0,246.70 2069.5,246.28 2070.0,246.10 2070.5,246.18 2071.0,246.50 2071.5,247.07 2072.0,247.89 2072.5,248.96 2073.0,250.28 2073.5,251.83 2074.0,253.64 2074.5,255.68 2075.0,257.97 2075.5,260.50 2076.0,263.26 2076.5,266.26 2077.0,269.49 2077.5,272.95 2078.0,276.64 2078.5,280.56 2079.0,284.69 2079.5,289.04 2080.0,293.61 2080.5,298.39 2081.0,303.38 2081.5,308.56 2082.0,313.95 2082.5,319.54 2083.0,325.31 2083.5,331.27 2084.0,337.41 2084.5,343.72 2085.0,350.21 2085.5,356.86 2086.0,363.68 2086.5,370.65 2087.0,377.76 2087.5,385.03 2088.0,392.43 2088.5,399.96 2089.0,407.62 2089.5,415.40 2090.0,423.29 2090.5,431.30 2091.0,439.40 2091.5,447.60 2092.0,455.88 2092.5,464.25 2093.0,472.70 2093.5,481.21 2094.0,489.78 2094.5,498.41 2095.0,507.09 2095.5,515.81 2096.0,524.56 2096.5,533.34 2097.0,542.14 2097.5,550.95 2098.0,559.77 2098.5,568.59 2099.0,577.40 2099.5,586.20 2100.0,594.97 2100.5,603.71 2101.0,612.42 2101.5,621.09 2102.0,629.71 2102.5,638.27 2103.0,646.77 2103.5,655.19 2104.0,663.55 2104.5,671.81 2105.0,679.99 2105.5,688.07 2106.0,696.05 2106.5,703.92 2107.0,711.67 2107.5,719.31 2108.0,726.81 2108.5,734.18 2109.0,741.41 2109.5,748.50 2110.0,755.44 2110.5,762.21 2111.0,768.83 2111.5,775.28 2112.0,781.56 2112.5,787.66 2113.0,793.58 2113.5,799.31 2114.0,804.85 2114.5,810.19 2115.0,815.34 2115.5,820.28" fill="none" stroke="#f06a22" stroke-width="1.25" stroke-linejoin="round"/><polyline points="390.5,394.33 391.0,391.85 391.5,389.51 392.0,387.29 392.5,385.21 393.0,383.28 393.5,381.48 394.0,379.82 394.5,378.30 395.0,376.93 395.5,375.70 396.0,374.62 396.5,373.69 397.0,372.90 397.5,372.26 398.0,371.76 398.5,371.42 399.0,371.23 399.5,371.18 400.0,371.29 400.5,371.54 401.0,371.94 401.5,372.49 402.0,373.19 402.5,374.04 403.0,375.04 403.5,376.18 404.0,377.46 404.5,378.89 405.0,380.46 405.5,382.18 406.0,384.03 406.5,386.03 407.0,388.16 407.5,390.43 408.0,392.83 408.5,395.36 409.0,398.03 409.5,400.82 410.0,403.74 410.5,406.78 411.0,409.94 411.5,413.22 412.0,416.61 412.5,420.12 413.0,423.74 413.5,427.47 414.0,431.30 414.5,435.23 415.0,439.26 415.5,443.39 416.0,447.61 416.5,451.91 417.0,456.30 417.5,460.78 418.0,465.33 418.5,469.95 419.0,474.65 419.5,479.41 420.0,484.24 420.5,489.12 421.0,494.06 421.5,499.05 422.0,504.09 422.5,509.18 423.0,514.30 423.5,519.46 424.0,524.65 424.5,529.86 425.0,535.10 425.5,540.36 426.0,545.63 426.5,550.92 427.0,556.21 427.5,561.50 428.0,566.79 428.5,572.07 429.0,577.34 429.5,582.60 430.0,587.84 430.5,593.06 431.0,598.25 431.5,603.40 432.0,608.53 432.5,613.61 433.0,618.65 433.5,623.64 434.0,628.58 434.5,633.46 435.0,638.29 435.5,643.05 436.0,647.74 436.5,652.37 437.0,656.91 437.5,661.39 438.0,665.78 438.5,670.08 439.0,674.30 439.5,678.42 440.0,682.45 440.5,686.38 441.0,690.21 441.5,693.93 442.0,697.55 442.5,701.06 443.0,704.45 443.5,707.73 444.0,710.89 444.5,713.92 445.0,716.84 445.5,719.63 446.0,722.29 446.5,724.82 447.0,727.22 447.5,729.48 448.0,731.61 448.5,733.60 449.0,735.46 449.5,737.17 450.0,738.74 450.5,740.17 451.0,741.45 451.5,742.59 452.0,743.58 452.5,744.42 453.0,745.12 453.5,745.67 454.0,746.07 454.5,746.32 455.0,746.42 455.5,746.37 456.0,746.17 456.5,745.83 457.0,745.33 457.5,744.69 458.0,743.90 458.5,742.96 459.0,741.87 459.5,740.64 460.0,739.27 460.5,737.75 461.0,736.09 461.5,734.29 462.0,732.35 462.5,730.27 463.0,728.05 463.5,725.70 464.0,723.21 464.5,720.60 465.0,717.86 465.5,714.99 466.0,711.99 466.5,708.88 467.0,705.64 467.5,702.29 468.0,698.82 468.5,695.25 469.0,691.56 469.5,687.77 470.0,683.87 470.5,679.88 471.0,675.79 471.5,671.61 472.0,667.33 472.5,662.98 473.0,658.53 473.5,654.01 474.0,649.41 474.5,644.75 475.0,640.01 475.5,635.21 476.0,630.34 476.5,625.42 477.0,620.45 477.5,615.43 478.0,610.36 478.5,605.25 479.0,600.11 479.5,594.93 480.0,589.72 480.5,584.49 481.0,579.24 481.5,573.97 482.0,568.69 482.5,563.40 483.0,558.11 483.5,552.82 484.0,547.53 484.5,542.26 485.0,536.99 485.5,531.75 486.0,526.52 486.5,521.32 487.0,516.15 487.5,511.02 488.0,505.92 488.5,500.86 489.0,495.85 489.5,490.89 490.0,485.99 490.5,481.14 491.0,476.35 491.5,471.63 492.0,466.98 492.5,462.41 493.0,457.90 493.5,453.48 494.0,449.15 494.5,444.90 495.0,440.74 495.5,436.67 496.0,432.70 496.5,428.83 497.0,425.07 497.5,421.41 498.0,417.86 498.5,414.43 499.0,411.10 499.5,407.90 500.0,404.82 500.5,401.85 501.0,399.02 501.5,396.31 502.0,393.73 502.5,391.28 503.0,388.96 503.5,386.78 504.0,384.74 504.5,382.83 505.0,381.07 505.5,379.44 506.0,377.96 506.5,376.62 507.0,375.43 507.5,374.38 508.0,373.48 508.5,372.73 509.0,372.13 509.5,371.67 510.0,371.36 510.5,371.20 511.0,371.19 511.5,371.33 512.0,371.62 512.5,372.06 513.0,372.65 513.5,373.38 514.0,374.27 514.5,375.30 515.0,376.47 515.5,377.79 516.0,379.26 516.5,380.86 517.0,382.61 517.5,384.50 518.0,386.53 518.5,388.69 519.0,390.99 519.5,393.43 520.0,395.99 520.5,398.69 521.0,401.51 521.5,404.45 522.0,407.52 522.5,410.71 523.0,414.02 523.5,417.45 524.0,420.98 524.5,424.63 525.0,428.38 525.5,432.23 526.0,436.19 526.5,440.24 527.0,444.39 527.5,448.63 528.0,452.96 528.5,457.37 529.0,461.86 529.5,466.43 530.0,471.07 530.5,475.78 531.0,480.56 531.5,485.40 532.0,490.30 532.5,495.25 533.0,500.26 533.5,505.31 534.0,510.40 534.5,515.53 535.0,520.70 535.5,525.90 536.0,531.12 536.5,536.36 537.0,541.63 537.5,546.90 538.0,552.19 538.5,557.48 539.0,562.77 539.5,568.06 540.0,573.34 540.5,578.61 541.0,583.86 541.5,589.10 542.0,594.31 542.5,599.49 543.0,604.64 543.5,609.75 544.0,614.82 544.5,619.85 545.0,624.83 545.5,629.75 546.0,634.62 546.5,639.43 547.0,644.18 547.5,648.86 548.0,653.46 548.5,657.99 549.0,662.45 549.5,666.82 550.0,671.10 550.5,675.29 551.0,679.40 551.5,683.40 552.0,687.31 552.5,691.11 553.0,694.81 553.5,698.40 554.0,701.88 554.5,705.25 555.0,708.50 555.5,711.63 556.0,714.63 556.5,717.52 557.0,720.28 557.5,722.91 558.0,725.41 558.5,727.77 559.0,730.01 559.5,732.10 560.0,734.06 560.5,735.88 561.0,737.56 561.5,739.09 562.0,740.49 562.5,741.73 563.0,742.84 563.5,743.79 564.0,744.60 564.5,745.26 565.0,745.78 565.5,746.14 566.0,746.35 566.5,746.42 567.0,746.34 567.5,746.10 568.0,745.72 568.5,745.19 569.0,744.51 569.5,743.69 570.0,742.71 570.5,741.59 571.0,740.33 571.5,738.92 572.0,737.36 572.5,735.67 573.0,733.83 573.5,731.86 574.0,729.75 574.5,727.50 575.0,725.11 575.5,722.60 576.0,719.95 576.5,717.18 577.0,714.28 577.5,711.26 578.0,708.11 578.5,704.85 579.0,701.47 579.5,697.98 580.0,694.37 580.5,690.66 581.0,686.84 581.5,682.93 582.0,678.91 582.5,674.80 583.0,670.59 583.5,666.30 584.0,661.92 584.5,657.46 585.0,652.92 585.5,648.30 586.0,643.61 586.5,638.86 587.0,634.04 587.5,629.17 588.0,624.23 588.5,619.25 589.0,614.22 589.5,609.14 590.0,604.02 590.5,598.87 591.0,593.68 591.5,588.47 592.0,583.23 592.5,577.98 593.0,572.71 593.5,567.42 594.0,562.13 594.5,556.84 595.0,551.55 595.5,546.27 596.0,540.99 596.5,535.73 597.0,530.49 597.5,525.27 598.0,520.08 598.5,514.92 599.0,509.79 599.5,504.70 600.0,499.66 600.5,494.66 601.0,489.71 601.5,484.82 602.0,479.99 602.5,475.22 603.0,470.51 603.5,465.88 604.0,461.32 604.5,456.84 605.0,452.43 605.5,448.12 606.0,443.89 606.5,439.75 607.0,435.71 607.5,431.77 608.0,427.92 608.5,424.18 609.0,420.55 609.5,417.03 610.0,413.62 610.5,410.33 611.0,407.15 611.5,404.09 612.0,401.16 612.5,398.36 613.0,395.68 613.5,393.13 614.0,390.71 614.5,388.43 615.0,386.28 615.5,384.27 616.0,382.39 616.5,380.66 617.0,379.07 617.5,377.63 618.0,376.32 618.5,375.16 619.0,374.15 619.5,373.29 620.0,372.57 620.5,372.00 621.0,371.58 621.5,371.31 622.0,371.19 622.5,371.21 623.0,371.39 623.5,371.72 624.0,372.19 624.5,372.81 625.0,373.58 625.5,374.50 626.0,375.56 626.5,376.78 627.0,378.13 627.5,379.63 628.0,381.27 628.5,383.05 629.0,384.97 629.5,387.04 630.0,389.23 630.5,391.56 631.0,394.03 631.5,396.63 632.0,399.35 632.5,402.20 633.0,405.18 633.5,408.28 634.0,411.50 634.5,414.83 635.0,418.28 635.5,421.85 636.0,425.52 636.5,429.29 637.0,433.17 637.5,437.15 638.0,441.23 638.5,445.40 639.0,449.66 639.5,454.01 640.0,458.44 640.5,462.95 641.0,467.54 641.5,472.20 642.0,476.93 642.5,481.72 643.0,486.57 643.5,491.49 644.0,496.45 644.5,501.47 645.0,506.53 645.5,511.63 646.0,516.77 646.5,521.94 647.0,527.15 647.5,532.38 648.0,537.62 648.5,542.89 649.0,548.17 649.5,553.46 650.0,558.75 650.5,564.04 651.0,569.33 651.5,574.60 652.0,579.87 652.5,585.12 653.0,590.35 653.5,595.55 654.0,600.73 654.5,605.87 655.0,610.97 655.5,616.03 656.0,621.05 656.5,626.02 657.0,630.93 657.5,635.78 658.0,640.58 658.5,645.31 659.0,649.97 659.5,654.56 660.0,659.07 660.5,663.50 661.0,667.85 661.5,672.11 662.0,676.29 662.5,680.37 663.0,684.35 663.5,688.23 664.0,692.01 664.5,695.68 665.0,699.25 665.5,702.70 666.0,706.04 666.5,709.26 667.0,712.36 667.5,715.34 668.0,718.19 668.5,720.92 669.0,723.52 669.5,725.99 670.0,728.32 670.5,730.52 671.0,732.59 671.5,734.51 672.0,736.30 672.5,737.94 673.0,739.44 673.5,740.80 674.0,742.01 674.5,743.08 675.0,744.00 675.5,744.77 676.0,745.40 676.5,745.88 677.0,746.20 677.5,746.38 678.0,746.41 678.5,746.29 679.0,746.03 679.5,745.61 680.0,745.04 680.5,744.33 681.0,743.47 681.5,742.46 682.0,741.30 682.5,740.00 683.0,738.56 683.5,736.97 684.0,735.24 684.5,733.37 685.0,731.36 685.5,729.22 686.0,726.94 686.5,724.52 687.0,721.98 687.5,719.30 688.0,716.50 688.5,713.57 689.0,710.51 689.5,707.34 690.0,704.05 690.5,700.64 691.0,697.12 691.5,693.49 692.0,689.75 692.5,685.91 693.0,681.97 693.5,677.93 694.0,673.79 694.5,669.57 695.0,665.25 695.5,660.85 696.0,656.37 696.5,651.81 697.0,647.18 697.5,642.48 698.0,637.71 698.5,632.88 699.0,627.99 699.5,623.04 700.0,618.04 700.5,613.00 701.0,607.91 701.5,602.79 702.0,597.63 702.5,592.43 703.0,587.21 703.5,581.97 704.0,576.71 704.5,571.44 705.0,566.15 705.5,560.86 706.0,555.57 706.5,550.28 707.0,545.00 707.5,539.73 708.0,534.47 708.5,529.24 709.0,524.02 709.5,518.84 710.0,513.68 710.5,508.56 711.0,503.49 711.5,498.45 712.0,493.47 712.5,488.53 713.0,483.65 713.5,478.83 714.0,474.08 714.5,469.39 715.0,464.78 715.5,460.23 716.0,455.77 716.5,451.39 717.0,447.09 717.5,442.89 718.0,438.77 718.5,434.75 719.0,430.83 719.5,427.01 720.0,423.30 720.5,419.70 721.0,416.20 721.5,412.82 722.0,409.55 722.5,406.40 723.0,403.38 723.5,400.48 724.0,397.70 724.5,395.05 725.0,392.53 725.5,390.15 726.0,387.90 726.5,385.78 727.0,383.80 727.5,381.97 728.0,380.27 728.5,378.71 729.0,377.30 729.5,376.03 730.0,374.91 730.5,373.93 731.0,373.10 731.5,372.42 732.0,371.89 732.5,371.50 733.0,371.27 733.5,371.18 734.0,371.24 734.5,371.46 735.0,371.82 735.5,372.33 736.0,372.98 736.5,373.79 737.0,374.74 737.5,375.84 738.0,377.09 738.5,378.48 739.0,380.01 739.5,381.68 740.0,383.50 740.5,385.46 741.0,387.55 741.5,389.78 742.0,392.14 742.5,394.64 743.0,397.27 743.5,400.02 744.0,402.91 744.5,405.91 745.0,409.04 745.5,412.29 746.0,415.65 746.5,419.13 747.0,422.72 747.5,426.41 748.0,430.22 748.5,434.12 749.0,438.12 749.5,442.22 750.0,446.42 750.5,450.70 751.0,455.06 751.5,459.52 752.0,464.04 752.5,468.65 753.0,473.33 753.5,478.07 754.0,482.88 754.5,487.75 755.0,492.67 755.5,497.65 756.0,502.68 756.5,507.75 757.0,512.86 757.5,518.01 758.0,523.19 758.5,528.40 759.0,533.63 759.5,538.89 760.0,544.16 760.5,549.44 761.0,554.73 761.5,560.02 762.0,565.31 762.5,570.59 763.0,575.87 763.5,581.13 764.0,586.38 764.5,591.60 765.0,596.80 765.5,601.96 766.0,607.10 766.5,612.19 767.0,617.24 767.5,622.25 768.0,627.20 768.5,632.10 769.0,636.94 769.5,641.72 770.0,646.43 770.5,651.08 771.0,655.65 771.5,660.14 772.0,664.55 772.5,668.88 773.0,673.12 773.5,677.27 774.0,681.33 774.5,685.29 775.0,689.15 775.5,692.90 776.0,696.55 776.5,700.09 777.0,703.51 777.5,706.82 778.0,710.01 778.5,713.09 779.0,716.04 779.5,718.86 780.0,721.56 780.5,724.12 781.0,726.56 781.5,728.86 782.0,731.03 782.5,733.06 783.0,734.95 783.5,736.70 784.0,738.31 784.5,739.78 785.0,741.10 785.5,742.28 786.0,743.31 786.5,744.20 787.0,744.94 787.5,745.53 788.0,745.97 788.5,746.26 789.0,746.40 789.5,746.40 790.0,746.24 790.5,745.94 791.0,745.49 791.5,744.88 792.0,744.13 792.5,743.24 793.0,742.19 793.5,741.00 794.0,739.67 794.5,738.19 795.0,736.57 795.5,734.81 796.0,732.90 796.5,730.86 797.0,728.68 797.5,726.37 798.0,723.92 798.5,721.35 799.0,718.64 799.5,715.80 800.0,712.84 800.5,709.76 801.0,706.56 801.5,703.24 802.0,699.81 802.5,696.26 803.0,692.60 803.5,688.84 804.0,684.98 804.5,681.01 805.0,676.95 805.5,672.79 806.0,668.54 806.5,664.20 807.0,659.79 807.5,655.29 808.0,650.71 808.5,646.06 809.0,641.34 809.5,636.56 810.0,631.71 810.5,626.81 811.0,621.85 811.5,616.84 812.0,611.78 812.5,606.69 813.0,601.55 813.5,596.38 814.0,591.18 814.5,585.96 815.0,580.71 815.5,575.45 816.0,570.17 816.5,564.88 817.0,559.59 817.5,554.30 818.0,549.01 818.5,543.73 819.0,538.47 819.5,533.21 820.0,527.98 820.5,522.77 821.0,517.60 821.5,512.45 822.0,507.34 822.5,502.27 823.0,497.25 823.5,492.28 824.0,487.36 824.5,482.49 825.0,477.69 825.5,472.95 826.0,468.28 826.5,463.68 827.0,459.16 827.5,454.71 828.0,450.35 828.5,446.08 829.0,441.89 829.5,437.80 830.0,433.80 830.5,429.91 831.0,426.11 831.5,422.43 832.0,418.85 832.5,415.38 833.0,412.02 833.5,408.79 834.0,405.67 834.5,402.67 835.0,399.80 835.5,397.05 836.0,394.44 836.5,391.95 837.0,389.60 837.5,387.38 838.0,385.30 838.5,383.35 839.0,381.55 839.5,379.88 840.0,378.36 840.5,376.98 841.0,375.75 841.5,374.66 842.0,373.72 842.5,372.93 843.0,372.28 843.5,371.78 844.0,371.43 844.5,371.23 845.0,371.18 845.5,371.28 846.0,371.53 846.5,371.92 847.0,372.47 847.5,373.16 848.0,374.00 848.5,374.99 849.0,376.13 849.5,377.41 850.0,378.83 850.5,380.40 851.0,382.11 851.5,383.96 852.0,385.95 852.5,388.07 853.0,390.34 853.5,392.73 854.0,395.26 854.5,397.92 855.0,400.70 855.5,403.62 856.0,406.65 856.5,409.81 857.0,413.08 857.5,416.48 858.0,419.98 858.5,423.59 859.0,427.32 859.5,431.14 860.0,435.07 860.5,439.10 861.0,443.22 861.5,447.44 862.0,451.74 862.5,456.13 863.0,460.60 863.5,465.14 864.0,469.76 864.5,474.46 865.0,479.22 865.5,484.04 866.0,488.92 866.5,493.86 867.0,498.85 867.5,503.89 868.0,508.97 868.5,514.09 869.0,519.25 869.5,524.44 870.0,529.65 870.5,534.89 871.0,540.15 871.5,545.42 872.0,550.71 872.5,556.00 873.0,561.29 873.5,566.58 874.0,571.86 874.5,577.13 875.0,582.39 875.5,587.63 876.0,592.85 876.5,598.04 877.0,603.20 877.5,608.32 878.0,613.41 878.5,618.45 879.0,623.44 879.5,628.38 880.0,633.27 880.5,638.09 881.0,642.86 881.5,647.56 882.0,652.18 882.5,656.73 883.0,661.21 883.5,665.60 884.0,669.91 884.5,674.13 885.0,678.26 885.5,682.29 886.0,686.22 886.5,690.06 887.0,693.79 887.5,697.41 888.0,700.92 888.5,704.32 889.0,707.60 889.5,710.76 890.0,713.80 890.5,716.72 891.0,719.52 891.5,722.18 892.0,724.72 892.5,727.12 893.0,729.40 893.5,731.53 894.0,733.53 894.5,735.38 895.0,737.10 895.5,738.68 896.0,740.11 896.5,741.40 897.0,742.54 897.5,743.54 898.0,744.39 898.5,745.09 899.0,745.65 899.5,746.05 900.0,746.31 900.5,746.42 901.0,746.37 901.5,746.18 902.0,745.84 902.5,745.35 903.0,744.72 903.5,743.93 904.0,743.00 904.5,741.92 905.0,740.70 905.5,739.33 906.0,737.81 906.5,736.16 907.0,734.36 907.5,732.43 908.0,730.35 908.5,728.14 909.0,725.79 909.5,723.32 910.0,720.71 910.5,717.97 911.0,715.10 911.5,712.12 912.0,709.00 912.5,705.77 913.0,702.43 913.5,698.97 914.0,695.39 914.5,691.71 915.0,687.92 915.5,684.03 916.0,680.04 916.5,675.96 917.0,671.78 917.5,667.51 918.0,663.15 918.5,658.71 919.0,654.19 919.5,649.60 920.0,644.93 920.5,640.20 921.0,635.40 921.5,630.54 922.0,625.62 922.5,620.65 923.0,615.63 923.5,610.56 924.0,605.46 924.5,600.31 925.0,595.14 925.5,589.93 926.0,584.70 926.5,579.45 927.0,574.18 927.5,568.90 928.0,563.62 928.5,558.32 929.0,553.03 929.5,547.75 930.0,542.47 930.5,537.20 931.0,531.96 931.5,526.73 932.0,521.53 932.5,516.36 933.0,511.22 933.5,506.12 934.0,501.06 934.5,496.05 935.0,491.09 935.5,486.18 936.0,481.33 936.5,476.54 937.0,471.82 937.5,467.17 938.0,462.59 938.5,458.08 939.0,453.66 939.5,449.32 940.0,445.06 940.5,440.90 941.0,436.83 941.5,432.86 942.0,428.99 942.5,425.22 943.0,421.56 943.5,418.00 944.0,414.56 944.5,411.24 945.0,408.03 945.5,404.94 946.0,401.97 946.5,399.13 947.0,396.41 947.5,393.83 948.0,391.37 948.5,389.05 949.0,386.87 949.5,384.82 950.0,382.90 950.5,381.13 951.0,379.50 951.5,378.02 952.0,376.67 952.5,375.47 953.0,374.42 953.5,373.52 954.0,372.76 954.5,372.15 955.0,371.68 955.5,371.37 956.0,371.21 956.5,371.19 957.0,371.33 957.5,371.61 958.0,372.04 958.5,372.62 959.0,373.35 959.5,374.23 960.0,375.25 960.5,376.42 961.0,377.74 961.5,379.19 962.0,380.80 962.5,382.54 963.0,384.42 963.5,386.44 964.0,388.60 964.5,390.90 965.0,393.33 965.5,395.89 966.0,398.58 966.5,401.39 967.0,404.33 967.5,407.40 968.0,410.58 968.5,413.89 969.0,417.31 969.5,420.84 970.0,424.48 970.5,428.23 971.0,432.08 971.5,436.03 972.0,440.08 972.5,444.22 973.0,448.46 973.5,452.78 974.0,457.19 974.5,461.68 975.0,466.25 975.5,470.88 976.0,475.59 976.5,480.37 977.0,485.21 977.5,490.10 978.0,495.06 978.5,500.06 979.0,505.11 979.5,510.20 980.0,515.33 980.5,520.49 981.0,525.69 981.5,530.91 982.0,536.15 982.5,541.41 983.0,546.69 983.5,551.97 984.0,557.27 984.5,562.56 985.0,567.85 985.5,573.13 986.0,578.40 986.5,583.65 987.0,588.89 987.5,594.10 988.0,599.28 988.5,604.43 989.0,609.55 989.5,614.62 990.0,619.65 990.5,624.63 991.0,629.56 991.5,634.43 992.0,639.24 992.5,643.99 993.0,648.67 993.5,653.28 994.0,657.82 994.5,662.27 995.0,666.64 995.5,670.93 996.0,675.13 996.5,679.23 997.0,683.24 997.5,687.15 998.0,690.96 998.5,694.66 999.0,698.26 999.5,701.74 1000.0,705.11 1000.5,708.37 1001.0,711.50 1001.5,714.52 1002.0,717.41 1002.5,720.17 1003.0,722.81 1003.5,725.31 1004.0,727.68 1004.5,729.92 1005.0,732.02 1005.5,733.99 1006.0,735.81 1006.5,737.49 1007.0,739.04 1007.5,740.43 1008.0,741.69 1008.5,742.80 1009.0,743.76 1009.5,744.57 1010.0,745.24 1010.5,745.76 1011.0,746.13 1011.5,746.35 1012.0,746.42 1012.5,746.34 1013.0,746.12 1013.5,745.74 1014.0,745.22 1014.5,744.54 1015.0,743.72 1015.5,742.75 1016.0,741.64 1016.5,740.38 1017.0,738.98 1017.5,737.43 1018.0,735.74 1018.5,733.91 1019.0,731.94 1019.5,729.83 1020.0,727.59 1020.5,725.21 1021.0,722.70 1021.5,720.06 1022.0,717.29 1022.5,714.40 1023.0,711.38 1023.5,708.24 1024.0,704.98 1024.5,701.61 1025.0,698.12 1025.5,694.52 1026.0,690.81 1026.5,687.00 1027.0,683.08 1027.5,679.07 1028.0,674.96 1028.5,670.76 1029.0,666.47 1029.5,662.09 1030.0,657.64 1030.5,653.10 1031.0,648.49 1031.5,643.80 1032.0,639.05 1032.5,634.24 1033.0,629.36 1033.5,624.43 1034.0,619.45 1034.5,614.42 1035.0,609.34 1035.5,604.23 1036.0,599.07 1036.5,593.89 1037.0,588.68 1037.5,583.44 1038.0,578.19 1038.5,572.92 1039.0,567.63 1039.5,562.35 1040.0,557.05 1040.5,551.76 1041.0,546.48 1041.5,541.20 1042.0,535.94 1042.5,530.70 1043.0,525.48 1043.5,520.29 1044.0,515.12 1044.5,509.99 1045.0,504.90 1045.5,499.86 1046.0,494.86 1046.5,489.91 1047.0,485.01 1047.5,480.18 1048.0,475.40 1048.5,470.70 1049.0,466.06 1049.5,461.50 1050.0,457.01 1050.5,452.61 1051.0,448.29 1051.5,444.06 1052.0,439.92 1052.5,435.87 1053.0,431.92 1053.5,428.07 1054.0,424.33 1054.5,420.69 1055.0,417.17 1055.5,413.75 1056.0,410.45 1056.5,407.27 1057.0,404.21 1057.5,401.28 1058.0,398.47 1058.5,395.78 1059.0,393.23 1059.5,390.80 1060.0,388.51 1060.5,386.36 1061.0,384.34 1061.5,382.47 1062.0,380.73 1062.5,379.13 1063.0,377.68 1063.5,376.37 1064.0,375.21 1064.5,374.19 1065.0,373.32 1065.5,372.60 1066.0,372.02 1066.5,371.60 1067.0,371.32 1067.5,371.19 1068.0,371.21 1068.5,371.38 1069.0,371.70 1069.5,372.17 1070.0,372.78 1070.5,373.55 1071.0,374.46 1071.5,375.52 1072.0,376.72 1072.5,378.07 1073.0,379.57 1073.5,381.20 1074.0,382.98 1074.5,384.90 1075.0,386.95 1075.5,389.14 1076.0,391.47 1076.5,393.93 1077.0,396.52 1077.5,399.24 1078.0,402.09 1078.5,405.06 1079.0,408.15 1079.5,411.37 1080.0,414.70 1080.5,418.14 1081.0,421.70 1081.5,425.37 1082.0,429.14 1082.5,433.02 1083.0,436.99 1083.5,441.07 1084.0,445.23 1084.5,449.49 1085.0,453.83 1085.5,458.26 1086.0,462.77 1086.5,467.35 1087.0,472.01 1087.5,476.73 1088.0,481.53 1088.5,486.38 1089.0,491.29 1089.5,496.25 1090.0,501.27 1090.5,506.32 1091.0,511.43 1091.5,516.56 1092.0,521.74 1092.5,526.94 1093.0,532.17 1093.5,537.41 1094.0,542.68 1094.5,547.96 1095.0,553.24 1095.5,558.54 1096.0,563.83 1096.5,569.11 1097.0,574.39 1097.5,579.66 1098.0,584.91 1098.5,590.14 1099.0,595.34 1099.5,600.52 1100.0,605.66 1100.5,610.77 1101.0,615.83 1101.5,620.85 1102.0,625.82 1102.5,630.73 1103.0,635.59 1103.5,640.39 1104.0,645.12 1104.5,649.79 1105.0,654.38 1105.5,658.89 1106.0,663.33 1106.5,667.68 1107.0,671.95 1107.5,676.12 1108.0,680.20 1108.5,684.19 1109.0,688.08 1109.5,691.86 1110.0,695.54 1110.5,699.11 1111.0,702.56 1111.5,705.91 1112.0,709.13 1112.5,712.24 1113.0,715.22 1113.5,718.08 1114.0,720.81 1114.5,723.42 1115.0,725.89 1115.5,728.23 1116.0,730.44 1116.5,732.51 1117.0,734.44 1117.5,736.23 1118.0,737.88 1118.5,739.38 1119.0,740.75 1119.5,741.97 1120.0,743.04 1120.5,743.97 1121.0,744.75 1121.5,745.38 1122.0,745.86 1122.5,746.19 1123.0,746.38 1123.5,746.41 1124.0,746.30 1124.5,746.04 1125.0,745.63 1125.5,745.07 1126.0,744.36 1126.5,743.50 1127.0,742.50 1127.5,741.35 1128.0,740.06 1128.5,738.62 1129.0,737.04 1129.5,735.31 1130.0,733.45 1130.5,731.45 1131.0,729.31 1131.5,727.03 1132.0,724.62 1132.5,722.08 1133.0,719.41 1133.5,716.61 1134.0,713.69 1134.5,710.64 1135.0,707.47 1135.5,704.18 1136.0,700.78 1136.5,697.26 1137.0,693.64 1137.5,689.91 1138.0,686.07 1138.5,682.13 1139.0,678.09 1139.5,673.96 1140.0,669.74 1140.5,665.43 1141.0,661.03 1141.5,656.55 1142.0,652.00 1142.5,647.37 1143.0,642.67 1143.5,637.90 1144.0,633.07 1144.5,628.18 1145.0,623.24 1145.5,618.25 1146.0,613.20 1146.5,608.12 1147.0,602.99 1147.5,597.83 1148.0,592.64 1148.5,587.42 1149.0,582.18 1149.5,576.92 1150.0,571.65 1150.5,566.37 1151.0,561.08 1151.5,555.78 1152.0,550.49 1152.5,545.21 1153.0,539.94 1153.5,534.68 1154.0,529.44 1154.5,524.23 1155.0,519.04 1155.5,513.89 1156.0,508.77 1156.5,503.69 1157.0,498.65 1157.5,493.66 1158.0,488.73 1158.5,483.85 1159.0,479.03 1159.5,474.27 1160.0,469.58 1160.5,464.96 1161.0,460.41 1161.5,455.95 1162.0,451.56 1162.5,447.26 1163.0,443.05 1163.5,438.94 1164.0,434.91 1164.5,430.99 1165.0,427.17 1165.5,423.45 1166.0,419.84 1166.5,416.34 1167.0,412.95 1167.5,409.68 1168.0,406.53 1168.5,403.50 1169.0,400.59 1169.5,397.81 1170.0,395.16 1170.5,392.63 1171.0,390.24 1171.5,387.99 1172.0,385.86 1172.5,383.88 1173.0,382.04 1173.5,380.33 1174.0,378.77 1174.5,377.35 1175.0,376.08 1175.5,374.95 1176.0,373.97 1176.5,373.13 1177.0,372.45 1177.5,371.91 1178.0,371.52 1178.5,371.27 1179.0,371.18 1179.5,371.24 1180.0,371.44 1180.5,371.80 1181.0,372.30 1181.5,372.95 1182.0,373.75 1182.5,374.70 1183.0,375.80 1183.5,377.03 1184.0,378.42 1184.5,379.95 1185.0,381.62 1185.5,383.43 1186.0,385.38 1186.5,387.46 1187.0,389.69 1187.5,392.05 1188.0,394.54 1188.5,397.16 1189.0,399.91 1189.5,402.79 1190.0,405.79 1190.5,408.91 1191.0,412.16 1191.5,415.51 1192.0,418.99 1192.5,422.57 1193.0,426.26 1193.5,430.06 1194.0,433.96 1194.5,437.96 1195.0,442.06 1195.5,446.25 1196.0,450.52 1196.5,454.89 1197.0,459.34 1197.5,463.86 1198.0,468.46 1198.5,473.14 1199.0,477.88 1199.5,482.68 1200.0,487.55 1200.5,492.47 1201.0,497.45 1201.5,502.48 1202.0,507.55 1202.5,512.66 1203.0,517.80 1203.5,522.98 1204.0,528.19 1204.5,533.42 1205.0,538.68 1205.5,543.94 1206.0,549.23 1206.5,554.51 1207.0,559.81 1207.5,565.10 1208.0,570.38 1208.5,575.66 1209.0,580.92 1209.5,586.17 1210.0,591.39 1210.5,596.59 1211.0,601.76 1211.5,606.89 1212.0,611.99 1212.5,617.04 1213.0,622.05 1213.5,627.00 1214.0,631.90 1214.5,636.75 1215.0,641.53 1215.5,646.25 1216.0,650.89 1216.5,655.47 1217.0,659.96 1217.5,664.38 1218.0,668.71 1218.5,672.96 1219.0,677.11 1219.5,681.17 1220.0,685.13 1220.5,688.99 1221.0,692.75 1221.5,696.40 1222.0,699.95 1222.5,703.38 1223.0,706.69 1223.5,709.89 1224.0,712.97 1224.5,715.92 1225.0,718.75 1225.5,721.45 1226.0,724.02 1226.5,726.47 1227.0,728.77 1227.5,730.95 1228.0,732.98 1228.5,734.88 1229.0,736.64 1229.5,738.25 1230.0,739.72 1230.5,741.05 1231.0,742.24 1231.5,743.28 1232.0,744.17 1232.5,744.91 1233.0,745.51 1233.5,745.95 1234.0,746.25 1234.5,746.40 1235.0,746.40 1235.5,746.25 1236.0,745.95 1236.5,745.51 1237.0,744.91 1237.5,744.17 1238.0,743.28 1238.5,742.24 1239.0,741.05 1239.5,739.72 1240.0,738.25 1240.5,736.64 1241.0,734.88 1241.5,732.98 1242.0,730.95 1242.5,728.77 1243.0,726.47 1243.5,724.02 1244.0,721.45 1244.5,718.75 1245.0,715.92 1245.5,712.97 1246.0,709.89 1246.5,706.69 1247.0,703.38 1247.5,699.95 1248.0,696.40 1248.5,692.75 1249.0,688.99 1249.5,685.13 1250.0,681.17 1250.5,677.11 1251.0,672.96 1251.5,668.71 1252.0,664.38 1252.5,659.96 1253.0,655.47 1253.5,650.89 1254.0,646.25 1254.5,641.53 1255.0,636.75 1255.5,631.90 1256.0,627.00 1256.5,622.05 1257.0,617.04 1257.5,611.99 1258.0,606.89 1258.5,601.76 1259.0,596.59 1259.5,591.39 1260.0,586.17 1260.5,580.92 1261.0,575.66 1261.5,570.38 1262.0,565.10 1262.5,559.81 1263.0,554.51 1263.5,549.23 1264.0,543.94 1264.5,538.68 1265.0,533.42 1265.5,528.19 1266.0,522.98 1266.5,517.80 1267.0,512.66 1267.5,507.55 1268.0,502.48 1268.5,497.45 1269.0,492.47 1269.5,487.55 1270.0,482.68 1270.5,477.88 1271.0,473.14 1271.5,468.46 1272.0,463.86 1272.5,459.34 1273.0,454.89 1273.5,450.52 1274.0,446.25 1274.5,442.06 1275.0,437.96 1275.5,433.96 1276.0,430.06 1276.5,426.26 1277.0,422.57 1277.5,418.99 1278.0,415.51 1278.5,412.16 1279.0,408.91 1279.5,405.79 1280.0,402.79 1280.5,399.91 1281.0,397.16 1281.5,394.54 1282.0,392.05 1282.5,389.69 1283.0,387.46 1283.5,385.38 1284.0,383.43 1284.5,381.62 1285.0,379.95 1285.5,378.42 1286.0,377.03 1286.5,375.80 1287.0,374.70 1287.5,373.75 1288.0,372.95 1288.5,372.30 1289.0,371.80 1289.5,371.44 1290.0,371.24 1290.5,371.18 1291.0,371.27 1291.5,371.52 1292.0,371.91 1292.5,372.45 1293.0,373.13 1293.5,373.97 1294.0,374.95 1294.5,376.08 1295.0,377.35 1295.5,378.77 1296.0,380.33 1296.5,382.04 1297.0,383.88 1297.5,385.86 1298.0,387.99 1298.5,390.24 1299.0,392.63 1299.5,395.16 1300.0,397.81 1300.5,400.59 1301.0,403.50 1301.5,406.53 1302.0,409.68 1302.5,412.95 1303.0,416.34 1303.5,419.84 1304.0,423.45 1304.5,427.17 1305.0,430.99 1305.5,434.91 1306.0,438.94 1306.5,443.05 1307.0,447.26 1307.5,451.56 1308.0,455.95 1308.5,460.41 1309.0,464.96 1309.5,469.58 1310.0,474.27 1310.5,479.03 1311.0,483.85 1311.5,488.73 1312.0,493.66 1312.5,498.65 1313.0,503.69 1313.5,508.77 1314.0,513.89 1314.5,519.04 1315.0,524.23 1315.5,529.44 1316.0,534.68 1316.5,539.94 1317.0,545.21 1317.5,550.49 1318.0,555.78 1318.5,561.08 1319.0,566.37 1319.5,571.65 1320.0,576.92 1320.5,582.18 1321.0,587.42 1321.5,592.64 1322.0,597.83 1322.5,602.99 1323.0,608.12 1323.5,613.20 1324.0,618.25 1324.5,623.24 1325.0,628.18 1325.5,633.07 1326.0,637.90 1326.5,642.67 1327.0,647.37 1327.5,652.00 1328.0,656.55 1328.5,661.03 1329.0,665.43 1329.5,669.74 1330.0,673.96 1330.5,678.09 1331.0,682.13 1331.5,686.07 1332.0,689.91 1332.5,693.64 1333.0,697.26 1333.5,700.78 1334.0,704.18 1334.5,707.47 1335.0,710.64 1335.5,713.69 1336.0,716.61 1336.5,719.41 1337.0,722.08 1337.5,724.62 1338.0,727.03 1338.5,729.31 1339.0,731.45 1339.5,733.45 1340.0,735.31 1340.5,737.04 1341.0,738.62 1341.5,740.06 1342.0,741.35 1342.5,742.50 1343.0,743.50 1343.5,744.36 1344.0,745.07 1344.5,745.63 1345.0,746.04 1345.5,746.30 1346.0,746.41 1346.5,746.38 1347.0,746.19 1347.5,745.86 1348.0,745.38 1348.5,744.75 1349.0,743.97 1349.5,743.04 1350.0,741.97 1350.5,740.75 1351.0,739.38 1351.5,737.88 1352.0,736.23 1352.5,734.44 1353.0,732.51 1353.5,730.44 1354.0,728.23 1354.5,725.89 1355.0,723.42 1355.5,720.81 1356.0,718.08 1356.5,715.22 1357.0,712.24 1357.5,709.13 1358.0,705.91 1358.5,702.56 1359.0,699.11 1359.5,695.54 1360.0,691.86 1360.5,688.08 1361.0,684.19 1361.5,680.20 1362.0,676.12 1362.5,671.95 1363.0,667.68 1363.5,663.33 1364.0,658.89 1364.5,654.38 1365.0,649.79 1365.5,645.12 1366.0,640.39 1366.5,635.59 1367.0,630.73 1367.5,625.82 1368.0,620.85 1368.5,615.83 1369.0,610.77 1369.5,605.66 1370.0,600.52 1370.5,595.34 1371.0,590.14 1371.5,584.91 1372.0,579.66 1372.5,574.39 1373.0,569.11 1373.5,563.83 1374.0,558.54 1374.5,553.24 1375.0,547.96 1375.5,542.68 1376.0,537.41 1376.5,532.17 1377.0,526.94 1377.5,521.74 1378.0,516.56 1378.5,511.43 1379.0,506.32 1379.5,501.27 1380.0,496.25 1380.5,491.29 1381.0,486.38 1381.5,481.53 1382.0,476.73 1382.5,472.01 1383.0,467.35 1383.5,462.77 1384.0,458.26 1384.5,453.83 1385.0,449.49 1385.5,445.23 1386.0,441.07 1386.5,436.99 1387.0,433.02 1387.5,429.14 1388.0,425.37 1388.5,421.70 1389.0,418.14 1389.5,414.70 1390.0,411.37 1390.5,408.15 1391.0,405.06 1391.5,402.09 1392.0,399.24 1392.5,396.52 1393.0,393.93 1393.5,391.47 1394.0,389.14 1394.5,386.95 1395.0,384.90 1395.5,382.98 1396.0,381.20 1396.5,379.57 1397.0,378.07 1397.5,376.72 1398.0,375.52 1398.5,374.46 1399.0,373.55 1399.5,372.78 1400.0,372.17 1400.5,371.70 1401.0,371.38 1401.5,371.21 1402.0,371.19 1402.5,371.32 1403.0,371.60 1403.5,372.02 1404.0,372.60 1404.5,373.32 1405.0,374.19 1405.5,375.21 1406.0,376.37 1406.5,377.68 1407.0,379.13 1407.5,380.73 1408.0,382.47 1408.5,384.34 1409.0,386.36 1409.5,388.51 1410.0,390.80 1410.5,393.23 1411.0,395.78 1411.5,398.47 1412.0,401.28 1412.5,404.21 1413.0,407.27 1413.5,410.45 1414.0,413.75 1414.5,417.17 1415.0,420.69 1415.5,424.33 1416.0,428.07 1416.5,431.92 1417.0,435.87 1417.5,439.92 1418.0,444.06 1418.5,448.29 1419.0,452.61 1419.5,457.01 1420.0,461.50 1420.5,466.06 1421.0,470.70 1421.5,475.40 1422.0,480.18 1422.5,485.01 1423.0,489.91 1423.5,494.86 1424.0,499.86 1424.5,504.90 1425.0,509.99 1425.5,515.12 1426.0,520.29 1426.5,525.48 1427.0,530.70 1427.5,535.94 1428.0,541.20 1428.5,546.48 1429.0,551.76 1429.5,557.05 1430.0,562.35 1430.5,567.63 1431.0,572.92 1431.5,578.19 1432.0,583.44 1432.5,588.68 1433.0,593.89 1433.5,599.07 1434.0,604.23 1434.5,609.34 1435.0,614.42 1435.5,619.45 1436.0,624.43 1436.5,629.36 1437.0,634.24 1437.5,639.05 1438.0,643.80 1438.5,648.49 1439.0,653.10 1439.5,657.64 1440.0,662.09 1440.5,666.47 1441.0,670.76 1441.5,674.96 1442.0,679.07 1442.5,683.08 1443.0,687.00 1443.5,690.81 1444.0,694.52 1444.5,698.12 1445.0,701.61 1445.5,704.98 1446.0,708.24 1446.5,711.38 1447.0,714.40 1447.5,717.29 1448.0,720.06 1448.5,722.70 1449.0,725.21 1449.5,727.59 1450.0,729.83 1450.5,731.94 1451.0,733.91 1451.5,735.74 1452.0,737.43 1452.5,738.98 1453.0,740.38 1453.5,741.64 1454.0,742.75 1454.5,743.72 1455.0,744.54 1455.5,745.22 1456.0,745.74 1456.5,746.12 1457.0,746.34 1457.5,746.42 1458.0,746.35 1458.5,746.13 1459.0,745.76 1459.5,745.24 1460.0,744.57 1460.5,743.76 1461.0,742.80 1461.5,741.69 1462.0,740.43 1462.5,739.04 1463.0,737.49 1463.5,735.81 1464.0,733.99 1464.5,732.02 1465.0,729.92 1465.5,727.68 1466.0,725.31 1466.5,722.81 1467.0,720.17 1467.5,717.41 1468.0,714.52 1468.5,711.50 1469.0,708.37 1469.5,705.11 1470.0,701.74 1470.5,698.26 1471.0,694.66 1471.5,690.96 1472.0,687.15 1472.5,683.24 1473.0,679.23 1473.5,675.13 1474.0,670.93 1474.5,666.64 1475.0,662.27 1475.5,657.82 1476.0,653.28 1476.5,648.67 1477.0,643.99 1477.5,639.24 1478.0,634.43 1478.5,629.56 1479.0,624.63 1479.5,619.65 1480.0,614.62 1480.5,609.55 1481.0,604.43 1481.5,599.28 1482.0,594.10 1482.5,588.89 1483.0,583.65 1483.5,578.40 1484.0,573.13 1484.5,567.85 1485.0,562.56 1485.5,557.27 1486.0,551.97 1486.5,546.69 1487.0,541.41 1487.5,536.15 1488.0,530.91 1488.5,525.69 1489.0,520.49 1489.5,515.33 1490.0,510.20 1490.5,505.11 1491.0,500.06 1491.5,495.06 1492.0,490.10 1492.5,485.21 1493.0,480.37 1493.5,475.59 1494.0,470.88 1494.5,466.25 1495.0,461.68 1495.5,457.19 1496.0,452.78 1496.5,448.46 1497.0,444.22 1497.5,440.08 1498.0,436.03 1498.5,432.08 1499.0,428.23 1499.5,424.48 1500.0,420.84 1500.5,417.31 1501.0,413.89 1501.5,410.58 1502.0,407.40 1502.5,404.33 1503.0,401.39 1503.5,398.58 1504.0,395.89 1504.5,393.33 1505.0,390.90 1505.5,388.60 1506.0,386.44 1506.5,384.42 1507.0,382.54 1507.5,380.80 1508.0,379.19 1508.5,377.74 1509.0,376.42 1509.5,375.25 1510.0,374.23 1510.5,373.35 1511.0,372.62 1511.5,372.04 1512.0,371.61 1512.5,371.33 1513.0,371.19 1513.5,371.21 1514.0,371.37 1514.5,371.68 1515.0,372.15 1515.5,372.76 1516.0,373.52 1516.5,374.42 1517.0,375.47 1517.5,376.67 1518.0,378.02 1518.5,379.50 1519.0,381.13 1519.5,382.90 1520.0,384.82 1520.5,386.87 1521.0,389.05 1521.5,391.37 1522.0,393.83 1522.5,396.41 1523.0,399.13 1523.5,401.97 1524.0,404.94 1524.5,408.03 1525.0,411.24 1525.5,414.56 1526.0,418.00 1526.5,421.56 1527.0,425.22 1527.5,428.99 1528.0,432.86 1528.5,436.83 1529.0,440.90 1529.5,445.06 1530.0,449.32 1530.5,453.66 1531.0,458.08 1531.5,462.59 1532.0,467.17 1532.5,471.82 1533.0,476.54 1533.5,481.33 1534.0,486.18 1534.5,491.09 1535.0,496.05 1535.5,501.06 1536.0,506.12 1536.5,511.22 1537.0,516.36 1537.5,521.53 1538.0,526.73 1538.5,531.96 1539.0,537.20 1539.5,542.47 1540.0,547.75 1540.5,553.03 1541.0,558.32 1541.5,563.62 1542.0,568.90 1542.5,574.18 1543.0,579.45 1543.5,584.70 1544.0,589.93 1544.5,595.14 1545.0,600.31 1545.5,605.46 1546.0,610.56 1546.5,615.63 1547.0,620.65 1547.5,625.62 1548.0,630.54 1548.5,635.40 1549.0,640.20 1549.5,644.93 1550.0,649.60 1550.5,654.19 1551.0,658.71 1551.5,663.15 1552.0,667.51 1552.5,671.78 1553.0,675.96 1553.5,680.04 1554.0,684.03 1554.5,687.92 1555.0,691.71 1555.5,695.39 1556.0,698.97 1556.5,702.43 1557.0,705.77 1557.5,709.00 1558.0,712.12 1558.5,715.10 1559.0,717.97 1559.5,720.71 1560.0,723.32 1560.5,725.79 1561.0,728.14 1561.5,730.35 1562.0,732.43 1562.5,734.36 1563.0,736.16 1563.5,737.81 1564.0,739.33 1564.5,740.70 1565.0,741.92 1565.5,743.00 1566.0,743.93 1566.5,744.72 1567.0,745.35 1567.5,745.84 1568.0,746.18 1568.5,746.37 1569.0,746.42 1569.5,746.31 1570.0,746.05 1570.5,745.65 1571.0,745.09 1571.5,744.39 1572.0,743.54 1572.5,742.54 1573.0,741.40 1573.5,740.11 1574.0,738.68 1574.5,737.10 1575.0,735.38 1575.5,733.53 1576.0,731.53 1576.5,729.40 1577.0,727.12 1577.5,724.72 1578.0,722.18 1578.5,719.52 1579.0,716.72 1579.5,713.80 1580.0,710.76 1580.5,707.60 1581.0,704.32 1581.5,700.92 1582.0,697.41 1582.5,693.79 1583.0,690.06 1583.5,686.22 1584.0,682.29 1584.5,678.26 1585.0,674.13 1585.5,669.91 1586.0,665.60 1586.5,661.21 1587.0,656.73 1587.5,652.18 1588.0,647.56 1588.5,642.86 1589.0,638.09 1589.5,633.27 1590.0,628.38 1590.5,623.44 1591.0,618.45 1591.5,613.41 1592.0,608.32 1592.5,603.20 1593.0,598.04 1593.5,592.85 1594.0,587.63 1594.5,582.39 1595.0,577.13 1595.5,571.86 1596.0,566.58 1596.5,561.29 1597.0,556.00 1597.5,550.71 1598.0,545.42 1598.5,540.15 1599.0,534.89 1599.5,529.65 1600.0,524.44 1600.5,519.25 1601.0,514.09 1601.5,508.97 1602.0,503.89 1602.5,498.85 1603.0,493.86 1603.5,488.92 1604.0,484.04 1604.5,479.22 1605.0,474.46 1605.5,469.76 1606.0,465.14 1606.5,460.60 1607.0,456.13 1607.5,451.74 1608.0,447.44 1608.5,443.22 1609.0,439.10 1609.5,435.07 1610.0,431.14 1610.5,427.32 1611.0,423.59 1611.5,419.98 1612.0,416.48 1612.5,413.08 1613.0,409.81 1613.5,406.65 1614.0,403.62 1614.5,400.70 1615.0,397.92 1615.5,395.26 1616.0,392.73 1616.5,390.34 1617.0,388.07 1617.5,385.95 1618.0,383.96 1618.5,382.11 1619.0,380.40 1619.5,378.83 1620.0,377.41 1620.5,376.13 1621.0,374.99 1621.5,374.00 1622.0,373.16 1622.5,372.47 1623.0,371.92 1623.5,371.53 1624.0,371.28 1624.5,371.18 1625.0,371.23 1625.5,371.43 1626.0,371.78 1626.5,372.28 1627.0,372.93 1627.5,373.72 1628.0,374.66 1628.5,375.75 1629.0,376.98 1629.5,378.36 1630.0,379.88 1630.5,381.55 1631.0,383.35 1631.5,385.30 1632.0,387.38 1632.5,389.60 1633.0,391.95 1633.5,394.44 1634.0,397.05 1634.5,399.80 1635.0,402.67 1635.5,405.67 1636.0,408.79 1636.5,412.02 1637.0,415.38 1637.5,418.85 1638.0,422.43 1638.5,426.11 1639.0,429.91 1639.5,433.80 1640.0,437.80 1640.5,441.89 1641.0,446.08 1641.5,450.35 1642.0,454.71 1642.5,459.16 1643.0,463.68 1643.5,468.28 1644.0,472.95 1644.5,477.69 1645.0,482.49 1645.5,487.36 1646.0,492.28 1646.5,497.25 1647.0,502.27 1647.5,507.34 1648.0,512.45 1648.5,517.60 1649.0,522.77 1649.5,527.98 1650.0,533.21 1650.5,538.47 1651.0,543.73 1651.5,549.01 1652.0,554.30 1652.5,559.59 1653.0,564.88 1653.5,570.17 1654.0,575.45 1654.5,580.71 1655.0,585.96 1655.5,591.18 1656.0,596.38 1656.5,601.55 1657.0,606.69 1657.5,611.78 1658.0,616.84 1658.5,621.85 1659.0,626.81 1659.5,631.71 1660.0,636.56 1660.5,641.34 1661.0,646.06 1661.5,650.71 1662.0,655.29 1662.5,659.79 1663.0,664.20 1663.5,668.54 1664.0,672.79 1664.5,676.95 1665.0,681.01 1665.5,684.98 1666.0,688.84 1666.5,692.60 1667.0,696.26 1667.5,699.81 1668.0,703.24 1668.5,706.56 1669.0,709.76 1669.5,712.84 1670.0,715.80 1670.5,718.64 1671.0,721.35 1671.5,723.92 1672.0,726.37 1672.5,728.68 1673.0,730.86 1673.5,732.90 1674.0,734.81 1674.5,736.57 1675.0,738.19 1675.5,739.67 1676.0,741.00 1676.5,742.19 1677.0,743.24 1677.5,744.13 1678.0,744.88 1678.5,745.49 1679.0,745.94 1679.5,746.24 1680.0,746.40 1680.5,746.40 1681.0,746.26 1681.5,745.97 1682.0,745.53 1682.5,744.94 1683.0,744.20 1683.5,743.31 1684.0,742.28 1684.5,741.10 1685.0,739.78 1685.5,738.31 1686.0,736.70 1686.5,734.95 1687.0,733.06 1687.5,731.03 1688.0,728.86 1688.5,726.56 1689.0,724.12 1689.5,721.56 1690.0,718.86 1690.5,716.04 1691.0,713.09 1691.5,710.01 1692.0,706.82 1692.5,703.51 1693.0,700.09 1693.5,696.55 1694.0,692.90 1694.5,689.15 1695.0,685.29 1695.5,681.33 1696.0,677.27 1696.5,673.12 1697.0,668.88 1697.5,664.55 1698.0,660.14 1698.5,655.65 1699.0,651.08 1699.5,646.43 1700.0,641.72 1700.5,636.94 1701.0,632.10 1701.5,627.20 1702.0,622.25 1702.5,617.24 1703.0,612.19 1703.5,607.10 1704.0,601.96 1704.5,596.80 1705.0,591.60 1705.5,586.38 1706.0,581.13 1706.5,575.87 1707.0,570.59 1707.5,565.31 1708.0,560.02 1708.5,554.73 1709.0,549.44 1709.5,544.16 1710.0,538.89 1710.5,533.63 1711.0,528.40 1711.5,523.19 1712.0,518.01 1712.5,512.86 1713.0,507.75 1713.5,502.68 1714.0,497.65 1714.5,492.67 1715.0,487.75 1715.5,482.88 1716.0,478.07 1716.5,473.33 1717.0,468.65 1717.5,464.04 1718.0,459.52 1718.5,455.06 1719.0,450.70 1719.5,446.42 1720.0,442.22 1720.5,438.12 1721.0,434.12 1721.5,430.22 1722.0,426.41 1722.5,422.72 1723.0,419.13 1723.5,415.65 1724.0,412.29 1724.5,409.04 1725.0,405.91 1725.5,402.91 1726.0,400.02 1726.5,397.27 1727.0,394.64 1727.5,392.14 1728.0,389.78 1728.5,387.55 1729.0,385.46 1729.5,383.50 1730.0,381.68 1730.5,380.01 1731.0,378.48 1731.5,377.09 1732.0,375.84 1732.5,374.74 1733.0,373.79 1733.5,372.98 1734.0,372.33 1734.5,371.82 1735.0,371.46 1735.5,371.24 1736.0,371.18 1736.5,371.27 1737.0,371.50 1737.5,371.89 1738.0,372.42 1738.5,373.10 1739.0,373.93 1739.5,374.91 1740.0,376.03 1740.5,377.30 1741.0,378.71 1741.5,380.27 1742.0,381.97 1742.5,383.80 1743.0,385.78 1743.5,387.90 1744.0,390.15 1744.5,392.53 1745.0,395.05 1745.5,397.70 1746.0,400.48 1746.5,403.38 1747.0,406.40 1747.5,409.55 1748.0,412.82 1748.5,416.20 1749.0,419.70 1749.5,423.30 1750.0,427.01 1750.5,430.83 1751.0,434.75 1751.5,438.77 1752.0,442.89 1752.5,447.09 1753.0,451.39 1753.5,455.77 1754.0,460.23 1754.5,464.78 1755.0,469.39 1755.5,474.08 1756.0,478.83 1756.5,483.65 1757.0,488.53 1757.5,493.47 1758.0,498.45 1758.5,503.49 1759.0,508.56 1759.5,513.68 1760.0,518.84 1760.5,524.02 1761.0,529.24 1761.5,534.47 1762.0,539.73 1762.5,545.00 1763.0,550.28 1763.5,555.57 1764.0,560.86 1764.5,566.15 1765.0,571.44 1765.5,576.71 1766.0,581.97 1766.5,587.21 1767.0,592.43 1767.5,597.63 1768.0,602.79 1768.5,607.91 1769.0,613.00 1769.5,618.04 1770.0,623.04 1770.5,627.99 1771.0,632.88 1771.5,637.71 1772.0,642.48 1772.5,647.18 1773.0,651.81 1773.5,656.37 1774.0,660.85 1774.5,665.25 1775.0,669.57 1775.5,673.79 1776.0,677.93 1776.5,681.97 1777.0,685.91 1777.5,689.75 1778.0,693.49 1778.5,697.12 1779.0,700.64 1779.5,704.05 1780.0,707.34 1780.5,710.51 1781.0,713.57 1781.5,716.50 1782.0,719.30 1782.5,721.98 1783.0,724.52 1783.5,726.94 1784.0,729.22 1784.5,731.36 1785.0,733.37 1785.5,735.24 1786.0,736.97 1786.5,738.56 1787.0,740.00 1787.5,741.30 1788.0,742.46 1788.5,743.47 1789.0,744.33 1789.5,745.04 1790.0,745.61 1790.5,746.03 1791.0,746.29 1791.5,746.41 1792.0,746.38 1792.5,746.20 1793.0,745.88 1793.5,745.40 1794.0,744.77 1794.5,744.00 1795.0,743.08 1795.5,742.01 1796.0,740.80 1796.5,739.44 1797.0,737.94 1797.5,736.30 1798.0,734.51 1798.5,732.59 1799.0,730.52 1799.5,728.32 1800.0,725.99 1800.5,723.52 1801.0,720.92 1801.5,718.19 1802.0,715.34 1802.5,712.36 1803.0,709.26 1803.5,706.04 1804.0,702.70 1804.5,699.25 1805.0,695.68 1805.5,692.01 1806.0,688.23 1806.5,684.35 1807.0,680.37 1807.5,676.29 1808.0,672.11 1808.5,667.85 1809.0,663.50 1809.5,659.07 1810.0,654.56 1810.5,649.97 1811.0,645.31 1811.5,640.58 1812.0,635.78 1812.5,630.93 1813.0,626.02 1813.5,621.05 1814.0,616.03 1814.5,610.97 1815.0,605.87 1815.5,600.73 1816.0,595.55 1816.5,590.35 1817.0,585.12 1817.5,579.87 1818.0,574.60 1818.5,569.33 1819.0,564.04 1819.5,558.75 1820.0,553.46 1820.5,548.17 1821.0,542.89 1821.5,537.62 1822.0,532.38 1822.5,527.15 1823.0,521.94 1823.5,516.77 1824.0,511.63 1824.5,506.53 1825.0,501.47 1825.5,496.45 1826.0,491.49 1826.5,486.57 1827.0,481.72 1827.5,476.93 1828.0,472.20 1828.5,467.54 1829.0,462.95 1829.5,458.44 1830.0,454.01 1830.5,449.66 1831.0,445.40 1831.5,441.23 1832.0,437.15 1832.5,433.17 1833.0,429.29 1833.5,425.52 1834.0,421.85 1834.5,418.28 1835.0,414.83 1835.5,411.50 1836.0,408.28 1836.5,405.18 1837.0,402.20 1837.5,399.35 1838.0,396.63 1838.5,394.03 1839.0,391.56 1839.5,389.23 1840.0,387.04 1840.5,384.97 1841.0,383.05 1841.5,381.27 1842.0,379.63 1842.5,378.13 1843.0,376.78 1843.5,375.56 1844.0,374.50 1844.5,373.58 1845.0,372.81 1845.5,372.19 1846.0,371.72 1846.5,371.39 1847.0,371.21 1847.5,371.19 1848.0,371.31 1848.5,371.58 1849.0,372.00 1849.5,372.57 1850.0,373.29 1850.5,374.15 1851.0,375.16 1851.5,376.32 1852.0,377.63 1852.5,379.07 1853.0,380.66 1853.5,382.39 1854.0,384.27 1854.5,386.28 1855.0,388.43 1855.5,390.71 1856.0,393.13 1856.5,395.68 1857.0,398.36 1857.5,401.16 1858.0,404.09 1858.5,407.15 1859.0,410.33 1859.5,413.62 1860.0,417.03 1860.5,420.55 1861.0,424.18 1861.5,427.92 1862.0,431.77 1862.5,435.71 1863.0,439.75 1863.5,443.89 1864.0,448.12 1864.5,452.43 1865.0,456.84 1865.5,461.32 1866.0,465.88 1866.5,470.51 1867.0,475.22 1867.5,479.99 1868.0,484.82 1868.5,489.71 1869.0,494.66 1869.5,499.66 1870.0,504.70 1870.5,509.79 1871.0,514.92 1871.5,520.08 1872.0,525.27 1872.5,530.49 1873.0,535.73 1873.5,540.99 1874.0,546.27 1874.5,551.55 1875.0,556.84 1875.5,562.13 1876.0,567.42 1876.5,572.71 1877.0,577.98 1877.5,583.23 1878.0,588.47 1878.5,593.68 1879.0,598.87 1879.5,604.02 1880.0,609.14 1880.5,614.22 1881.0,619.25 1881.5,624.23 1882.0,629.17 1882.5,634.04 1883.0,638.86 1883.5,643.61 1884.0,648.30 1884.5,652.92 1885.0,657.46 1885.5,661.92 1886.0,666.30 1886.5,670.59 1887.0,674.80 1887.5,678.91 1888.0,682.93 1888.5,686.84 1889.0,690.66 1889.5,694.37 1890.0,697.98 1890.5,701.47 1891.0,704.85 1891.5,708.11 1892.0,711.26 1892.5,714.28 1893.0,717.18 1893.5,719.95 1894.0,722.60 1894.5,725.11 1895.0,727.50 1895.5,729.75 1896.0,731.86 1896.5,733.83 1897.0,735.67 1897.5,737.36 1898.0,738.92 1898.5,740.33 1899.0,741.59 1899.5,742.71 1900.0,743.69 1900.5,744.51 1901.0,745.19 1901.5,745.72 1902.0,746.10 1902.5,746.34 1903.0,746.42 1903.5,746.35 1904.0,746.14 1904.5,745.78 1905.0,745.26 1905.5,744.60 1906.0,743.79 1906.5,742.84 1907.0,741.73 1907.5,740.49 1908.0,739.09 1908.5,737.56 1909.0,735.88 1909.5,734.06 1910.0,732.10 1910.5,730.01 1911.0,727.77 1911.5,725.41 1912.0,722.91 1912.5,720.28 1913.0,717.52 1913.5,714.63 1914.0,711.63 1914.5,708.50 1915.0,705.25 1915.5,701.88 1916.0,698.40 1916.5,694.81 1917.0,691.11 1917.5,687.31 1918.0,683.40 1918.5,679.40 1919.0,675.29 1919.5,671.10 1920.0,666.82 1920.5,662.45 1921.0,657.99 1921.5,653.46 1922.0,648.86 1922.5,644.18 1923.0,639.43 1923.5,634.62 1924.0,629.75 1924.5,624.83 1925.0,619.85 1925.5,614.82 1926.0,609.75 1926.5,604.64 1927.0,599.49 1927.5,594.31 1928.0,589.10 1928.5,583.86 1929.0,578.61 1929.5,573.34 1930.0,568.06 1930.5,562.77 1931.0,557.48 1931.5,552.19 1932.0,546.90 1932.5,541.63 1933.0,536.36 1933.5,531.12 1934.0,525.90 1934.5,520.70 1935.0,515.53 1935.5,510.40 1936.0,505.31 1936.5,500.26 1937.0,495.25 1937.5,490.30 1938.0,485.40 1938.5,480.56 1939.0,475.78 1939.5,471.07 1940.0,466.43 1940.5,461.86 1941.0,457.37 1941.5,452.96 1942.0,448.63 1942.5,444.39 1943.0,440.24 1943.5,436.19 1944.0,432.23 1944.5,428.38 1945.0,424.63 1945.5,420.98 1946.0,417.45 1946.5,414.02 1947.0,410.71 1947.5,407.52 1948.0,404.45 1948.5,401.51 1949.0,398.69 1949.5,395.99 1950.0,393.43 1950.5,390.99 1951.0,388.69 1951.5,386.53 1952.0,384.50 1952.5,382.61 1953.0,380.86 1953.5,379.26 1954.0,377.79 1954.5,376.47 1955.0,375.30 1955.5,374.27 1956.0,373.38 1956.5,372.65 1957.0,372.06 1957.5,371.62 1958.0,371.33 1958.5,371.19 1959.0,371.20 1959.5,371.36 1960.0,371.67 1960.5,372.13 1961.0,372.73 1961.5,373.48 1962.0,374.38 1962.5,375.43 1963.0,376.62 1963.5,377.96 1964.0,379.44 1964.5,381.07 1965.0,382.83 1965.5,384.74 1966.0,386.78 1966.5,388.96 1967.0,391.28 1967.5,393.73 1968.0,396.31 1968.5,399.02 1969.0,401.85 1969.5,404.82 1970.0,407.90 1970.5,411.10 1971.0,414.43 1971.5,417.86 1972.0,421.41 1972.5,425.07 1973.0,428.83 1973.5,432.70 1974.0,436.67 1974.5,440.74 1975.0,444.90 1975.5,449.15 1976.0,453.48 1976.5,457.90 1977.0,462.41 1977.5,466.98 1978.0,471.63 1978.5,476.35 1979.0,481.14 1979.5,485.99 1980.0,490.89 1980.5,495.85 1981.0,500.86 1981.5,505.92 1982.0,511.02 1982.5,516.15 1983.0,521.32 1983.5,526.52 1984.0,531.75 1984.5,536.99 1985.0,542.26 1985.5,547.53 1986.0,552.82 1986.5,558.11 1987.0,563.40 1987.5,568.69 1988.0,573.97 1988.5,579.24 1989.0,584.49 1989.5,589.72 1990.0,594.93 1990.5,600.11 1991.0,605.25 1991.5,610.36 1992.0,615.43 1992.5,620.45 1993.0,625.42 1993.5,630.34 1994.0,635.21 1994.5,640.01 1995.0,644.75 1995.5,649.41 1996.0,654.01 1996.5,658.53 1997.0,662.98 1997.5,667.33 1998.0,671.61 1998.5,675.79 1999.0,679.88 1999.5,683.87 2000.0,687.77 2000.5,691.56 2001.0,695.25 2001.5,698.82 2002.0,702.29 2002.5,705.64 2003.0,708.88 2003.5,711.99 2004.0,714.99 2004.5,717.86 2005.0,720.60 2005.5,723.21 2006.0,725.70 2006.5,728.05 2007.0,730.27 2007.5,732.35 2008.0,734.29 2008.5,736.09 2009.0,737.75 2009.5,739.27 2010.0,740.64 2010.5,741.87 2011.0,742.96 2011.5,743.90 2012.0,744.69 2012.5,745.33 2013.0,745.83 2013.5,746.17 2014.0,746.37 2014.5,746.42 2015.0,746.32 2015.5,746.07 2016.0,745.67 2016.5,745.12 2017.0,744.42 2017.5,743.58 2018.0,742.59 2018.5,741.45 2019.0,740.17 2019.5,738.74 2020.0,737.17 2020.5,735.46 2021.0,733.60 2021.5,731.61 2022.0,729.48 2022.5,727.22 2023.0,724.82 2023.5,722.29 2024.0,719.63 2024.5,716.84 2025.0,713.92 2025.5,710.89 2026.0,707.73 2026.5,704.45 2027.0,701.06 2027.5,697.55 2028.0,693.93 2028.5,690.21 2029.0,686.38 2029.5,682.45 2030.0,678.42 2030.5,674.30 2031.0,670.08 2031.5,665.78 2032.0,661.39 2032.5,656.91 2033.0,652.37 2033.5,647.74 2034.0,643.05 2034.5,638.29 2035.0,633.46 2035.5,628.58 2036.0,623.64 2036.5,618.65 2037.0,613.61 2037.5,608.53 2038.0,603.40 2038.5,598.25 2039.0,593.06 2039.5,587.84 2040.0,582.60 2040.5,577.34 2041.0,572.07 2041.5,566.79 2042.0,561.50 2042.5,556.21 2043.0,550.92 2043.5,545.63 2044.0,540.36 2044.5,535.10 2045.0,529.86 2045.5,524.65 2046.0,519.46 2046.5,514.30 2047.0,509.18 2047.5,504.09 2048.0,499.05 2048.5,494.06 2049.0,489.12 2049.5,484.24 2050.0,479.41 2050.5,474.65 2051.0,469.95 2051.5,465.33 2052.0,460.78 2052.5,456.30 2053.0,451.91 2053.5,447.61 2054.0,443.39 2054.5,439.26 2055.0,435.23 2055.5,431.30 2056.0,427.47 2056.5,423.74 2057.0,420.12 2057.5,416.61 2058.0,413.22 2058.5,409.94 2059.0,406.78 2059.5,403.74 2060.0,400.82 2060.5,398.03 2061.0,395.36 2061.5,392.83 2062.0,390.43 2062.5,388.16 2063.0,386.03 2063.5,384.03 2064.0,382.18 2064.5,380.46 2065.0,378.89 2065.5,377.46 2066.0,376.18 2066.5,375.04 2067.0,374.04 2067.5,373.19 2068.0,372.49 2068.5,371.94 2069.0,371.54 2069.5,371.29 2070.0,371.18 2070.5,371.23 2071.0,371.42 2071.5,371.76 2072.0,372.26 2072.5,372.90 2073.0,373.69 2073.5,374.62 2074.0,375.70 2074.5,376.93 2075.0,378.30 2075.5,379.82 2076.0,381.48 2076.5,383.28 2077.0,385.21 2077.5,387.29 2078.0,389.51 2078.5,391.85 2079.0,394.33 2079.5,396.95 2080.0,399.69 2080.5,402.55 2081.0,405.55 2081.5,408.66 2082.0,411.89 2082.5,415.24 2083.0,418.71 2083.5,422.28 2084.0,425.96 2084.5,429.75 2085.0,433.65 2085.5,437.64 2086.0,441.73 2086.5,445.91 2087.0,450.18 2087.5,454.54 2088.0,458.98 2088.5,463.50 2089.0,468.09 2089.5,472.76 2090.0,477.50 2090.5,482.30 2091.0,487.16 2091.5,492.08 2092.0,497.05 2092.5,502.07 2093.0,507.14 2093.5,512.25 2094.0,517.39 2094.5,522.57 2095.0,527.77 2095.5,533.00 2096.0,538.26 2096.5,543.52 2097.0,548.80 2097.5,554.09 2098.0,559.38 2098.5,564.67 2099.0,569.96 2099.5,575.24 2100.0,580.50 2100.5,585.75 2101.0,590.97 2101.5,596.17 2102.0,601.34 2102.5,606.48 2103.0,611.58 2103.5,616.64 2104.0,621.65 2104.5,626.61 2105.0,631.51 2105.5,636.36 2106.0,641.15 2106.5,645.87 2107.0,650.52 2107.5,655.10 2108.0,659.61 2108.5,664.03 2109.0,668.37 2109.5,672.62 2110.0,676.78 2110.5,680.85 2111.0,684.82 2111.5,688.69 2112.0,692.46 2112.5,696.12 2113.0,699.67 2113.5,703.11 2114.0,706.43 2114.5,709.64 2115.0,712.72 2115.5,715.69" fill="none" stroke="#b246fb" stroke-width="1.25" stroke-linejoin="round"/></g><rect x="386.8" y="870.85" width="3.2" height="1.3" fill="#2a2a2a"/><rect x="386.8" y="808.31" width="3.2" height="1.3" fill="#2a2a2a"/><rect x="386.8" y="745.77" width="3.2" height="1.3" fill="#2a2a2a"/><rect x="386.8" y="683.23" width="3.2" height="1.3" fill="#2a2a2a"/><rect x="386.8" y="620.69" width="3.2" height="1.3" fill="#2a2a2a"/><rect x="386.8" y="558.15" width="3.2" height="1.3" fill="#2a2a2a"/><rect x="386.8" y="495.61" width="3.2" height="1.3" fill="#2a2a2a"/><rect x="386.8" y="433.07" width="3.2" height="1.3" fill="#2a2a2a"/><rect x="386.8" y="370.53" width="3.2" height="1.3" fill="#2a2a2a"/><rect x="386.8" y="307.99" width="3.2" height="1.3" fill="#2a2a2a"/><rect x="386.8" y="245.45" width="3.2" height="1.3" fill="#2a2a2a"/><rect x="388.90" y="903.5" width="1.6" height="3" fill="#404040"/><rect x="444.62" y="903.5" width="1.6" height="3" fill="#404040"/><rect x="500.35" y="903.5" width="1.6" height="3" fill="#404040"/><rect x="556.07" y="903.5" width="1.6" height="3" fill="#404040"/><rect x="611.80" y="903.5" width="1.6" height="3" fill="#404040"/><rect x="667.52" y="903.5" width="1.6" height="3" fill="#404040"/><rect x="723.24" y="903.5" width="1.6" height="3" fill="#404040"/><rect x="778.97" y="903.5" width="1.6" height="3" fill="#404040"/><rect x="834.69" y="903.5" width="1.6" height="3" fill="#404040"/><rect x="890.42" y="903.5" width="1.6" height="3" fill="#404040"/><rect x="946.14" y="903.5" width="1.6" height="3" fill="#404040"/><rect x="1001.86" y="903.5" width="1.6" height="3" fill="#404040"/><rect x="1057.59" y="903.5" width="1.6" height="3" fill="#404040"/><rect x="1113.31" y="903.5" width="1.6" height="3" fill="#404040"/><rect x="1169.04" y="903.5" width="1.6" height="3" fill="#404040"/><rect x="1224.76" y="903.5" width="1.6" height="3" fill="#404040"/><rect x="1280.48" y="903.5" width="1.6" height="3" fill="#404040"/><rect x="1336.21" y="903.5" width="1.6" height="3" fill="#404040"/><rect x="1391.93" y="903.5" width="1.6" height="3" fill="#404040"/><rect x="1447.66" y="903.5" width="1.6" height="3" fill="#404040"/><rect x="1503.38" y="903.5" width="1.6" height="3" fill="#404040"/><rect x="1559.10" y="903.5" width="1.6" height="3" fill="#404040"/><rect x="1614.83" y="903.5" width="1.6" height="3" fill="#404040"/><rect x="1670.55" y="903.5" width="1.6" height="3" fill="#404040"/><rect x="1726.28" y="903.5" width="1.6" height="3" fill="#404040"/><rect x="1782.00" y="903.5" width="1.6" height="3" fill="#404040"/><rect x="1837.72" y="903.5" width="1.6" height="3" fill="#404040"/><rect x="1893.45" y="903.5" width="1.6" height="3" fill="#404040"/><rect x="1949.17" y="903.5" width="1.6" height="3" fill="#404040"/><rect x="2004.90" y="903.5" width="1.6" height="3" fill="#404040"/><rect x="2060.62" y="903.5" width="1.6" height="3" fill="#404040"/></svg>
<div class="t" style="left:366.69px;top:865.55px;font-size:11px;color:#262626;">-10</div>
<div class="t" style="left:372.82px;top:803.01px;font-size:11px;color:#262626;">-8</div>
<div class="t" style="left:372.82px;top:740.47px;font-size:11px;color:#262626;">-6</div>
<div class="t" style="left:372.82px;top:677.93px;font-size:11px;color:#262626;">-4</div>
<div class="t" style="left:372.82px;top:615.39px;font-size:11px;color:#262626;">-2</div>
<div class="t" style="left:376.48px;top:552.85px;font-size:11px;color:#262626;">0</div>
<div class="t" style="left:376.48px;top:490.31px;font-size:11px;color:#262626;">2</div>
<div class="t" style="left:376.48px;top:427.77px;font-size:11px;color:#262626;">4</div>
<div class="t" style="left:376.48px;top:365.23px;font-size:11px;color:#262626;">6</div>
<div class="t" style="left:376.48px;top:302.69px;font-size:11px;color:#262626;">8</div>
<div class="t" style="left:370.35px;top:240.15px;font-size:11px;color:#262626;">10</div>
<div class="t" style="left:386.84px;top:907.85px;font-size:11px;color:#262626;">0</div>
<div class="t" style="left:439.50px;top:907.85px;font-size:11px;color:#262626;">10</div>
<div class="t" style="left:495.22px;top:907.85px;font-size:11px;color:#262626;">20</div>
<div class="t" style="left:550.95px;top:907.85px;font-size:11px;color:#262626;">30</div>
<div class="t" style="left:606.67px;top:907.85px;font-size:11px;color:#262626;">40</div>
<div class="t" style="left:662.39px;top:907.85px;font-size:11px;color:#262626;">50</div>
<div class="t" style="left:718.12px;top:907.85px;font-size:11px;color:#262626;">60</div>
<div class="t" style="left:773.84px;top:907.85px;font-size:11px;color:#262626;">70</div>
<div class="t" style="left:829.57px;top:907.85px;font-size:11px;color:#262626;">80</div>
<div class="t" style="left:885.29px;top:907.85px;font-size:11px;color:#262626;">90</div>
<div class="t" style="left:937.96px;top:907.85px;font-size:11px;color:#262626;">100</div>
<div class="t" style="left:994.09px;top:907.85px;font-size:11px;color:#262626;">110</div>
<div class="t" style="left:1049.41px;top:907.85px;font-size:11px;color:#262626;">120</div>
<div class="t" style="left:1105.13px;top:907.85px;font-size:11px;color:#262626;">130</div>
<div class="t" style="left:1160.86px;top:907.85px;font-size:11px;color:#262626;">140</div>
<div class="t" style="left:1216.58px;top:907.85px;font-size:11px;color:#262626;">150</div>
<div class="t" style="left:1272.30px;top:907.85px;font-size:11px;color:#262626;">160</div>
<div class="t" style="left:1328.03px;top:907.85px;font-size:11px;color:#262626;">170</div>
<div class="t" style="left:1383.75px;top:907.85px;font-size:11px;color:#262626;">180</div>
<div class="t" style="left:1439.48px;top:907.85px;font-size:11px;color:#262626;">190</div>
<div class="t" style="left:1495.20px;top:907.85px;font-size:11px;color:#262626;">200</div>
<div class="t" style="left:1550.92px;top:907.85px;font-size:11px;color:#262626;">210</div>
<div class="t" style="left:1606.65px;top:907.85px;font-size:11px;color:#262626;">220</div>
<div class="t" style="left:1662.37px;top:907.85px;font-size:11px;color:#262626;">230</div>
<div class="t" style="left:1718.10px;top:907.85px;font-size:11px;color:#262626;">240</div>
<div class="t" style="left:1773.82px;top:907.85px;font-size:11px;color:#262626;">250</div>
<div class="t" style="left:1829.54px;top:907.85px;font-size:11px;color:#262626;">260</div>
<div class="t" style="left:1885.27px;top:907.85px;font-size:11px;color:#262626;">270</div>
<div class="t" style="left:1940.99px;top:907.85px;font-size:11px;color:#262626;">280</div>
<div class="t" style="left:1996.72px;top:907.85px;font-size:11px;color:#262626;">290</div>
<div class="t" style="left:2052.44px;top:907.85px;font-size:11px;color:#262626;">300</div>
<div class="t" style="left:1222.85px;top:932.45px;font-size:11px;color:#262626;">Time (ms)</div>
<div style="position:absolute;left:317px;top:956px;width:1821px;height:1px;background:#d6d6d6"></div>
<div style="position:absolute;left:317px;top:962px;width:1821px;height:1px;background:#d6d6d6"></div>
<div style="position:absolute;left:317px;top:957px;width:1821px;height:5px;background:#fbfbfb"></div>
<div style="position:absolute;left:1210px;top:959px;width:22px;height:1px;background:#9a9a9a"></div>
<div style="position:absolute;left:317px;top:963px;width:1821px;height:330px;background:#f9f9f9"></div>
<div style="position:absolute;left:327px;top:971px;width:1803px;height:310px;background:#f9f9f9"></div>
<div style="position:absolute;left:328px;top:972px;width:1801px;height:30px;background:#f3f3f3"></div>
<div style="position:absolute;left:328px;top:1003px;width:1801px;height:247px;background:#ffffff"></div>
<div style="position:absolute;left:328px;top:1052px;width:1801px;height:24px;background:#d6d6d6"></div>
<div style="position:absolute;left:327px;top:971px;width:1803px;height:1px;background:#808080"></div>
<div style="position:absolute;left:327px;top:971px;width:1px;height:310px;background:#9c9c9c"></div>
<div style="position:absolute;left:2129px;top:971px;width:1px;height:310px;background:#8a8a8a"></div>
<div style="position:absolute;left:327px;top:1280px;width:1803px;height:1px;background:#8a8a8a"></div>
<div style="position:absolute;left:328px;top:1002px;width:1801px;height:1px;background:#8a8a8a"></div>
<div style="position:absolute;left:328px;top:1027px;width:1801px;height:1px;background:#9a9a9a"></div>
<div style="position:absolute;left:328px;top:1051px;width:1801px;height:1px;background:#9a9a9a"></div>
<div style="position:absolute;left:328px;top:1076px;width:1801px;height:1px;background:#9a9a9a"></div>
<div style="position:absolute;left:328px;top:1101px;width:1801px;height:1px;background:#9a9a9a"></div>
<div style="position:absolute;left:328px;top:1126px;width:1801px;height:1px;background:#9a9a9a"></div>
<div style="position:absolute;left:328px;top:1150px;width:1801px;height:1px;background:#9a9a9a"></div>
<div style="position:absolute;left:328px;top:1175px;width:1801px;height:1px;background:#9a9a9a"></div>
<div style="position:absolute;left:328px;top:1200px;width:1801px;height:1px;background:#9a9a9a"></div>
<div style="position:absolute;left:328px;top:1225px;width:1801px;height:1px;background:#9a9a9a"></div>
<div style="position:absolute;left:328px;top:1249px;width:1801px;height:1px;background:#9a9a9a"></div>
<div style="position:absolute;left:670.0px;top:972px;width:1px;height:278px;background:#8c8c8c"></div>
<div style="position:absolute;left:762.0px;top:972px;width:1px;height:278px;background:#8c8c8c"></div>
<div style="position:absolute;left:942.0px;top:972px;width:1px;height:278px;background:#8c8c8c"></div>
<div style="position:absolute;left:1122.0px;top:972px;width:1px;height:278px;background:#8c8c8c"></div>
<div style="position:absolute;left:1248.0px;top:972px;width:1px;height:278px;background:#8c8c8c"></div>
<div style="position:absolute;left:1374.0px;top:972px;width:1px;height:278px;background:#8c8c8c"></div>
<div style="position:absolute;left:1499.0px;top:972px;width:1px;height:278px;background:#8c8c8c"></div>
<div style="position:absolute;left:1625.0px;top:972px;width:1px;height:278px;background:#8c8c8c"></div>
<div style="position:absolute;left:1751.0px;top:972px;width:1px;height:278px;background:#8c8c8c"></div>
<div style="position:absolute;left:1877.0px;top:972px;width:1px;height:278px;background:#8c8c8c"></div>
<div style="position:absolute;left:2003.0px;top:972px;width:1px;height:278px;background:#8c8c8c"></div>
<div class="t" style="left:331.60px;top:981.57px;font-size:13.8px;color:#1a1a1a;font-weight:bold;transform:scaleX(0.9426);transform-origin:0 0;">Name</div>
<div class="t" style="left:674.60px;top:981.57px;font-size:13.8px;color:#1a1a1a;font-weight:bold;transform:scaleX(0.9422);transform-origin:0 0;">Line</div>
<div class="t" style="left:766.60px;top:981.57px;font-size:13.8px;color:#1a1a1a;font-weight:bold;transform:scaleX(0.9421);transform-origin:0 0;">ROI - Min (s)</div>
<div class="t" style="left:946.60px;top:981.57px;font-size:13.8px;color:#1a1a1a;font-weight:bold;transform:scaleX(0.9424);transform-origin:0 0;">ROI - Max (s)</div>
<div class="t" style="left:1126.60px;top:981.57px;font-size:13.8px;color:#1a1a1a;font-weight:bold;transform:scaleX(0.9421);transform-origin:0 0;">Min - Value</div>
<div class="t" style="left:1252.60px;top:981.57px;font-size:13.8px;color:#1a1a1a;font-weight:bold;transform:scaleX(0.9422);transform-origin:0 0;">Min - Time (s)</div>
<div class="t" style="left:1378.60px;top:981.57px;font-size:13.8px;color:#1a1a1a;font-weight:bold;transform:scaleX(0.9422);transform-origin:0 0;">Max - Value</div>
<div class="t" style="left:1503.60px;top:981.57px;font-size:13.8px;color:#1a1a1a;font-weight:bold;transform:scaleX(0.9423);transform-origin:0 0;">Max - Time (s)</div>
<div class="t" style="left:1629.60px;top:981.57px;font-size:13.8px;color:#1a1a1a;font-weight:bold;transform:scaleX(0.9420);transform-origin:0 0;">Mean</div>
<div class="t" style="left:1755.60px;top:981.57px;font-size:13.8px;color:#1a1a1a;font-weight:bold;transform:scaleX(0.9423);transform-origin:0 0;">Peak Numbers ...</div>
<div class="t" style="left:1881.60px;top:981.57px;font-size:13.8px;color:#1a1a1a;font-weight:bold;transform:scaleX(0.9422);transform-origin:0 0;">Peak Values</div>
<div class="t" style="left:2007.60px;top:981.57px;font-size:13.8px;color:#1a1a1a;font-weight:bold;transform:scaleX(0.9421);transform-origin:0 0;">Peak Times (s)</div>
<svg style="position:absolute;left:337.5px;top:1011px" width="9" height="6" viewBox="0 0 9 6"><path d="M0,0 L9,0 L4.5,5 Z" fill="#555"/></svg>
<div class="t" style="left:356.30px;top:1007.87px;font-size:13.8px;color:#262626;transform:scaleX(0.8998);transform-origin:0 0;">Dev3_1.Dev3_ai0</div>
<div style="position:absolute;left:674px;top:1006px;width:85px;height:19px;background:#f3681a"></div>
<div class="t" style="left:867.85px;top:1008.27px;font-size:13.8px;color:#303030;transform:scaleX(0.9422);transform-origin:0 0;">0.0000e+00</div>
<div class="t" style="left:1051.12px;top:1008.27px;font-size:13.8px;color:#303030;transform:scaleX(0.9420);transform-origin:0 0;">3.0990e-01</div>
<div class="t" style="left:1169.53px;top:1008.27px;font-size:13.8px;color:#303030;transform:scaleX(0.9422);transform-origin:0 0;">-1.0001e+01</div>
<div class="t" style="left:1303.12px;top:1008.27px;font-size:13.8px;color:#303030;transform:scaleX(0.9420);transform-origin:0 0;">1.7170e-01</div>
<div class="t" style="left:1424.85px;top:1008.27px;font-size:13.8px;color:#303030;transform:scaleX(0.9422);transform-origin:0 0;">1.0002e+01</div>
<div class="t" style="left:1554.12px;top:1008.27px;font-size:13.8px;color:#303030;transform:scaleX(0.9420);transform-origin:0 0;">1.0170e-01</div>
<div class="t" style="left:1680.12px;top:1008.27px;font-size:13.8px;color:#303030;transform:scaleX(0.9420);transform-origin:0 0;">1.0903e-01</div>
<div class="t" style="left:1856.01px;top:1008.27px;font-size:13.8px;color:#303030;transform:scaleX(0.9417);transform-origin:0 0;">(3)</div>
<svg style="position:absolute;left:358px;top:1036px" width="9" height="6" viewBox="0 0 9 6"><path d="M0,0 L9,0 L4.5,5 Z" fill="#555"/></svg>
<div class="t" style="left:376.80px;top:1032.67px;font-size:13.8px;color:#262626;transform:scaleX(0.8368);transform-origin:0 0;">Peaks</div>
<div style="position:absolute;left:674px;top:1031px;width:85px;height:18px;background:#f3681a"></div>
<div class="t" style="left:1856.01px;top:1033.27px;font-size:13.8px;color:#303030;transform:scaleX(0.9417);transform-origin:0 0;">(3)</div>
<div style="position:absolute;left:674px;top:1055px;width:85px;height:19px;background:#f3681a"></div>
<div class="t" style="left:1864.67px;top:1057.27px;font-size:13.8px;color:#303030;transform:scaleX(0.9411);transform-origin:0 0;">1</div>
<div class="t" style="left:1928.85px;top:1057.27px;font-size:13.8px;color:#303030;transform:scaleX(0.9422);transform-origin:0 0;">1.0002e+01</div>
<div class="t" style="left:2058.12px;top:1057.27px;font-size:13.8px;color:#303030;transform:scaleX(0.9420);transform-origin:0 0;">1.4173e-01</div>
<div style="position:absolute;left:674px;top:1080px;width:85px;height:19px;background:#f3681a"></div>
<div class="t" style="left:1864.67px;top:1082.27px;font-size:13.8px;color:#303030;transform:scaleX(0.9411);transform-origin:0 0;">2</div>
<div class="t" style="left:1928.85px;top:1082.27px;font-size:13.8px;color:#303030;transform:scaleX(0.9422);transform-origin:0 0;">1.0002e+01</div>
<div class="t" style="left:2058.12px;top:1082.27px;font-size:13.8px;color:#303030;transform:scaleX(0.9420);transform-origin:0 0;">1.8172e-01</div>
<div style="position:absolute;left:674px;top:1105px;width:85px;height:19px;background:#f3681a"></div>
<div class="t" style="left:1864.67px;top:1107.27px;font-size:13.8px;color:#303030;transform:scaleX(0.9411);transform-origin:0 0;">3</div>
<div class="t" style="left:1928.85px;top:1107.27px;font-size:13.8px;color:#303030;transform:scaleX(0.9422);transform-origin:0 0;">1.0002e+01</div>
<div class="t" style="left:2058.12px;top:1107.27px;font-size:13.8px;color:#303030;transform:scaleX(0.9420);transform-origin:0 0;">2.4171e-01</div>
<svg style="position:absolute;left:337.5px;top:1135px" width="9" height="6" viewBox="0 0 9 6"><path d="M0,0 L9,0 L4.5,5 Z" fill="#555"/></svg>
<div class="t" style="left:356.30px;top:1131.87px;font-size:13.8px;color:#262626;transform:scaleX(0.8998);transform-origin:0 0;">Dev3_1.Dev3_ai1</div>
<div style="position:absolute;left:674px;top:1130px;width:85px;height:18px;background:#b045fb"></div>
<div class="t" style="left:867.85px;top:1132.27px;font-size:13.8px;color:#303030;transform:scaleX(0.9422);transform-origin:0 0;">0.0000e+00</div>
<div class="t" style="left:1051.12px;top:1132.27px;font-size:13.8px;color:#303030;transform:scaleX(0.9420);transform-origin:0 0;">3.0990e-01</div>
<div class="t" style="left:1169.53px;top:1132.27px;font-size:13.8px;color:#303030;transform:scaleX(0.9422);transform-origin:0 0;">-6.0027e+00</div>
<div class="t" style="left:1303.12px;top:1132.27px;font-size:13.8px;color:#303030;transform:scaleX(0.9420);transform-origin:0 0;">1.1730e-02</div>
<div class="t" style="left:1424.85px;top:1132.27px;font-size:13.8px;color:#303030;transform:scaleX(0.9422);transform-origin:0 0;">6.0009e+00</div>
<div class="t" style="left:1554.12px;top:1132.27px;font-size:13.8px;color:#303030;transform:scaleX(0.9420);transform-origin:0 0;">8.1710e-02</div>
<div class="t" style="left:1680.12px;top:1132.27px;font-size:13.8px;color:#303030;transform:scaleX(0.9420);transform-origin:0 0;">6.4896e-02</div>
<div class="t" style="left:1856.01px;top:1132.27px;font-size:13.8px;color:#303030;transform:scaleX(0.9417);transform-origin:0 0;">(3)</div>
<svg style="position:absolute;left:358px;top:1159px" width="9" height="6" viewBox="0 0 9 6"><path d="M0,0 L9,0 L4.5,5 Z" fill="#555"/></svg>
<div class="t" style="left:376.80px;top:1155.67px;font-size:13.8px;color:#262626;transform:scaleX(0.8368);transform-origin:0 0;">Peaks</div>
<div style="position:absolute;left:674px;top:1154px;width:85px;height:19px;background:#b045fb"></div>
<div class="t" style="left:1856.01px;top:1156.27px;font-size:13.8px;color:#303030;transform:scaleX(0.9417);transform-origin:0 0;">(3)</div>
<div style="position:absolute;left:674px;top:1179px;width:85px;height:19px;background:#b045fb"></div>
<div class="t" style="left:1864.67px;top:1181.27px;font-size:13.8px;color:#303030;transform:scaleX(0.9411);transform-origin:0 0;">1</div>
<div class="t" style="left:1928.85px;top:1181.27px;font-size:13.8px;color:#303030;transform:scaleX(0.9422);transform-origin:0 0;">6.0009e+00</div>
<div class="t" style="left:2058.12px;top:1181.27px;font-size:13.8px;color:#303030;transform:scaleX(0.9420);transform-origin:0 0;">8.1710e-02</div>
<div style="position:absolute;left:674px;top:1204px;width:85px;height:19px;background:#b045fb"></div>
<div class="t" style="left:1864.67px;top:1206.27px;font-size:13.8px;color:#303030;transform:scaleX(0.9411);transform-origin:0 0;">2</div>
<div class="t" style="left:1928.85px;top:1206.27px;font-size:13.8px;color:#303030;transform:scaleX(0.9422);transform-origin:0 0;">6.0009e+00</div>
<div class="t" style="left:2058.12px;top:1206.27px;font-size:13.8px;color:#303030;transform:scaleX(0.9420);transform-origin:0 0;">8.1730e-02</div>
<div style="position:absolute;left:674px;top:1229px;width:85px;height:18px;background:#b045fb"></div>
<div class="t" style="left:1864.67px;top:1231.27px;font-size:13.8px;color:#303030;transform:scaleX(0.9411);transform-origin:0 0;">3</div>
<div class="t" style="left:1928.85px;top:1231.27px;font-size:13.8px;color:#303030;transform:scaleX(0.9422);transform-origin:0 0;">6.0006e+00</div>
<div class="t" style="left:2058.12px;top:1231.27px;font-size:13.8px;color:#303030;transform:scaleX(0.9420);transform-origin:0 0;">2.8171e-01</div>
<svg style="position:absolute;left:0px;top:0px" width="10" height="10" viewBox="0 0 10 10"><path d="M0,0 L7.5,0 A7.5,7.5 0 0 0 0,7.5 Z" fill="#1c1c1c"/><path d="M0.6,8 A7.4,7.4 0 0 1 8,0.6" fill="none" stroke="#9a9a9a" stroke-width="1.1"/><path d="M1.8,8.5 A6.6,6.6 0 0 1 8.5,1.8" fill="none" stroke="#ffffff" stroke-width="1"/></svg>
<svg style="position:absolute;left:2129px;top:0px" width="10" height="10" viewBox="0 0 10 10"><path d="M10,0 L2.5,0 A7.5,7.5 0 0 1 10,7.5 Z" fill="#1c1c1c"/><path d="M2,0.6 A7.4,7.4 0 0 1 9.4,8" fill="none" stroke="#9a9a9a" stroke-width="1.1"/></svg>
<svg style="position:absolute;left:0px;top:1283px" width="10" height="10" viewBox="0 0 10 10"><path d="M0,10 L0,2.5 A7.5,7.5 0 0 0 7.5,10 Z" fill="#111111"/></svg>
<svg style="position:absolute;left:2129px;top:1283px" width="10" height="10" viewBox="0 0 10 10"><path d="M10,10 L10,2.5 A7.5,7.5 0 0 1 2.5,10 Z" fill="#222222"/></svg>
</body></html>
